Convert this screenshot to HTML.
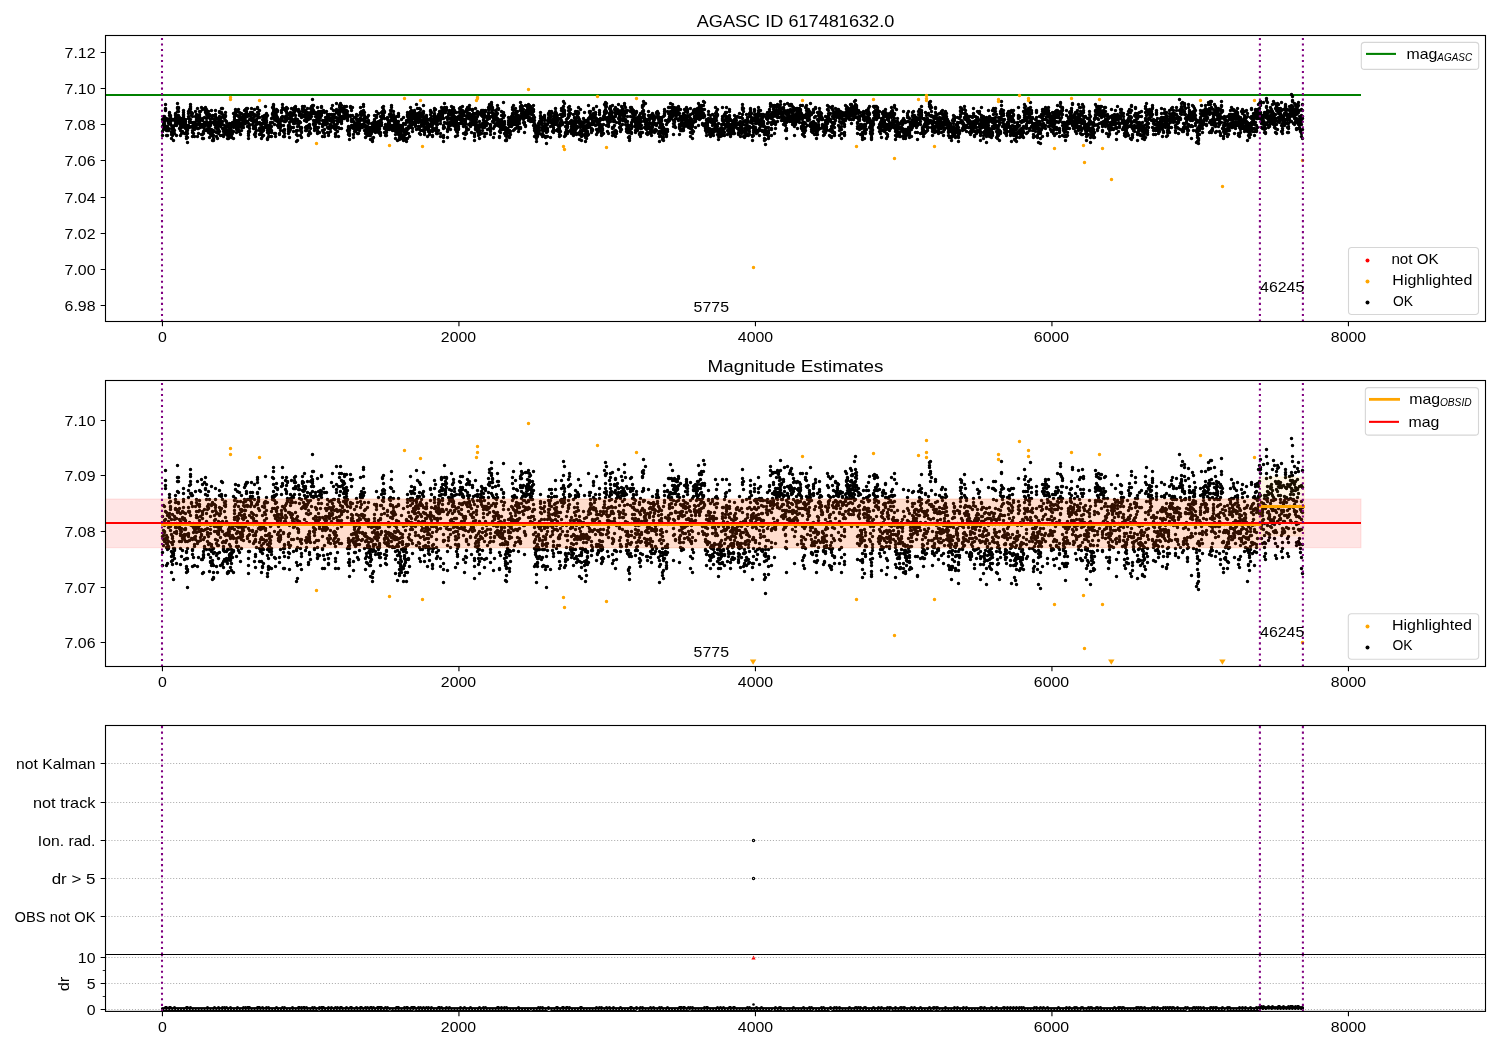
<!DOCTYPE html><html><head><meta charset="utf-8"><style>html,body{margin:0;padding:0;background:#fff;}svg{display:block;font-family:"Liberation Sans",sans-serif;will-change:transform;}</style></head><body>
<svg width="1500" height="1050" viewBox="0 0 1500 1050">
<rect width="1500" height="1050" fill="#fff"/>
<defs><clipPath id="c1"><rect x="105.5" y="35.5" width="1380.0" height="286.0"/></clipPath><clipPath id="c2"><rect x="105.5" y="380.5" width="1380.0" height="286.0"/></clipPath><clipPath id="c3"><rect x="105.5" y="725.5" width="1380.0" height="229.0"/></clipPath><clipPath id="c4"><rect x="105.5" y="954.5" width="1380.0" height="56.89999999999998"/></clipPath></defs>
<g clip-path="url(#c1)">
<path d="M105.5 95H1361" stroke="#008000" stroke-width="2" fill="none"/>
<path d="M162.5 119.5h0m0 16h0m0 -9h0m0 5h0m1 -9h0m0 7h0m0 -5h0m0 3h0m0 -11h0m0 9h0m1 -3h0m0 -6h0m0 9h0m0 -4h0m0 6h0m0 -3h0m1 3h0m0 -7h0m0 -11h0m0 -5h0m0 6h0m0 -2h0m0 10h0m1 0h0m0 9h0m0 -1h0m0 4h0m0 5h0m0 -7h0m1 -2h0m0 4h0m0 5h0m0 -6h0m0 -2h0m0 1h0m0 -9h0m1 10h0m0 -1h0m0 2h0m0 -7h0m0 -1h0m0 -1h0m1 -8h0m0 2h0m0 -3h0m0 6h0m0 2h0m0 -1h0m1 4h0m0 1h0m0 -2h0m0 -7h0m0 1h0m0 1h0m1 8h0m0 -5h0m0 12h0m0 -1h0m0 -3h0m0 10h0m0 -4h0m1 -6h0m0 7h0m0 -8h0m0 -8h0m0 15h0m0 -8h0m0 6h0m1 -1h0m0 -1h0m0 -2h0m0 12h0m0 -8h0m1 -13h0m0 6h0m0 5h0m0 3h0m0 -13h0m1 -3h0m0 -2h0m0 -2h0m0 10h0m0 -9h0m0 8h0m1 -5h0m0 3h0m0 4h0m0 -2h0m0 1h0m0 2h0m0 10h0m1 -17h0m0 -3h0m0 -4h0m0 -3h0m0 -5h0m0 4h0m1 8h0m0 3h0m0 -11h0m0 1h0m0 3h0m0 11h0m1 -5h0m0 6h0m0 -1h0m0 -2h0m0 8h0m1 -7h0m0 3h0m0 1h0m0 5h0m0 -12h0m0 17h0m0 -9h0m1 -3h0m0 4h0m0 -5h0m0 11h0m0 -9h0m0 2h0m1 -6h0m0 2h0m0 -4h0m0 13h0m0 -5h0m1 -11h0m0 -5h0m0 4h0m0 2h0m0 4h0m0 -8h0m0 6h0m1 5h0m0 -3h0m0 7h0m0 -1h0m0 7h0m0 -8h0m1 -4h0m0 3h0m0 -5h0m0 4h0m0 5h0m1 -3h0m0 6h0m0 2h0m0 3h0m0 2h0m1 -1h0m0 5h0m0 -9h0m0 -5h0m0 2h0m1 -5h0m0 1h0m0 -8h0m0 -2h0m0 -5h0m0 2h0m1 -4h0m0 9h0m0 4h0m0 5h0m0 -6h0m1 -12h0m0 -1h0m0 -4h0m0 8h0m0 -6h0m0 1h0m0 12h0m1 3h0m0 -7h0m0 -3h0m0 14h0m1 -13h0m0 3h0m0 14h0m0 -3h0m0 5h0m0 4h0m1 -12h0m0 3h0m0 6h0m0 -10h0m0 -1h0m1 2h0m0 5h0m0 -7h0m0 14h0m0 -10h0m1 -3h0m0 4h0m0 -11h0m0 -5h0m0 15h0m0 -2h0m1 1h0m0 -6h0m0 -1h0m0 -3h0m0 5h0m0 -6h0m1 6h0m0 -5h0m0 -7h0m0 20h0m0 8h0m1 -8h0m0 5h0m0 -10h0m0 -5h0m0 6h0m1 -10h0m0 2h0m0 -5h0m0 11h0m0 -7h0m0 2h0m0 4h0m1 -10h0m0 13h0m0 -5h0m0 7h0m0 1h0m1 -2h0m0 -1h0m0 2h0m0 8h0m0 -27h0m1 11h0m0 -9h0m0 10h0m0 15h0m0 4h0m0 -18h0m1 12h0m0 -8h0m0 14h0m0 -7h0m0 2h0m0 -6h0m1 2h0m0 -7h0m0 4h0m0 4h0m0 -22h0m0 9h0m1 -5h0m0 -1h0m0 -4h0m0 3h0m0 14h0m1 6h0m0 -21h0m0 9h0m0 4h0m0 -8h0m0 7h0m1 7h0m0 -5h0m0 2h0m0 -13h0m0 4h0m0 1h0m1 -2h0m0 -4h0m0 6h0m0 9h0m0 -10h0m0 16h0m0 -3h0m1 -1h0m0 -14h0m0 8h0m0 15h0m0 -7h0m1 -5h0m0 -3h0m0 -3h0m0 5h0m0 9h0m0 1h0m1 -5h0m0 2h0m0 4h0m0 -25h0m0 6h0m1 -1h0m0 3h0m0 4h0m0 8h0m0 5h0m0 5h0m0 -6h0m1 5h0m0 1h0m0 -10h0m0 8h0m0 -3h0m0 -4h0m1 0h0m0 -8h0m0 1h0m0 -5h0m0 -4h0m0 6h0m1 -11h0m0 11h0m0 -5h0m0 -2h0m0 13h0m0 -10h0m1 1h0m0 6h0m0 8h0m0 -9h0m0 5h0m0 8h0m1 2h0m0 -13h0m0 -7h0m0 13h0m0 -2h0m0 -2h0m1 -4h0m0 6h0m0 -4h0m0 8h0m0 -12h0m0 3h0m1 -5h0m0 12h0m0 -15h0m0 -4h0m0 -1h0m0 10h0m1 2h0m0 1h0m0 -2h0m0 4h0m0 9h0m0 -16h0m0 -2h0m1 0h0m0 -9h0m0 5h0m0 -1h0m0 10h0m1 2h0m0 11h0m0 -7h0m0 -14h0m0 7h0m0 -13h0m1 23h0m0 5h0m0 -6h0m0 -1h0m0 5h0m0 -6h0m1 5h0m0 -2h0m0 -6h0m0 -7h0m0 -2h0m0 -1h0m1 -3h0m0 16h0m0 -12h0m0 -1h0m0 5h0m0 6h0m1 -5h0m0 1h0m0 11h0m0 1h0m0 -9h0m0 2h0m0 4h0m1 3h0m0 4h0m0 -8h0m0 5h0m1 2h0m0 -7h0m0 -4h0m0 12h0m0 -14h0m1 8h0m0 -4h0m0 -4h0m0 1h0m0 -2h0m0 10h0m1 -6h0m0 9h0m0 -2h0m0 -2h0m0 -6h0m0 7h0m0 -4h0m1 2h0m0 1h0m0 5h0m0 -14h0m0 7h0m0 5h0m1 -12h0m0 -1h0m0 11h0m0 -2h0m0 -5h0m1 -13h0m0 13h0m0 12h0m0 -16h0m0 9h0m0 -4h0m1 -7h0m0 -3h0m0 6h0m0 -9h0m0 2h0m0 3h0m1 -8h0m0 3h0m0 1h0m0 7h0m0 -9h0m0 -4h0m0 11h0m1 9h0m0 -3h0m0 6h0m0 -5h0m0 -2h0m0 3h0m1 1h0m0 -9h0m0 -9h0m0 12h0m0 -8h0m0 9h0m0 -3h0m1 -1h0m0 -11h0m0 20h0m0 2h0m0 -5h0m0 -3h0m0 -7h0m1 -4h0m0 7h0m0 3h0m0 3h0m0 1h0m0 5h0m1 3h0m0 -9h0m0 -11h0m0 12h0m0 -9h0m1 13h0m0 -3h0m0 -9h0m0 1h0m0 4h0m0 -6h0m0 -4h0m1 9h0m0 4h0m0 -2h0m0 -4h0m0 5h0m0 -2h0m1 0h0m0 4h0m0 -7h0m0 -4h0m0 8h0m0 -9h0m1 2h0m0 2h0m0 1h0m0 -6h0m0 -4h0m0 6h0m1 6h0m0 -2h0m0 -3h0m0 6h0m0 -9h0m0 -5h0m1 2h0m0 1h0m0 4h0m0 -7h0m0 -1h0m1 8h0m0 5h0m0 -7h0m0 -6h0m0 18h0m1 0h0m0 7h0m0 -2h0m0 -8h0m0 12h0m0 3h0m1 -7h0m0 -7h0m0 1h0m0 3h0m0 -14h0m0 5h0m1 -7h0m0 1h0m0 3h0m0 -2h0m1 -1h0m0 7h0m0 -5h0m0 -7h0m0 10h0m1 2h0m0 -7h0m0 -1h0m0 6h0m0 6h0m1 2h0m0 -5h0m0 -2h0m0 1h0m0 2h0m0 6h0m1 -7h0m0 -12h0m0 5h0m0 2h0m0 18h0m0 -6h0m1 5h0m0 3h0m0 -4h0m0 -7h0m0 2h0m0 1h0m1 2h0m0 -11h0m0 2h0m0 1h0m0 2h0m0 -9h0m1 -8h0m0 8h0m0 -3h0m0 -4h0m0 8h0m1 7h0m0 -9h0m0 3h0m0 -4h0m1 -3h0m0 12h0m0 6h0m0 2h0m0 -7h0m0 -6h0m0 17h0m1 -3h0m0 -1h0m0 -6h0m0 3h0m0 -4h0m1 3h0m0 -3h0m0 15h0m0 -11h0m0 2h0m0 5h0m0 -4h0m1 6h0m0 -6h0m0 1h0m0 -8h0m0 -4h0m0 -3h0m1 14h0m0 5h0m0 -7h0m0 -5h0m0 4h0m0 -5h0m1 -6h0m0 -1h0m0 3h0m0 3h0m0 -4h0m1 6h0m0 4h0m0 -1h0m0 -7h0m0 5h0m0 -18h0m0 9h0m1 2h0m0 10h0m0 -12h0m0 5h0m0 -7h0m0 9h0m1 8h0m0 -15h0m0 17h0m0 -4h0m0 -3h0m0 13h0m0 1h0m1 -6h0m0 -8h0m0 11h0m0 -6h0m1 0h0m0 -1h0m0 -1h0m0 3h0m0 5h0m0 -11h0m0 2h0m1 0h0m0 -5h0m0 1h0m0 3h0m0 4h0m0 -2h0m1 8h0m0 -4h0m0 -6h0m0 -4h0m0 8h0m0 1h0m0 -13h0m1 4h0m0 -5h0m0 -3h0m0 -1h0m0 -6h0m1 2h0m0 -4h0m0 9h0m0 -10h0m0 3h0m0 4h0m1 2h0m0 4h0m0 2h0m0 5h0m0 -10h0m0 19h0m1 -18h0m0 21h0m0 -3h0m0 -13h0m0 -7h0m0 -3h0m1 9h0m0 -1h0m0 -1h0m0 -8h0m0 6h0m0 -3h0m1 -2h0m0 9h0m0 2h0m0 -10h0m0 14h0m0 -8h0m1 2h0m0 1h0m0 7h0m0 -4h0m0 1h0m1 9h0m0 -6h0m0 7h0m0 -8h0m1 -1h0m0 1h0m0 -6h0m0 7h0m0 -3h0m0 -3h0m0 9h0m1 -11h0m0 -7h0m0 -2h0m0 7h0m0 1h0m1 -9h0m0 7h0m0 -9h0m0 13h0m0 -16h0m1 21h0m0 5h0m0 1h0m0 5h0m1 -6h0m0 3h0m0 3h0m0 -7h0m0 -12h0m0 4h0m1 -5h0m0 3h0m0 1h0m0 -12h0m0 2h0m0 7h0m0 4h0m1 -6h0m0 5h0m0 -9h0m0 1h0m0 -3h0m0 -2h0m1 7h0m0 1h0m0 -7h0m0 5h0m1 5h0m0 11h0m0 2h0m0 2h0m0 -8h0m0 3h0m0 -2h0m1 -1h0m0 -7h0m0 12h0m0 7h0m0 -6h0m0 -9h0m1 -3h0m0 -4h0m0 -3h0m0 2h0m0 -1h0m0 16h0m0 -13h0m1 -8h0m0 19h0m0 -9h0m0 2h0m0 -6h0m1 5h0m0 -6h0m0 2h0m0 6h0m0 -1h0m1 1h0m0 -11h0m0 17h0m0 4h0m0 -18h0m0 7h0m0 3h0m1 -2h0m0 2h0m0 -15h0m0 2h0m0 2h0m0 -5h0m1 3h0m0 -2h0m0 -2h0m0 9h0m0 3h0m1 2h0m0 14h0m0 -4h0m0 1h0m0 10h0m1 -1h0m0 -5h0m0 -5h0m0 -7h0m0 3h0m0 -7h0m0 2h0m1 0h0m0 4h0m0 -1h0m0 -15h0m0 1h0m0 1h0m1 3h0m0 1h0m0 -3h0m0 -1h0m0 2h0m0 8h0m1 7h0m0 -6h0m0 5h0m0 8h0m0 -5h0m1 -2h0m0 3h0m0 6h0m0 -5h0m0 -5h0m0 -13h0m0 3h0m1 -1h0m0 -7h0m0 -3h0m0 2h0m0 3h0m1 0h0m0 -3h0m0 2h0m0 5h0m0 1h0m1 -1h0m0 -5h0m0 1h0m0 9h0m0 -14h0m0 6h0m1 2h0m0 -1h0m0 -3h0m0 20h0m0 -3h0m0 -10h0m1 9h0m0 -10h0m0 2h0m0 -3h0m0 13h0m0 -7h0m0 9h0m1 -2h0m0 -13h0m0 -2h0m0 1h0m0 -6h0m0 4h0m1 3h0m0 19h0m0 -7h0m0 8h0m0 -16h0m0 6h0m0 -8h0m1 10h0m0 -3h0m0 2h0m0 -1h0m0 7h0m0 -1h0m1 -3h0m0 5h0m0 -15h0m0 -6h0m0 -4h0m0 6h0m1 2h0m0 -10h0m0 4h0m0 -2h0m0 5h0m1 -5h0m0 -1h0m0 4h0m0 -6h0m0 4h0m0 -10h0m1 6h0m0 5h0m0 10h0m0 3h0m0 -10h0m0 11h0m1 0h0m0 -1h0m0 7h0m0 -2h0m0 -2h0m0 -1h0m1 -13h0m0 1h0m0 7h0m0 -4h0m0 8h0m0 -3h0m1 -4h0m0 4h0m0 -8h0m0 7h0m0 7h0m1 -20h0m0 14h0m0 12h0m0 -1h0m0 -2h0m1 -16h0m0 13h0m0 -9h0m0 3h0m0 1h0m0 -11h0m0 4h0m1 -2h0m0 10h0m0 -3h0m0 12h0m1 -20h0m0 -1h0m0 6h0m1 -10h0m0 -1h0m0 6h0m0 -1h0m0 2h0m0 2h0m1 9h0m0 6h0m0 6h0m0 -10h0m0 -6h0m1 12h0m0 -10h0m0 2h0m0 -1h0m0 -13h0m1 26h0m0 -3h0m0 -13h0m0 9h0m0 -6h0m0 -11h0m0 12h0m1 0h0m0 -3h0m0 -4h0m0 3h0m0 3h0m1 -4h0m0 -8h0m0 6h0m0 7h0m0 -2h0m0 -1h0m0 -1h0m1 -4h0m0 1h0m0 -3h0m0 13h0m0 -4h0m0 9h0m1 1h0m0 -5h0m0 -1h0m0 8h0m0 -18h0m1 0h0m0 -3h0m0 5h0m0 1h0m0 6h0m1 -7h0m0 12h0m0 -5h0m0 2h0m0 -4h0m1 -3h0m0 -7h0m0 3h0m0 2h0m0 -11h0m1 11h0m0 -14h0m0 13h0m0 -2h0m0 -1h0m0 2h0m1 5h0m0 -8h0m0 2h0m0 -6h0m0 15h0m0 2h0m0 -7h0m1 -3h0m0 7h0m0 3h0m0 1h0m0 -14h0m0 11h0m1 1h0m0 -1h0m0 3h0m0 8h0m0 -2h0m0 -5h0m0 4h0m1 -7h0m0 -6h0m0 -3h0m0 -14h0m0 8h0m0 1h0m0 -3h0m1 9h0m0 13h0m0 -4h0m0 -4h0m0 -2h0m1 15h0m0 -9h0m0 -13h0m0 -4h0m0 11h0m1 -8h0m0 2h0m0 5h0m0 -15h0m0 12h0m0 11h0m0 -21h0m1 10h0m0 4h0m0 -5h0m0 -6h0m0 -7h0m0 8h0m1 -6h0m0 3h0m0 10h0m0 5h0m0 -2h0m0 7h0m0 -9h0m1 -3h0m0 2h0m0 -1h0m0 -8h0m0 -1h0m1 1h0m0 -1h0m0 10h0m0 -6h0m0 -2h0m0 5h0m1 3h0m0 -7h0m0 -1h0m0 -4h0m0 7h0m0 -4h0m1 2h0m0 1h0m0 3h0m0 -1h0m1 -1h0m0 -3h0m0 2h0m0 4h0m0 -10h0m0 9h0m1 -1h0m0 6h0m0 -9h0m0 5h0m0 2h0m0 12h0m1 4h0m0 -2h0m0 -6h0m0 2h0m0 -1h0m0 2h0m1 1h0m0 9h0m0 -6h0m0 2h0m0 -1h0m0 -5h0m0 -1h0m1 -12h0m0 -1h0m0 -8h0m0 -1h0m1 2h0m0 11h0m0 6h0m0 -4h0m0 -1h0m0 7h0m0 -17h0m1 -3h0m0 12h0m0 8h0m0 -12h0m0 10h0m0 -5h0m1 5h0m0 -4h0m0 6h0m0 10h0m0 -9h0m0 6h0m1 -3h0m0 -2h0m0 -6h0m0 -6h0m0 7h0m1 4h0m0 -3h0m0 4h0m0 -2h0m0 4h0m1 -9h0m0 -3h0m0 -3h0m0 9h0m0 2h0m0 -1h0m0 -12h0m1 7h0m0 -6h0m0 9h0m0 2h0m0 7h0m0 -4h0m1 4h0m0 -9h0m0 -3h0m0 -2h0m0 4h0m0 4h0m1 -7h0m0 10h0m0 -7h0m0 2h0m0 4h0m1 -9h0m0 -3h0m0 -4h0m0 -1h0m0 2h0m0 -7h0m1 12h0m0 8h0m0 -15h0m0 3h0m0 -4h0m0 2h0m1 0h0m0 11h0m0 1h0m0 2h0m0 -8h0m1 -6h0m0 7h0m0 -8h0m0 -8h0m0 2h0m0 4h0m1 2h0m0 5h0m0 -2h0m0 7h0m0 -3h0m0 7h0m0 4h0m1 -10h0m0 6h0m0 7h0m0 -8h0m0 -8h0m0 10h0m0 10h0m1 -6h0m0 -10h0m0 6h0m0 -1h0m0 8h0m0 -2h0m1 -10h0m0 7h0m0 -12h0m0 9h0m0 9h0m1 -14h0m0 -6h0m0 5h0m0 3h0m0 8h0m0 -3h0m0 1h0m1 0h0m0 2h0m0 4h0m0 -2h0m0 -6h0m1 8h0m0 -1h0m0 5h0m0 -7h0m0 1h0m1 -3h0m0 -7h0m0 10h0m0 -6h0m1 12h0m0 -8h0m0 7h0m0 3h0m0 -14h0m0 -2h0m1 3h0m0 -5h0m0 6h0m0 8h0m0 -7h0m0 -8h0m1 4h0m0 -5h0m0 -2h0m0 1h0m0 -5h0m0 9h0m1 4h0m0 -1h0m0 -2h0m0 6h0m0 -5h0m0 6h0m1 -16h0m0 7h0m0 -6h0m0 5h0m0 -11h0m0 4h0m1 8h0m0 4h0m0 2h0m0 -3h0m0 -1h0m1 -12h0m0 8h0m0 5h0m0 6h0m0 -2h0m1 -1h0m0 -6h0m0 9h0m0 1h0m0 -5h0m1 4h0m0 1h0m0 2h0m0 -10h0m0 -5h0m0 -4h0m1 3h0m0 6h0m0 -3h0m0 2h0m0 -8h0m0 -4h0m1 0h0m0 -5h0m0 7h0m0 -3h0m1 6h0m0 -4h0m0 -4h0m0 6h0m0 -9h0m0 5h0m1 0h0m0 1h0m0 6h0m0 9h0m0 1h0m0 4h0m1 1h0m0 2h0m0 -9h0m0 2h0m0 -4h0m1 6h0m0 5h0m0 -3h0m0 -7h0m0 1h0m0 5h0m1 -3h0m0 1h0m0 -12h0m0 2h0m0 -1h0m0 9h0m0 -2h0m1 2h0m0 -5h0m0 6h0m0 -3h0m0 -4h0m0 2h0m1 3h0m0 3h0m0 -6h0m0 -9h0m1 1h0m0 1h0m0 4h0m0 5h0m0 -15h0m0 4h0m0 -1h0m1 -6h0m0 3h0m0 16h0m0 -21h0m0 13h0m0 2h0m0 8h0m1 -9h0m0 6h0m0 5h0m0 -10h0m0 9h0m0 -13h0m1 0h0m0 2h0m0 -4h0m0 -3h0m0 16h0m0 -8h0m1 0h0m0 -1h0m0 8h0m0 1h0m0 -3h0m0 6h0m0 -8h0m1 4h0m0 12h0m0 -14h0m0 7h0m0 3h0m0 -7h0m0 -8h0m1 4h0m0 3h0m0 -5h0m0 -5h0m0 13h0m1 -5h0m0 3h0m0 3h0m0 2h0m0 -4h0m0 12h0m1 -11h0m0 5h0m0 -10h0m0 -9h0m0 -2h0m0 3h0m0 5h0m1 10h0m0 7h0m0 -10h0m0 -2h0m0 13h0m0 -2h0m1 -4h0m0 -1h0m0 3h0m0 2h0m0 -1h0m0 -11h0m1 9h0m0 -4h0m0 -11h0m0 7h0m0 12h0m0 -1h0m1 -1h0m0 -7h0m0 -3h0m0 -1h0m0 3h0m0 -1h0m1 -10h0m0 6h0m0 13h0m0 4h0m0 -9h0m0 -1h0m1 5h0m0 4h0m0 -6h0m0 -1h0m0 -2h0m1 4h0m0 -4h0m0 -6h0m0 5h0m0 9h0m1 3h0m0 -8h0m0 -2h0m0 -9h0m0 6h0m0 -8h0m0 1h0m1 -7h0m0 15h0m0 -14h0m0 -3h0m0 4h0m0 22h0m1 -5h0m0 -7h0m0 -8h0m0 3h0m0 7h0m1 8h0m0 -11h0m0 -4h0m0 6h0m0 -5h0m0 -3h0m1 5h0m0 -5h0m0 -5h0m0 2h0m0 -3h0m0 -6h0m0 4h0m1 -1h0m0 10h0m0 -8h0m0 11h0m0 -9h0m0 7h0m0 6h0m1 4h0m0 -7h0m0 -6h0m0 10h0m0 -15h0m0 -2h0m0 4h0m1 -1h0m0 3h0m0 1h0m0 4h0m1 -4h0m0 -8h0m0 2h0m0 -1h0m1 9h0m0 -3h0m0 -1h0m0 7h0m0 2h0m0 1h0m0 -8h0m1 2h0m0 -5h0m0 14h0m0 -13h0m0 -12h0m0 10h0m1 -1h0m0 -5h0m0 8h0m0 3h0m0 -2h0m0 -3h0m1 -1h0m0 13h0m0 2h0m0 -6h0m0 -1h0m0 -3h0m0 -1h0m1 -5h0m0 1h0m0 -5h0m0 8h0m0 12h0m0 1h0m0 4h0m1 1h0m0 -4h0m0 -4h0m0 -10h0m0 -7h0m0 6h0m0 4h0m1 3h0m0 2h0m0 -3h0m0 -6h0m0 -1h0m0 6h0m1 -8h0m0 9h0m0 -5h0m0 7h0m0 7h0m1 -25h0m0 8h0m0 5h0m0 -2h0m0 -5h0m0 15h0m0 3h0m1 -2h0m0 5h0m0 -11h0m0 -3h0m0 16h0m0 -10h0m1 5h0m0 -9h0m0 3h0m0 -4h0m0 -2h0m1 3h0m0 -3h0m0 -2h0m0 8h0m0 -7h0m0 11h0m0 -5h0m1 1h0m0 1h0m0 -2h0m0 -3h0m0 17h0m0 -11h0m1 6h0m0 -1h0m0 -5h0m0 2h0m0 1h0m0 1h0m1 5h0m0 -2h0m0 -13h0m0 11h0m0 -5h0m0 -1h0m1 -5h0m0 -1h0m0 -8h0m0 1h0m0 9h0m0 -6h0m1 8h0m0 4h0m0 -10h0m0 3h0m0 4h0m0 -11h0m0 9h0m1 14h0m0 -4h0m0 5h0m0 -6h0m0 -5h0m0 4h0m1 -1h0m0 2h0m0 -8h0m0 1h0m0 -4h0m1 1h0m0 -12h0m0 9h0m0 -4h0m0 -3h0m0 4h0m0 1h0m1 -6h0m0 7h0m0 6h0m0 -5h0m0 3h0m1 9h0m0 4h0m0 -2h0m0 -8h0m0 4h0m0 -3h0m0 -6h0m1 15h0m0 -9h0m0 -4h0m0 -2h0m0 3h0m1 -4h0m0 1h0m0 -3h0m0 -1h0m0 2h0m0 14h0m1 -12h0m0 -4h0m0 -3h0m0 4h0m0 -2h0m1 7h0m0 -9h0m0 2h0m0 10h0m0 10h0m0 3h0m1 -18h0m0 -1h0m0 -7h0m0 -3h0m0 5h0m1 2h0m0 -5h0m0 8h0m0 -6h0m0 5h0m0 -6h0m1 8h0m0 7h0m0 2h0m0 8h0m0 6h0m0 -4h0m0 -9h0m1 -1h0m0 -5h0m0 -15h0m0 2h0m0 3h0m0 -9h0m1 7h0m0 2h0m0 -3h0m0 2h0m0 -3h0m1 2h0m0 13h0m0 -14h0m0 -2h0m0 10h0m1 2h0m0 3h0m0 15h0m0 -8h0m0 2h0m1 -4h0m0 -3h0m0 -6h0m0 -5h0m0 13h0m0 -11h0m1 -2h0m0 -2h0m0 3h0m0 -4h0m1 11h0m0 3h0m0 5h0m0 -16h0m0 5h0m0 4h0m0 3h0m1 -4h0m0 -10h0m0 4h0m0 5h0m0 -8h0m0 -6h0m0 16h0m1 -3h0m0 -10h0m0 4h0m0 3h0m0 -2h0m1 9h0m0 2h0m0 -4h0m0 -6h0m0 -1h0m0 -7h0m0 1h0m1 2h0m0 1h0m0 5h0m0 -4h0m0 5h0m0 3h0m0 -2h0m1 9h0m0 -1h0m0 10h0m0 -16h0m0 4h0m0 5h0m0 -6h0m1 -1h0m0 -5h0m0 -5h0m0 15h0m0 -7h0m0 11h0m1 4h0m0 -3h0m0 -3h0m0 -5h0m0 6h0m0 -7h0m1 6h0m0 -1h0m0 -12h0m0 10h0m0 -1h0m0 -7h0m1 1h0m0 -4h0m0 -7h0m0 15h0m0 -5h0m0 -6h0m0 -1h0m1 -4h0m0 5h0m0 -4h0m0 3h0m0 -1h0m1 2h0m0 11h0m0 -6h0m0 -2h0m0 6h0m0 -2h0m1 -3h0m0 -1h0m0 -2h0m0 -3h0m0 2h0m0 -6h0m0 5h0m1 9h0m0 13h0m0 -9h0m0 -5h0m0 -6h0m0 13h0m1 -5h0m0 -1h0m0 -5h0m0 8h0m0 15h0m1 -18h0m0 -9h0m0 8h0m0 3h0m0 2h0m0 10h0m0 -2h0m1 1h0m0 -6h0m0 3h0m0 -2h0m0 -12h0m0 -7h0m1 3h0m0 3h0m0 -2h0m0 -4h0m0 -2h0m0 9h0m1 2h0m0 6h0m0 -11h0m0 -5h0m0 21h0m1 -24h0m0 11h0m0 -3h0m0 2h0m0 -7h0m0 1h0m1 17h0m0 -7h0m0 5h0m0 -2h0m0 -6h0m1 16h0m0 -15h0m0 2h0m0 4h0m1 -13h0m0 4h0m0 10h0m0 -15h0m0 11h0m1 3h0m0 -2h0m0 -7h0m0 6h0m0 -7h0m0 5h0m1 -2h0m0 8h0m0 12h0m0 -3h0m0 7h0m0 -6h0m1 -5h0m0 -3h0m0 2h0m0 -7h0m0 -8h0m0 -5h0m0 14h0m1 0h0m0 3h0m0 3h0m0 -10h0m0 -1h0m0 2h0m1 -7h0m0 -1h0m0 3h0m0 -1h0m0 3h0m0 13h0m0 2h0m1 -3h0m0 5h0m0 -6h0m0 2h0m0 6h0m0 -5h0m0 -5h0m1 -1h0m0 8h0m0 -2h0m0 8h0m0 -4h0m0 -7h0m0 -6h0m1 5h0m0 -12h0m0 -2h0m0 1h0m1 0h0m0 -3h0m0 1h0m0 4h0m0 11h0m0 7h0m1 -10h0m0 7h0m0 -5h0m0 2h0m0 -14h0m0 3h0m0 -6h0m1 2h0m0 7h0m0 1h0m0 -4h0m0 -3h0m0 -3h0m0 7h0m1 -3h0m0 19h0m0 3h0m0 -9h0m0 -5h0m0 -6h0m1 -5h0m0 -1h0m0 14h0m0 -2h0m0 3h0m0 -4h0m0 -5h0m1 0h0m0 1h0m0 8h0m0 8h0m0 -11h0m1 -5h0m0 2h0m0 4h0m0 6h0m1 -16h0m0 4h0m0 -5h0m0 -3h0m0 6h0m0 -8h0m1 -2h0m0 3h0m0 1h0m0 -5h0m0 14h0m0 -1h0m0 11h0m1 -3h0m0 1h0m0 5h0m0 -7h0m0 6h0m0 4h0m0 -6h0m1 -12h0m0 -10h0m0 -1h0m0 -3h0m0 2h0m0 8h0m0 -4h0m1 0h0m0 -1h0m0 3h0m0 3h0m0 8h0m1 16h0m0 -9h0m0 -6h0m0 -4h0m0 -5h0m0 7h0m0 -5h0m1 11h0m0 7h0m0 -13h0m0 -2h0m0 1h0m1 -5h0m0 2h0m0 -6h0m0 14h0m1 0h0m0 -5h0m0 4h0m0 -8h0m0 -1h0m0 -2h0m1 1h0m0 -5h0m0 10h0m0 -13h0m0 17h0m0 3h0m0 -1h0m1 -4h0m0 1h0m0 -2h0m0 -11h0m0 1h0m0 15h0m1 7h0m0 -9h0m0 -1h0m0 16h0m0 -11h0m0 10h0m1 -7h0m0 -5h0m0 8h0m0 -7h0m0 -4h0m0 5h0m1 -2h0m0 -3h0m0 2h0m0 -1h0m0 -3h0m0 -4h0m0 -4h0m1 18h0m0 -1h0m0 -1h0m0 -2h0m0 1h0m0 -4h0m1 -6h0m0 -4h0m0 -10h0m0 11h0m0 4h0m1 10h0m0 -4h0m0 6h0m0 -8h0m0 3h0m0 -9h0m0 18h0m1 -1h0m0 2h0m0 1h0m0 -7h0m0 12h0m0 -13h0m1 4h0m0 9h0m0 -7h0m0 6h0m0 -3h0m1 -4h0m0 -1h0m0 -3h0m0 7h0m0 -6h0m0 1h0m1 -6h0m0 -7h0m0 5h0m0 -2h0m0 11h0m1 6h0m0 -5h0m0 -2h0m0 6h0m0 -10h0m0 5h0m1 0h0m0 3h0m0 -14h0m0 -2h0m0 7h0m0 -2h0m1 0h0m0 -1h0m0 -3h0m0 7h0m0 -10h0m0 5h0m1 -8h0m0 7h0m0 2h0m0 -15h0m0 7h0m0 2h0m0 -7h0m1 -4h0m0 8h0m0 4h0m0 13h0m0 -6h0m0 -14h0m1 3h0m0 8h0m0 8h0m0 -7h0m0 -4h0m1 6h0m0 -8h0m0 2h0m0 10h0m0 -9h0m0 -11h0m1 13h0m0 -5h0m0 2h0m0 -5h0m0 -2h0m0 4h0m1 5h0m0 1h0m0 3h0m0 2h0m0 -15h0m0 6h0m1 3h0m0 -2h0m0 13h0m0 -4h0m0 1h0m0 -13h0m0 1h0m1 1h0m0 1h0m0 2h0m0 3h0m0 4h0m0 1h0m1 0h0m0 -1h0m0 -17h0m0 -4h0m0 3h0m0 -2h0m0 -5h0m1 7h0m0 6h0m0 -10h0m0 1h0m0 5h0m0 2h0m0 -6h0m1 3h0m0 -4h0m0 7h0m0 5h0m1 -6h0m0 10h0m0 -8h0m0 2h0m0 3h0m0 -10h0m1 5h0m0 8h0m0 -10h0m0 12h0m0 8h0m0 -15h0m1 8h0m0 -8h0m0 9h0m0 -21h0m0 7h0m0 1h0m1 -1h0m0 -2h0m0 3h0m0 2h0m0 -4h0m1 6h0m0 -7h0m0 -1h0m0 -4h0m0 2h0m0 4h0m1 -7h0m0 10h0m0 6h0m0 -8h0m0 5h0m0 -8h0m1 -1h0m0 9h0m0 -11h0m0 6h0m0 -7h0m1 8h0m0 8h0m0 -1h0m0 -10h0m0 1h0m0 -5h0m1 4h0m0 3h0m0 6h0m0 -7h0m0 2h0m1 -2h0m0 -4h0m0 13h0m0 -12h0m0 9h0m0 -7h0m0 3h0m1 -9h0m0 6h0m0 -2h0m0 8h0m0 -2h0m0 5h0m0 5h0m1 5h0m0 -2h0m0 8h0m0 -9h0m0 -10h0m0 6h0m0 -3h0m1 12h0m0 -5h0m0 -2h0m0 6h0m0 4h0m0 -5h0m1 1h0m0 -2h0m0 -3h0m0 6h0m0 9h0m0 -11h0m0 8h0m1 -5h0m0 -4h0m0 7h0m0 -1h0m1 -6h0m0 4h0m0 -3h0m0 -4h0m0 -3h0m0 2h0m1 8h0m0 -6h0m0 -6h0m0 9h0m0 -7h0m1 -7h0m0 2h0m0 5h0m0 -11h0m0 3h0m1 7h0m0 2h0m0 -7h0m0 3h0m0 -2h0m0 16h0m1 -6h0m0 -1h0m0 3h0m0 -1h0m0 7h0m0 -3h0m1 2h0m0 -5h0m0 -4h0m0 -9h0m1 3h0m0 3h0m0 -7h0m0 14h0m0 -15h0m0 3h0m1 9h0m0 2h0m0 7h0m0 1h0m0 -11h0m1 -1h0m0 4h0m0 -1h0m0 15h0m0 -11h0m1 -9h0m0 5h0m0 2h0m0 1h0m0 5h0m0 -12h0m0 -4h0m1 -3h0m0 -4h0m0 7h0m0 -2h0m0 1h0m0 -5h0m1 -3h0m0 4h0m0 5h0m0 -4h0m0 1h0m0 2h0m1 -5h0m0 12h0m0 -4h0m0 15h0m0 -17h0m1 1h0m0 -10h0m0 1h0m0 1h0m0 3h0m1 3h0m0 5h0m0 -3h0m0 2h0m0 8h0m0 -6h0m1 2h0m0 2h0m0 2h0m0 1h0m1 -13h0m0 -6h0m0 9h0m0 2h0m0 -9h0m0 2h0m1 0h0m0 3h0m0 -9h0m0 -3h0m0 7h0m0 4h0m1 3h0m0 8h0m0 -6h0m0 -11h0m0 4h0m0 1h0m1 6h0m0 -9h0m0 6h0m0 8h0m0 -11h0m1 8h0m0 -8h0m0 1h0m0 12h0m1 3h0m0 -5h0m0 7h0m0 -9h0m0 -1h0m1 -8h0m0 -4h0m0 8h0m0 3h0m0 -2h0m0 8h0m0 4h0m1 -15h0m0 -12h0m0 7h0m0 -5h0m0 4h0m0 8h0m1 2h0m0 -2h0m0 -6h0m0 -1h0m1 -6h0m0 -3h0m0 4h0m0 5h0m0 -3h0m0 2h0m0 -13h0m1 2h0m0 7h0m0 4h0m0 -1h0m0 -2h0m0 4h0m0 21h0m1 -10h0m0 7h0m0 -11h0m0 13h0m0 -1h0m0 -2h0m1 0h0m0 -6h0m0 3h0m0 -7h0m0 -3h0m0 11h0m1 -8h0m0 11h0m0 -7h0m0 1h0m0 -9h0m0 6h0m1 -7h0m0 -3h0m0 -4h0m0 6h0m0 15h0m0 -24h0m1 8h0m0 -9h0m0 3h0m0 4h0m0 -1h0m1 -3h0m0 4h0m0 10h0m0 -2h0m0 9h0m1 2h0m0 -1h0m0 2h0m0 -13h0m0 8h0m0 -2h0m0 -3h0m1 0h0m0 7h0m0 2h0m1 -7h0m0 -4h0m0 -7h0m0 17h0m0 -3h0m0 7h0m0 -5h0m1 3h0m0 -6h0m0 -10h0m0 8h0m0 -4h0m0 -3h0m1 6h0m0 -11h0m0 -2h0m0 19h0m0 -4h0m0 -7h0m1 3h0m0 11h0m0 -12h0m0 6h0m0 1h0m0 6h0m0 -16h0m1 -7h0m0 4h0m0 18h0m0 -6h0m0 -1h0m0 -10h0m1 5h0m0 -4h0m0 -4h0m0 -6h0m0 5h0m1 7h0m0 7h0m0 -3h0m0 -2h0m0 13h0m0 -2h0m0 7h0m1 -9h0m0 -9h0m0 -12h0m0 18h0m0 -3h0m0 2h0m1 -1h0m0 15h0m0 -9h0m0 5h0m0 -4h0m0 2h0m1 -4h0m0 -4h0m0 -3h0m0 -1h0m1 -4h0m0 8h0m0 -5h0m0 6h0m0 -2h0m0 3h0m0 2h0m1 -4h0m0 -4h0m0 -10h0m0 8h0m0 14h0m0 1h0m1 0h0m0 6h0m0 -4h0m0 -6h0m0 -1h0m0 4h0m1 4h0m0 -13h0m0 9h0m0 -8h0m0 -6h0m0 8h0m1 -2h0m0 9h0m0 -4h0m0 2h0m0 -1h0m0 -10h0m1 0h0m0 5h0m0 7h0m0 -15h0m0 -14h0m0 13h0m1 5h0m0 -11h0m0 12h0m0 -7h0m0 -6h0m0 7h0m0 8h0m1 -9h0m0 -3h0m0 4h0m0 -7h0m0 4h0m0 1h0m1 1h0m0 12h0m0 3h0m0 -2h0m0 -2h0m0 -13h0m0 9h0m1 0h0m0 6h0m0 -10h0m0 2h0m0 -1h0m0 8h0m1 -21h0m0 5h0m0 4h0m0 -1h0m0 -7h0m1 5h0m0 3h0m0 4h0m0 -6h0m0 9h0m1 -7h0m0 -5h0m0 2h0m0 11h0m0 -5h0m1 -14h0m0 13h0m0 10h0m0 -11h0m0 16h0m1 -12h0m0 10h0m0 -3h0m0 2h0m0 -7h0m0 -4h0m0 -1h0m1 5h0m0 5h0m0 2h0m0 -1h0m1 -11h0m0 8h0m0 -6h0m0 -9h0m0 2h0m0 -4h0m0 19h0m1 -2h0m0 2h0m0 1h0m0 -12h0m0 6h0m0 1h0m1 -6h0m0 6h0m0 10h0m0 -5h0m0 3h0m0 -4h0m1 -4h0m0 9h0m0 -1h0m0 -5h0m0 2h0m0 -1h0m1 4h0m0 -15h0m0 6h0m0 -5h0m0 -3h0m1 0h0m0 -2h0m0 -2h0m0 -8h0m0 7h0m1 -1h0m0 -4h0m0 7h0m0 -11h0m0 7h0m1 -3h0m0 6h0m0 -9h0m0 15h0m0 -7h0m0 8h0m0 6h0m1 -6h0m0 2h0m0 4h0m0 6h0m0 -7h0m0 -7h0m1 9h0m0 7h0m0 -16h0m0 8h0m0 -5h0m0 3h0m0 -2h0m1 -2h0m0 -5h0m0 2h0m0 -8h0m0 5h0m0 8h0m1 0h0m0 -9h0m0 -5h0m0 2h0m0 1h0m0 -4h0m1 6h0m0 -1h0m0 7h0m0 -2h0m0 -2h0m1 4h0m0 -2h0m0 -11h0m0 22h0m0 1h0m0 4h0m0 3h0m1 -8h0m0 7h0m0 -13h0m0 -3h0m1 13h0m0 -10h0m0 -9h0m0 -3h0m0 11h0m0 5h0m1 -14h0m0 -4h0m0 7h0m0 2h0m0 14h0m0 6h0m1 -3h0m0 -2h0m0 -9h0m0 -9h0m0 -4h0m0 3h0m1 1h0m0 -1h0m0 -3h0m0 1h0m1 0h0m0 -6h0m0 8h0m0 1h0m0 5h0m1 4h0m0 -6h0m0 3h0m0 4h0m0 -3h0m0 7h0m1 1h0m0 3h0m0 -5h0m0 3h0m0 -11h0m0 -5h0m1 -1h0m0 -6h0m0 5h0m0 -1h0m0 19h0m1 -5h0m0 -10h0m0 -2h0m0 1h0m0 -5h0m0 12h0m0 -5h0m1 3h0m0 -1h0m0 -6h0m0 -1h0m0 3h0m0 -1h0m0 8h0m1 -4h0m0 -3h0m0 1h0m0 -11h0m0 2h0m0 6h0m1 1h0m0 -5h0m0 12h0m0 2h0m0 3h0m1 7h0m0 -21h0m0 2h0m0 13h0m0 3h0m0 1h0m1 -2h0m0 -3h0m0 -14h0m0 6h0m0 5h0m0 11h0m0 -7h0m1 1h0m0 11h0m0 -9h0m0 4h0m0 -1h0m1 1h0m0 8h0m0 -4h0m0 2h0m0 -13h0m1 7h0m0 -3h0m0 -13h0m0 -6h0m0 1h0m0 -4h0m1 15h0m0 11h0m0 -1h0m0 -6h0m0 2h0m0 -4h0m0 -17h0m1 4h0m0 -1h0m0 3h0m0 3h0m0 -7h0m0 10h0m0 1h0m1 -5h0m0 -3h0m0 5h0m0 -7h0m0 4h0m1 1h0m0 4h0m0 -5h0m0 3h0m0 4h0m0 5h0m1 -6h0m0 -6h0m0 11h0m0 -3h0m0 8h0m0 2h0m0 -9h0m1 2h0m0 -4h0m0 -9h0m0 -1h0m0 7h0m0 10h0m0 2h0m1 -6h0m0 -7h0m0 13h0m0 -1h0m0 -8h0m0 4h0m1 2h0m0 -3h0m0 -3h0m0 1h0m0 -2h0m1 5h0m0 8h0m0 -18h0m0 3h0m0 8h0m0 8h0m1 0h0m0 -6h0m0 8h0m0 -4h0m0 -13h0m0 -6h0m0 9h0m1 -1h0m0 -4h0m0 8h0m0 3h0m1 4h0m0 -15h0m0 -6h0m0 -6h0m0 2h0m0 -1h0m1 -2h0m0 6h0m0 4h0m0 -3h0m0 4h0m0 -10h0m0 -4h0m1 13h0m0 6h0m0 7h0m0 -8h0m0 2h0m0 -3h0m0 -1h0m1 -14h0m0 16h0m0 2h0m0 3h0m0 4h0m0 -8h0m1 7h0m0 -3h0m0 -3h0m0 7h0m0 5h0m0 -4h0m1 5h0m0 -7h0m0 -2h0m0 -6h0m0 4h0m0 9h0m1 -4h0m0 -13h0m0 8h0m0 2h0m0 -14h0m1 8h0m0 -2h0m0 3h0m0 8h0m0 -5h0m1 -7h0m0 -1h0m0 3h0m0 9h0m0 6h0m0 -2h0m1 4h0m0 -4h0m0 -2h0m0 3h0m0 -9h0m0 1h0m1 -11h0m0 4h0m0 -2h0m0 16h0m0 -4h0m0 3h0m1 -6h0m0 -3h0m0 -2h0m0 -4h0m0 1h0m1 3h0m0 5h0m0 8h0m0 -15h0m0 -1h0m0 2h0m1 5h0m0 1h0m0 -7h0m0 12h0m0 2h0m1 -7h0m0 1h0m0 -13h0m0 1h0m0 17h0m1 -18h0m0 3h0m0 -4h0m1 5h0m0 2h0m0 1h0m0 -6h0m0 20h0m0 -11h0m1 14h0m0 -19h0m0 4h0m0 6h0m0 7h0m0 7h0m0 -10h0m1 1h0m0 -1h0m0 4h0m0 -11h0m0 1h0m0 2h0m1 -3h0m0 -5h0m0 -2h0m0 4h0m0 -1h0m0 -2h0m0 10h0m1 3h0m0 -5h0m0 6h0m0 7h0m0 -15h0m0 6h0m0 7h0m1 0h0m0 -5h0m0 8h0m0 -7h0m0 1h0m0 -18h0m0 11h0m1 6h0m0 -20h0m0 -2h0m0 -2h0m0 6h0m0 -1h0m1 6h0m0 11h0m0 1h0m0 -3h0m1 0h0m0 6h0m0 -3h0m0 2h0m0 -10h0m0 12h0m1 -7h0m0 2h0m0 -20h0m0 9h0m0 2h0m1 -1h0m0 -2h0m0 -12h0m0 6h0m1 3h0m0 -9h0m0 5h0m0 8h0m0 -3h0m1 -6h0m0 1h0m0 6h0m0 -4h0m0 -11h0m1 10h0m0 2h0m0 -8h0m0 7h0m0 4h0m0 -6h0m1 -3h0m0 -5h0m0 3h0m0 1h0m0 4h0m0 4h0m1 4h0m0 14h0m0 -8h0m0 -15h0m0 12h0m0 -11h0m0 2h0m1 -7h0m0 1h0m0 1h0m0 1h0m0 15h0m0 -3h0m0 -1h0m1 -3h0m0 9h0m0 -15h0m0 3h0m0 -4h0m1 4h0m0 3h0m0 -7h0m0 -3h0m0 2h0m1 0h0m0 -3h0m0 6h0m0 -5h0m1 6h0m0 -7h0m0 2h0m0 -3h0m0 6h0m0 7h0m0 1h0m1 -7h0m0 5h0m0 8h0m0 -2h0m0 10h0m0 -7h0m0 1h0m1 -9h0m0 -10h0m0 7h0m0 14h0m0 -5h0m0 3h0m1 -5h0m0 -1h0m0 2h0m0 -8h0m0 3h0m0 -1h0m0 12h0m1 -7h0m0 7h0m0 -5h0m0 -3h0m0 -3h0m0 -1h0m1 -5h0m0 3h0m0 -2h0m0 11h0m0 3h0m0 2h0m1 -8h0m0 -13h0m0 14h0m0 3h0m0 -7h0m1 -2h0m0 8h0m0 -10h0m0 8h0m0 -12h0m0 5h0m1 -9h0m0 13h0m0 -11h0m0 9h0m0 -8h0m0 -2h0m1 1h0m0 2h0m0 1h0m0 -2h0m0 5h0m0 11h0m0 -4h0m1 -2h0m0 6h0m0 -10h0m0 5h0m0 3h0m0 3h0m1 -5h0m0 3h0m0 -9h0m0 1h0m0 10h0m1 9h0m0 -4h0m0 -4h0m0 -10h0m0 -4h0m0 -6h0m0 13h0m1 -1h0m0 -1h0m0 5h0m0 -2h0m0 6h0m1 -15h0m0 11h0m0 6h0m0 3h0m0 5h0m0 -12h0m1 5h0m0 -18h0m0 -2h0m0 -1h0m0 11h0m0 1h0m1 -4h0m0 -8h0m0 7h0m0 -8h0m0 7h0m0 -5h0m1 8h0m0 -1h0m0 -2h0m0 -7h0m0 8h0m0 10h0m0 -6h0m1 -11h0m0 4h0m0 -3h0m0 1h0m1 1h0m0 -3h0m0 8h0m0 -7h0m0 -2h0m0 -1h0m1 0h0m0 -5h0m0 14h0m0 8h0m0 -15h0m0 2h0m0 4h0m1 2h0m0 -4h0m0 -9h0m0 1h0m0 11h0m0 2h0m1 -1h0m0 -8h0m0 5h0m0 -6h0m0 3h0m0 -5h0m1 2h0m0 3h0m0 -6h0m0 11h0m0 -2h0m0 -10h0m1 9h0m0 9h0m0 -14h0m0 3h0m0 1h0m0 11h0m1 -7h0m0 8h0m0 -10h0m0 -2h0m0 -12h0m0 4h0m1 -3h0m0 7h0m0 7h0m0 9h0m0 -10h0m1 8h0m0 4h0m0 3h0m0 -2h0m1 0h0m0 -8h0m0 12h0m0 -5h0m0 8h0m0 -16h0m0 7h0m1 5h0m0 -8h0m0 6h0m0 -7h0m0 5h0m0 -2h0m1 -5h0m0 -6h0m0 -3h0m0 10h0m0 -3h0m1 1h0m0 2h0m0 -1h0m0 8h0m0 4h0m0 2h0m1 0h0m0 2h0m0 -3h0m0 -3h0m0 -12h0m0 -3h0m1 7h0m0 -2h0m0 13h0m0 -4h0m0 3h0m0 -2h0m1 2h0m0 -3h0m0 -6h0m0 -4h0m0 6h0m0 -11h0m1 15h0m0 -10h0m0 13h0m0 3h0m0 -5h0m0 -9h0m1 1h0m0 6h0m0 -8h0m0 3h0m0 -7h0m0 2h0m0 13h0m1 -24h0m0 6h0m0 12h0m0 1h0m0 2h0m0 -4h0m1 -11h0m0 4h0m0 8h0m0 -10h0m0 1h0m0 -5h0m0 9h0m1 -11h0m0 21h0m0 -4h0m0 5h0m0 -16h0m0 -1h0m0 20h0m1 2h0m0 -4h0m0 7h0m0 -10h0m0 -6h0m0 10h0m0 -3h0m1 0h0m0 2h0m0 -3h0m0 5h0m0 1h0m1 -4h0m0 -2h0m0 6h0m0 1h0m0 -8h0m0 5h0m1 -1h0m0 -3h0m0 -5h0m0 3h0m0 4h0m1 3h0m0 1h0m0 -17h0m0 1h0m0 -3h0m0 -9h0m0 13h0m1 1h0m0 2h0m0 -7h0m0 14h0m0 -6h0m0 7h0m1 -17h0m0 10h0m0 11h0m0 -3h0m0 -4h0m1 -9h0m0 -7h0m0 1h0m0 7h0m0 4h0m0 3h0m0 -2h0m1 -7h0m0 -1h0m0 -10h0m0 5h0m0 4h0m0 8h0m1 -1h0m0 -2h0m0 1h0m0 8h0m0 -4h0m0 8h0m1 -3h0m0 -5h0m0 -3h0m0 -4h0m0 14h0m0 -4h0m1 -12h0m0 -1h0m0 -7h0m0 2h0m0 4h0m0 5h0m1 11h0m0 -7h0m0 12h0m0 -2h0m0 -6h0m0 -1h0m0 -8h0m1 9h0m0 1h0m0 -9h0m0 4h0m0 2h0m0 7h0m1 -8h0m0 -2h0m0 3h0m0 -2h0m0 5h0m0 4h0m1 -2h0m0 -10h0m0 7h0m0 1h0m0 4h0m1 -6h0m0 -1h0m0 -6h0m0 -1h0m0 4h0m0 -8h0m0 18h0m1 -9h0m0 -3h0m0 -3h0m0 7h0m0 -5h0m0 6h0m1 -2h0m0 1h0m0 -8h0m0 3h0m0 3h0m1 0h0m0 5h0m0 -12h0m0 8h0m1 9h0m0 -1h0m0 2h0m0 -6h0m0 1h0m1 1h0m0 -13h0m0 5h0m0 -9h0m0 11h0m0 8h0m1 -3h0m0 -8h0m0 4h0m0 3h0m0 8h0m0 -10h0m1 -3h0m0 2h0m0 3h0m0 5h0m0 -7h0m0 4h0m0 -13h0m1 -9h0m0 1h0m0 -5h0m0 10h0m0 -7h0m0 11h0m1 6h0m0 -13h0m0 -3h0m0 13h0m0 15h0m0 -5h0m1 4h0m0 -4h0m0 -1h0m0 7h0m0 -5h0m0 -4h0m1 0h0m0 6h0m0 -3h0m0 -11h0m0 4h0m0 3h0m0 -6h0m1 13h0m0 1h0m0 -10h0m0 -11h0m0 19h0m0 -5h0m0 -4h0m1 -4h0m0 5h0m0 -8h0m0 2h0m0 3h0m0 5h0m1 0h0m0 2h0m0 4h0m0 -7h0m0 2h0m0 7h0m0 -5h0m1 -2h0m0 6h0m0 -3h0m0 -5h0m0 -10h0m0 -2h0m0 -1h0m1 -4h0m0 3h0m0 -4h0m0 7h0m0 -4h0m0 10h0m0 1h0m1 -3h0m0 2h0m0 -1h0m0 -7h0m0 4h0m1 3h0m0 7h0m0 -8h0m0 4h0m0 13h0m0 -1h0m0 5h0m1 -10h0m0 2h0m0 -6h0m0 9h0m0 -8h0m0 -9h0m0 1h0m1 -5h0m0 -5h0m0 2h0m0 6h0m0 3h0m0 -10h0m1 4h0m0 14h0m0 3h0m0 -10h0m0 6h0m0 -4h0m1 10h0m0 -10h0m0 -9h0m0 6h0m0 -1h0m0 -2h0m0 -2h0m1 -1h0m0 6h0m0 -5h0m0 7h0m0 10h0m0 -2h0m1 -14h0m0 -2h0m0 -7h0m0 3h0m0 2h0m0 7h0m1 5h0m0 4h0m0 -14h0m0 6h0m0 10h0m0 5h0m1 -10h0m0 -5h0m0 -10h0m0 4h0m0 8h0m0 4h0m1 -10h0m0 5h0m0 -3h0m0 4h0m0 -8h0m0 16h0m1 -7h0m0 -2h0m0 -3h0m0 -4h0m0 17h0m0 -1h0m1 -9h0m0 -7h0m0 12h0m0 -4h0m0 -6h0m0 8h0m1 8h0m0 8h0m0 -2h0m0 -12h0m0 8h0m1 -5h0m0 15h0m0 -12h0m0 7h0m0 -8h0m0 -1h0m1 4h0m0 -7h0m0 -10h0m0 1h0m0 -2h0m0 -2h0m1 3h0m0 -2h0m0 -1h0m0 9h0m0 -4h0m0 -7h0m1 20h0m0 -5h0m0 9h0m0 -6h0m0 8h0m0 -5h0m0 -11h0m1 -7h0m0 2h0m0 -8h0m0 2h0m1 4h0m0 1h0m0 -10h0m0 -2h0m0 -1h0m0 11h0m1 21h0m0 -11h0m0 4h0m0 -6h0m0 -4h0m0 11h0m1 -6h0m0 -11h0m0 1h0m0 -8h0m0 12h0m0 -2h0m1 1h0m0 -8h0m0 1h0m0 6h0m0 -1h0m0 6h0m1 -9h0m0 1h0m0 -7h0m0 18h0m0 10h0m0 -12h0m1 3h0m0 -1h0m0 5h0m0 -18h0m0 1h0m1 -6h0m0 2h0m0 9h0m0 -2h0m0 -2h0m0 -1h0m0 2h0m1 4h0m0 -13h0m0 6h0m0 11h0m0 -6h0m0 1h0m0 -2h0m1 -2h0m0 -1h0m0 -6h0m0 1h0m0 4h0m1 3h0m0 -4h0m0 -2h0m0 1h0m0 3h0m0 6h0m1 -6h0m0 -4h0m0 5h0m0 -11h0m0 3h0m0 6h0m1 -1h0m0 11h0m0 -6h0m0 2h0m0 -4h0m1 2h0m0 5h0m0 -4h0m0 -3h0m0 6h0m0 -2h0m1 8h0m0 -4h0m0 -1h0m0 -6h0m0 3h0m0 -8h0m0 -1h0m1 -3h0m0 7h0m0 -1h0m0 2h0m0 7h0m0 -2h0m0 6h0m1 2h0m0 -3h0m0 -3h0m0 11h0m0 -7h0m1 7h0m0 8h0m0 -10h0m0 -6h0m0 -5h0m0 -3h0m1 -1h0m0 -10h0m0 12h0m0 -5h0m0 2h0m0 4h0m0 4h0m1 -6h0m0 -4h0m0 8h0m0 2h0m0 -5h0m0 -2h0m1 3h0m0 -6h0m0 8h0m0 -13h0m0 15h0m0 1h0m1 -12h0m0 1h0m0 -5h0m0 -1h0m0 7h0m1 1h0m0 3h0m0 6h0m0 -3h0m0 -14h0m0 6h0m1 -4h0m0 10h0m0 1h0m0 -6h0m0 1h0m0 6h0m0 6h0m1 -3h0m0 -4h0m0 -3h0m0 -7h0m0 1h0m0 3h0m1 -1h0m0 10h0m0 15h0m0 -9h0m0 -18h0m1 10h0m0 -3h0m0 8h0m0 -3h0m0 4h0m0 -2h0m1 -4h0m0 -10h0m0 13h0m0 -1h0m0 -4h0m0 -3h0m0 2h0m1 -1h0m0 -3h0m0 10h0m0 7h0m0 -9h0m0 -11h0m1 7h0m0 -3h0m0 5h0m0 -7h0m0 1h0m1 1h0m0 3h0m0 2h0m0 5h0m0 -3h0m0 -11h0m1 7h0m0 -6h0m0 -4h0m0 7h0m0 -1h0m0 -1h0m1 16h0m0 1h0m0 1h0m0 -11h0m0 -4h0m0 1h0m1 -9h0m0 17h0m0 -3h0m0 4h0m0 11h0m0 -4h0m1 3h0m0 2h0m0 -6h0m0 -12h0m0 -2h0m0 11h0m1 6h0m0 -9h0m0 13h0m0 -7h0m0 -14h0m0 7h0m1 8h0m0 -14h0m0 -9h0m0 10h0m0 10h0m0 -4h0m1 -10h0m0 -3h0m0 -2h0m0 9h0m0 -12h0m0 10h0m1 -1h0m0 3h0m0 3h0m0 -10h0m0 9h0m0 -1h0m0 7h0m1 -7h0m0 -3h0m0 5h0m0 -11h0m0 4h0m0 4h0m1 -3h0m0 1h0m0 4h0m0 -8h0m0 5h0m0 -4h0m1 -9h0m0 9h0m0 14h0m0 -3h0m0 1h0m0 -11h0m1 18h0m0 -4h0m0 -5h0m0 -8h0m0 15h0m1 -6h0m0 9h0m0 -4h0m0 3h0m0 -2h0m1 -8h0m0 4h0m0 -13h0m0 -3h0m0 1h0m1 7h0m0 11h0m0 -3h0m0 4h0m0 5h0m1 -18h0m0 -9h0m0 1h0m0 18h0m0 -2h0m0 -1h0m0 8h0m1 -3h0m0 6h0m0 -2h0m0 6h0m0 -14h0m1 10h0m0 -3h0m0 -6h0m0 -6h0m0 -7h0m1 17h0m0 -2h0m0 -12h0m0 6h0m0 4h0m0 -1h0m0 -4h0m1 -9h0m0 2h0m0 2h0m0 -7h0m0 9h0m0 -3h0m1 1h0m0 2h0m0 -5h0m0 4h0m0 12h0m1 -12h0m0 -3h0m0 4h0m0 2h0m0 -1h0m1 7h0m0 -7h0m0 6h0m0 -5h0m0 8h0m0 -1h0m1 5h0m0 -6h0m0 10h0m0 -7h0m1 6h0m0 -5h0m0 -2h0m0 4h0m0 -5h0m1 -6h0m0 2h0m0 -6h0m0 8h0m0 7h0m0 1h0m1 -5h0m0 -1h0m0 3h0m0 -7h0m0 8h0m0 -7h0m1 -6h0m0 1h0m0 5h0m0 -2h0m0 -12h0m0 -4h0m1 11h0m0 -10h0m0 7h0m0 4h0m0 -2h0m0 -5h0m1 3h0m0 7h0m0 -6h0m0 5h0m0 11h0m0 5h0m1 -14h0m0 -8h0m0 -6h0m0 12h0m0 10h0m0 7h0m1 -10h0m0 5h0m0 5h0m0 1h0m0 -9h0m0 2h0m1 -8h0m0 1h0m0 9h0m0 -2h0m0 -14h0m0 -10h0m0 3h0m1 7h0m0 -3h0m0 -2h0m0 4h0m0 3h0m0 8h0m1 9h0m0 -13h0m0 11h0m0 -6h0m0 -11h0m0 16h0m0 -9h0m1 -9h0m0 -6h0m0 3h0m0 9h0m1 -9h0m0 3h0m0 -1h0m0 -1h0m0 5h0m0 -1h0m1 -1h0m0 -4h0m0 -1h0m0 -1h0m0 3h0m1 1h0m0 2h0m0 -6h0m0 3h0m0 4h0m0 9h0m1 2h0m0 3h0m0 5h0m0 -17h0m0 3h0m1 -4h0m0 -5h0m0 2h0m0 -3h0m0 11h0m0 5h0m1 -5h0m0 11h0m0 5h0m0 -9h0m0 -3h0m0 -3h0m1 -8h0m0 1h0m0 -4h0m0 1h0m0 6h0m1 3h0m0 -3h0m0 1h0m0 -5h0m1 9h0m0 11h0m0 -3h0m0 -12h0m0 14h0m0 -8h0m1 -8h0m0 -3h0m0 -1h0m0 -2h0m0 8h0m0 -15h0m1 7h0m0 4h0m0 -7h0m0 -3h0m0 2h0m0 5h0m1 -6h0m0 4h0m0 -2h0m0 1h0m0 4h0m0 -6h0m1 2h0m0 1h0m0 7h0m0 -3h0m1 2h0m0 2h0m0 -9h0m0 4h0m0 -2h0m0 1h0m1 -9h0m0 5h0m0 3h0m0 3h0m0 -5h0m0 -2h0m0 3h0m1 12h0m0 -4h0m0 -6h0m0 -7h0m0 2h0m0 -4h0m0 10h0m1 4h0m0 -10h0m0 -2h0m0 5h0m0 -1h0m0 5h0m1 -2h0m0 -3h0m0 8h0m0 -6h0m0 7h0m0 -10h0m1 2h0m0 -2h0m0 5h0m0 -2h0m0 5h0m0 -16h0m1 9h0m0 -5h0m0 -1h0m0 3h0m0 1h0m0 6h0m0 -14h0m1 7h0m0 3h0m0 -1h0m0 8h0m0 -6h0m0 -6h0m0 1h0m1 16h0m0 11h0m0 -5h0m0 -5h0m0 3h0m1 -10h0m0 -6h0m0 16h0m0 -13h0m0 6h0m0 -8h0m1 5h0m0 -4h0m0 5h0m0 12h0m0 -9h0m0 -1h0m0 -1h0m1 8h0m0 -14h0m0 12h0m0 3h0m0 7h0m0 -6h0m1 -3h0m0 -10h0m0 13h0m0 -4h0m1 2h0m0 8h0m0 5h0m0 -7h0m0 5h0m0 -2h0m1 -8h0m0 -8h0m0 -4h0m0 -4h0m0 6h0m0 -4h0m1 6h0m0 5h0m0 -8h0m0 14h0m0 8h0m0 -11h0m0 -7h0m1 12h0m0 -8h0m0 5h0m0 -3h0m0 7h0m1 -4h0m0 -18h0m0 2h0m0 4h0m0 2h0m0 -9h0m1 8h0m0 -4h0m0 6h0m0 -3h0m0 4h0m0 1h0m1 -11h0m0 8h0m0 1h0m0 -7h0m0 2h0m0 2h0m0 -9h0m1 -2h0m0 8h0m0 -1h0m0 5h0m0 3h0m0 6h0m1 6h0m0 -13h0m0 3h0m0 2h0m0 6h0m0 -3h0m1 10h0m0 1h0m0 -5h0m0 1h0m0 -4h0m0 6h0m1 -7h0m0 3h0m0 -7h0m0 3h0m0 -8h0m1 2h0m0 -11h0m0 6h0m0 2h0m0 4h0m0 -18h0m1 5h0m0 -5h0m0 1h0m0 8h0m0 -2h0m0 1h0m1 -3h0m0 5h0m0 -3h0m0 -7h0m0 4h0m1 0h0m0 6h0m0 -10h0m0 13h0m0 -5h0m1 -3h0m0 -2h0m0 7h0m0 -3h0m0 -6h0m1 10h0m0 10h0m0 -12h0m0 -1h0m0 2h0m1 10h0m0 2h0m0 3h0m0 -4h0m0 -16h0m0 13h0m1 6h0m0 3h0m0 -6h0m0 -5h0m0 2h0m0 2h0m1 -6h0m0 2h0m0 -4h0m0 5h0m0 14h0m0 -8h0m0 -3h0m1 -6h0m0 -7h0m0 -1h0m0 6h0m0 12h0m0 -5h0m1 -8h0m0 9h0m0 3h0m0 -17h0m0 -1h0m0 4h0m0 6h0m1 -1h0m0 2h0m0 9h0m0 -7h0m0 3h0m0 -12h0m1 1h0m0 -3h0m0 -4h0m0 6h0m0 -3h0m1 1h0m0 13h0m0 12h0m0 -10h0m0 5h0m0 -9h0m0 5h0m1 -2h0m0 9h0m0 -2h0m0 -16h0m0 7h0m0 -6h0m1 5h0m0 -5h0m0 -4h0m0 -1h0m0 6h0m0 -3h0m1 -4h0m0 9h0m0 7h0m0 -2h0m0 -3h0m0 2h0m0 4h0m1 -14h0m0 -2h0m0 14h0m0 -2h0m0 1h0m0 -3h0m1 1h0m0 -8h0m0 -4h0m0 2h0m0 -4h0m0 -4h0m0 16h0m1 -10h0m0 -3h0m0 10h0m0 -5h0m0 -3h0m0 10h0m1 -2h0m0 7h0m0 -6h0m0 3h0m0 1h0m0 -9h0m1 5h0m0 -14h0m0 -2h0m0 13h0m0 -5h0m0 1h0m0 8h0m1 7h0m0 -1h0m0 11h0m0 -14h0m0 10h0m0 -4h0m1 5h0m0 -6h0m0 2h0m0 -7h0m0 -4h0m0 -12h0m1 9h0m0 5h0m0 -2h0m0 12h0m0 -7h0m0 5h0m1 2h0m0 -5h0m0 -1h0m0 -2h0m0 -1h0m1 -1h0m0 4h0m0 9h0m0 -3h0m0 2h0m0 -3h0m1 4h0m0 -8h0m0 3h0m1 -1h0m0 -3h0m0 -4h0m0 3h0m0 -5h0m1 7h0m0 -8h0m0 3h0m0 1h0m0 -2h0m1 -11h0m0 7h0m0 14h0m0 -3h0m0 7h0m0 2h0m0 -3h0m1 -5h0m0 -10h0m0 2h0m0 9h0m0 -2h0m1 4h0m0 -4h0m0 3h0m0 -10h0m0 16h0m0 -8h0m0 7h0m1 -4h0m0 -1h0m0 3h0m0 -1h0m0 -3h0m1 3h0m0 -3h0m0 -2h0m0 -14h0m0 6h0m0 -4h0m0 -4h0m1 8h0m0 -10h0m0 6h0m0 14h0m0 -4h0m0 3h0m1 2h0m0 -14h0m0 15h0m0 2h0m0 2h0m0 -3h0m0 -3h0m1 -2h0m0 -5h0m0 1h0m0 3h0m0 -1h0m0 -4h0m0 13h0m1 0h0m0 -7h0m0 -5h0m0 2h0m0 -5h0m1 6h0m0 -8h0m0 -7h0m0 4h0m0 9h0m0 -10h0m1 -4h0m0 8h0m0 2h0m0 2h0m0 2h0m0 -5h0m1 -2h0m0 -3h0m0 9h0m0 -7h0m0 5h0m0 1h0m0 -3h0m1 1h0m0 11h0m0 -8h0m0 1h0m0 -8h0m1 3h0m0 7h0m0 -6h0m0 2h0m0 -4h0m0 -2h0m1 7h0m0 -1h0m0 2h0m0 14h0m0 -7h0m1 -21h0m0 7h0m0 -4h0m0 5h0m1 4h0m0 -6h0m0 -3h0m0 5h0m0 -10h0m0 4h0m1 -2h0m0 5h0m0 8h0m0 9h0m0 -12h0m1 -11h0m0 4h0m0 -8h0m0 9h0m0 -3h0m0 5h0m1 1h0m0 15h0m0 -2h0m0 -3h0m0 -1h0m0 2h0m1 4h0m0 -7h0m0 4h0m0 -1h0m0 2h0m0 5h0m1 -18h0m0 1h0m0 6h0m0 8h0m0 -2h0m0 -7h0m1 -2h0m0 -1h0m0 -2h0m0 -7h0m0 14h0m0 6h0m1 -7h0m0 6h0m0 -7h0m0 -6h0m0 4h0m0 -7h0m1 15h0m0 -6h0m0 4h0m0 -9h0m0 -5h0m0 4h0m1 2h0m0 -6h0m0 9h0m0 4h0m0 -14h0m1 9h0m0 -7h0m0 -11h0m0 -1h0m0 3h0m0 -4h0m1 3h0m0 15h0m0 2h0m0 -14h0m0 -7h0m1 6h0m0 4h0m0 4h0m0 1h0m0 11h0m0 -5h0m1 5h0m0 2h0m0 2h0m0 4h0m0 -11h0m1 -4h0m0 -4h0m0 6h0m0 7h0m0 -12h0m0 14h0m0 -1h0m1 -2h0m0 4h0m0 -2h0m0 -4h0m0 3h0m0 -7h0m0 -4h0m1 -3h0m0 7h0m0 -14h0m0 -1h0m0 5h0m0 5h0m1 1h0m0 -1h0m0 9h0m0 -4h0m0 9h0m0 -6h0m1 -3h0m0 -1h0m0 -3h0m0 9h0m0 -8h0m0 -5h0m0 16h0m1 0h0m0 1h0m0 -3h0m0 -6h0m0 3h0m0 -2h0m0 10h0m1 -5h0m0 -15h0m0 4h0m0 1h0m0 5h0m0 -4h0m1 1h0m0 5h0m0 3h0m0 -10h0m0 8h0m0 -2h0m1 8h0m0 -10h0m0 3h0m0 3h0m0 -17h0m0 2h0m1 5h0m0 -8h0m0 14h0m0 -11h0m0 1h0m0 3h0m0 5h0m1 2h0m0 11h0m0 -4h0m0 -9h0m0 5h0m0 -2h0m1 -5h0m0 1h0m0 8h0m0 -13h0m0 1h0m0 1h0m0 6h0m1 -2h0m0 -10h0m0 4h0m0 -1h0m0 -2h0m0 6h0m0 -8h0m1 13h0m0 -2h0m0 -4h0m0 9h0m0 -14h0m0 3h0m1 7h0m0 -4h0m0 7h0m0 -1h0m0 2h0m1 -6h0m0 8h0m0 3h0m0 -1h0m0 -7h0m0 3h0m0 8h0m1 -7h0m0 -2h0m0 5h0m0 5h0m0 -11h0m0 12h0m1 -9h0m0 -3h0m0 4h0m0 -2h0m0 -4h0m0 3h0m1 2h0m0 8h0m0 1h0m0 -6h0m0 -5h0m0 14h0m1 -7h0m0 -3h0m0 6h0m0 -4h0m0 -5h0m0 -7h0m1 -2h0m0 5h0m0 -3h0m0 -5h0m0 11h0m1 -6h0m0 -2h0m0 -2h0m0 13h0m0 5h0m1 2h0m0 -8h0m0 9h0m0 -7h0m0 2h0m0 -1h0m1 -7h0m0 5h0m0 -4h0m0 7h0m0 -4h0m1 -3h0m0 -3h0m0 -5h0m0 6h0m0 3h0m0 6h0m1 -5h0m0 7h0m0 1h0m0 2h0m0 -6h0m0 10h0m1 -9h0m0 1h0m0 -3h0m0 -8h0m0 -4h0m1 4h0m0 -15h0m0 3h0m0 6h0m0 -2h0m0 -3h0m1 -3h0m0 4h0m0 1h0m0 9h0m0 -2h0m0 -10h0m1 13h0m0 -2h0m0 9h0m0 -2h0m1 1h0m0 -2h0m0 -4h0m0 3h0m0 -1h0m1 4h0m0 -4h0m0 -12h0m0 4h0m0 1h0m0 -9h0m0 -3h0m1 13h0m0 -3h0m0 11h0m0 -14h0m0 -3h0m0 15h0m1 6h0m0 -12h0m0 -5h0m0 4h0m0 7h0m0 2h0m1 -11h0m0 2h0m0 3h0m0 -1h0m1 7h0m0 -7h0m0 -1h0m0 4h0m0 -7h0m0 5h0m1 -5h0m0 4h0m0 12h0m0 -5h0m1 4h0m0 -6h0m0 -4h0m0 -5h0m0 18h0m0 -10h0m1 8h0m0 -5h0m0 4h0m0 -2h0m1 -1h0m0 -1h0m0 -2h0m0 -8h0m0 6h0m0 6h0m1 -8h0m0 -6h0m0 -7h0m0 8h0m0 -3h0m0 9h0m0 8h0m1 5h0m0 -4h0m0 -8h0m0 -2h0m0 4h0m0 11h0m0 -9h0m1 -5h0m0 4h0m0 -6h0m0 4h0m0 -8h0m0 5h0m1 0h0m0 -2h0m0 11h0m0 3h0m0 -6h0m0 -7h0m0 3h0m1 -5h0m0 3h0m0 -10h0m0 9h0m0 2h0m0 -5h0m1 3h0m0 10h0m0 -18h0m0 7h0m0 12h0m1 -20h0m0 2h0m0 14h0m0 -3h0m0 2h0m1 5h0m0 1h0m0 8h0m0 -5h0m0 -7h0m0 5h0m0 -10h0m1 3h0m0 -7h0m0 -4h0m0 -8h0m0 10h0m0 4h0m1 -2h0m0 -2h0m0 4h0m0 5h0m0 1h0m0 -2h0m1 7h0m0 3h0m0 3h0m0 -14h0m0 -3h0m0 -5h0m0 10h0m1 -8h0m0 16h0m0 -2h0m0 1h0m0 -2h0m0 -8h0m0 -1h0m1 5h0m0 1h0m0 -8h0m0 10h0m0 4h0m0 -16h0m1 24h0m0 -6h0m0 -9h0m0 -2h0m0 -1h0m0 -7h0m1 3h0m0 9h0m0 1h0m0 4h0m0 -2h0m0 -5h0m0 -5h0m1 -2h0m0 -10h0m0 8h0m0 13h0m0 -6h0m0 -3h0m1 -3h0m0 -3h0m0 17h0m0 3h0m0 -6h0m0 -2h0m0 4h0m1 3h0m0 -2h0m0 -2h0m0 -11h0m0 16h0m0 -6h0m1 -10h0m0 11h0m0 1h0m0 5h0m0 -19h0m0 12h0m0 -9h0m1 14h0m0 -2h0m0 -7h0m0 6h0m0 -4h0m0 -6h0m0 -12h0m1 8h0m0 9h0m0 -13h0m0 -6h0m0 2h0m0 9h0m1 -1h0m0 2h0m0 5h0m0 -14h0m0 17h0m0 -4h0m1 2h0m0 -1h0m0 -8h0m0 5h0m0 -2h0m0 -9h0m0 -3h0m1 6h0m0 7h0m0 4h0m0 1h0m0 5h0m0 6h0m1 -9h0m0 5h0m0 2h0m0 3h0m0 -8h0m1 -4h0m0 -9h0m0 3h0m0 9h0m0 6h0m1 -5h0m0 10h0m0 -9h0m0 -9h0m0 2h0m0 -3h0m0 -2h0m1 -2h0m0 -4h0m0 -2h0m0 20h0m0 2h0m0 -14h0m1 -6h0m0 -3h0m0 -5h0m0 4h0m0 -8h0m0 15h0m1 -2h0m0 1h0m0 4h0m0 -9h0m0 16h0m0 -4h0m1 4h0m0 -11h0m0 10h0m0 -4h0m0 3h0m0 -14h0m0 3h0m1 12h0m0 1h0m0 -2h0m0 8h0m0 -13h0m0 10h0m1 -1h0m0 1h0m0 1h0m0 1h0m0 2h0m1 -1h0m0 1h0m0 2h0m0 -5h0m0 -4h0m1 1h0m0 -2h0m0 -3h0m0 1h0m0 -8h0m0 -2h0m1 4h0m0 8h0m0 -2h0m0 -4h0m0 -4h0m0 -4h0m0 2h0m1 2h0m0 -4h0m0 6h0m0 -4h0m0 7h0m0 -8h0m0 19h0m1 1h0m0 -2h0m0 5h0m0 -1h0m0 -6h0m0 -2h0m1 -5h0m0 8h0m0 12h0m0 -23h0m0 -2h0m0 -6h0m1 2h0m0 6h0m0 11h0m0 3h0m0 -11h0m0 -4h0m0 8h0m1 -15h0m0 5h0m0 -1h0m0 6h0m0 15h0m0 -4h0m0 -3h0m1 0h0m0 -2h0m0 -4h0m0 12h0m0 5h0m0 -7h0m1 1h0m0 -4h0m0 5h0m0 6h0m0 -5h0m1 0h0m0 -6h0m0 -2h0m0 6h0m0 8h0m0 -4h0m0 -11h0m1 -1h0m0 -3h0m0 5h0m0 6h0m0 -1h0m0 -8h0m1 2h0m0 -10h0m0 2h0m0 -11h0m0 8h0m0 2h0m1 0h0m0 20h0m0 -12h0m0 -9h0m0 17h0m0 -3h0m1 4h0m0 -1h0m0 -4h0m0 7h0m0 -15h0m1 7h0m0 7h0m0 1h0m0 -5h0m0 -9h0m1 -2h0m0 10h0m0 5h0m0 -2h0m1 4h0m0 -5h0m0 -1h0m0 -3h0m0 -2h0m0 -5h0m0 -10h0m1 4h0m0 -11h0m0 3h0m0 10h0m0 -4h0m0 6h0m1 -2h0m0 3h0m0 -14h0m0 8h0m0 -5h0m0 4h0m0 -2h0m1 9h0m0 5h0m0 2h0m0 6h0m0 -5h0m0 -4h0m1 8h0m0 -14h0m0 -1h0m0 -6h0m0 10h0m0 1h0m1 -8h0m0 -1h0m0 -5h0m0 1h0m0 3h0m0 -2h0m1 5h0m0 1h0m0 -2h0m0 8h0m0 6h0m0 2h0m1 -9h0m0 -14h0m0 13h0m0 -2h0m0 -16h0m1 10h0m0 1h0m0 -3h0m0 16h0m0 -5h0m0 -4h0m1 10h0m0 3h0m0 -7h0m0 -6h0m0 8h0m0 -7h0m1 6h0m0 10h0m0 2h0m0 1h0m0 -12h0m1 -2h0m0 3h0m0 4h0m0 6h0m0 -7h0m1 2h0m0 -5h0m0 1h0m0 1h0m0 -5h0m0 -4h0m1 1h0m0 -9h0m0 6h0m0 -7h0m0 2h0m0 11h0m1 3h0m0 2h0m0 -4h0m0 11h0m0 2h0m1 -7h0m0 12h0m0 -9h0m0 -8h0m0 4h0m0 2h0m0 -10h0m1 7h0m0 -4h0m0 -2h0m0 10h0m0 -11h0m0 -5h0m1 7h0m0 10h0m0 -4h0m0 2h0m0 12h0m0 -5h0m1 -22h0m0 1h0m0 11h0m0 -14h0m0 15h0m0 -4h0m1 2h0m0 -10h0m0 3h0m0 -11h0m0 2h0m0 25h0m1 -25h0m0 -1h0m0 5h0m0 -3h0m0 11h0m0 4h0m0 -8h0m1 -8h0m0 -2h0m0 3h0m0 1h0m0 -3h0m0 15h0m1 0h0m0 3h0m0 -9h0m0 -11h0m0 1h0m0 -2h0m1 3h0m0 -1h0m0 7h0m0 1h0m0 -4h0m1 2h0m0 18h0m0 2h0m0 -15h0m0 2h0m0 -10h0m0 2h0m1 -2h0m0 -2h0m0 -3h0m0 8h0m0 11h0m1 -4h0m0 -2h0m0 -3h0m0 -4h0m0 13h0m0 -1h0m1 -9h0m0 13h0m0 -5h0m0 -2h0m0 -7h0m1 15h0m0 -6h0m0 -7h0m0 1h0m0 1h0m0 6h0m0 6h0m1 -5h0m0 4h0m0 -12h0m0 3h0m0 -5h0m0 -4h0m0 13h0m1 -9h0m0 -2h0m0 13h0m0 6h0m0 -9h0m0 6h0m1 5h0m0 -8h0m0 -7h0m0 4h0m0 -7h0m0 5h0m0 -10h0m1 5h0m0 -5h0m0 -1h0m0 4h0m0 7h0m1 11h0m0 -6h0m0 2h0m0 -8h0m0 -11h0m1 1h0m0 6h0m0 -7h0m0 4h0m0 -9h0m0 11h0m1 -2h0m0 -3h0m0 6h0m0 -2h0m0 7h0m0 7h0m1 -1h0m0 4h0m0 -1h0m0 -1h0m0 6h0m0 -15h0m1 -3h0m0 -5h0m0 -10h0m0 -1h0m0 4h0m0 13h0m1 -2h0m0 -3h0m0 -4h0m0 2h0m0 -5h0m1 7h0m0 -7h0m0 3h0m0 -2h0m0 17h0m0 -3h0m0 13h0m1 -6h0m0 -1h0m0 -6h0m0 8h0m0 -3h0m0 -4h0m1 13h0m0 -14h0m0 4h0m0 4h0m0 -3h0m0 5h0m1 3h0m0 5h0m0 -9h0m0 -8h0m1 13h0m0 -8h0m0 -3h0m0 -10h0m0 -5h0m0 16h0m0 9h0m1 -3h0m0 -5h0m0 -6h0m0 14h0m0 -11h0m0 4h0m0 -6h0m1 1h0m0 -5h0m0 4h0m0 -5h0m1 1h0m0 1h0m0 4h0m0 5h0m0 -16h0m1 4h0m0 -1h0m0 -2h0m0 1h0m0 -3h0m0 6h0m1 4h0m0 -9h0m0 -2h0m0 -2h0m0 11h0m0 -4h0m1 9h0m0 -7h0m0 1h0m0 7h0m0 -21h0m0 -1h0m1 18h0m0 7h0m0 -4h0m0 -7h0m0 10h0m1 1h0m0 -7h0m0 -5h0m0 7h0m0 -9h0m1 -2h0m0 10h0m0 -3h0m0 12h0m0 -8h0m0 -5h0m0 8h0m1 0h0m0 1h0m0 -7h0m0 13h0m0 -9h0m0 -2h0m0 -3h0m1 3h0m0 -6h0m0 -3h0m0 4h0m0 -7h0m1 -6h0m0 13h0m0 5h0m0 8h0m0 -1h0m0 -3h0m1 -9h0m0 -3h0m0 4h0m0 -11h0m0 15h0m0 -2h0m0 9h0m1 0h0m0 4h0m0 -12h0m0 5h0m0 -11h0m0 -8h0m0 4h0m1 1h0m0 10h0m0 1h0m0 7h0m0 -11h0m0 15h0m1 0h0m0 -6h0m0 -7h0m0 -1h0m0 -16h0m0 9h0m0 -1h0m1 0h0m0 4h0m0 -6h0m0 13h0m0 -16h0m0 -1h0m0 13h0m1 3h0m0 5h0m0 -10h0m0 4h0m0 5h0m0 -1h0m1 8h0m0 -3h0m0 -1h0m0 -13h0m0 9h0m1 1h0m0 -2h0m0 6h0m0 2h0m0 4h0m0 -9h0m0 13h0m1 -10h0m0 4h0m0 -9h0m0 10h0m0 -17h0m1 10h0m0 6h0m0 -8h0m0 -3h0m0 2h0m1 -4h0m0 -3h0m0 -4h0m0 -3h0m0 6h0m0 2h0m0 5h0m1 -8h0m0 5h0m0 7h0m0 1h0m0 13h0m0 -11h0m0 6h0m1 -3h0m0 1h0m0 -2h0m0 -2h0m0 -8h0m0 9h0m1 -8h0m0 9h0m0 -10h0m0 4h0m0 4h0m1 0h0m0 5h0m0 1h0m0 -8h0m0 5h0m0 -12h0m0 1h0m1 1h0m0 1h0m0 12h0m0 -18h0m0 13h0m0 -14h0m1 -14h0m0 6h0m0 4h0m0 2h0m0 -1h0m0 -4h0m1 -5h0m0 5h0m0 -2h0m0 5h0m1 4h0m0 12h0m0 -5h0m0 4h0m0 -16h0m0 11h0m0 -15h0m1 -3h0m0 1h0m0 12h0m0 -5h0m0 -1h0m0 14h0m0 -17h0m1 13h0m0 -8h0m0 -1h0m0 -4h0m0 -3h0m0 4h0m1 -4h0m0 4h0m0 -1h0m0 2h0m0 -6h0m1 0h0m0 5h0m0 4h0m0 7h0m0 -5h0m0 -5h0m1 18h0m0 -6h0m0 2h0m0 -1h0m0 6h0m1 -10h0m0 -9h0m0 -2h0m0 3h0m0 1h0m0 -3h0m1 0h0m0 -4h0m0 6h0m0 3h0m0 8h0m0 -2h0m1 -15h0m0 8h0m0 -4h0m0 8h0m0 1h0m0 6h0m1 -3h0m0 -1h0m0 11h0m0 -13h0m0 5h0m1 -9h0m0 6h0m0 -4h0m0 -4h0m0 7h0m0 -2h0m1 -1h0m0 7h0m0 1h0m0 2h0m0 8h0m0 -2h0m1 -1h0m0 1h0m0 -5h0m0 1h0m0 -4h0m1 0h0m0 -4h0m0 2h0m0 -1h0m0 -7h0m0 11h0m1 -18h0m0 7h0m0 1h0m0 8h0m0 4h0m0 -7h0m1 -7h0m0 13h0m0 -10h0m0 1h0m0 2h0m0 -4h0m1 -1h0m0 5h0m0 3h0m0 5h0m0 -7h0m1 -6h0m0 2h0m0 4h0m0 -2h0m0 -6h0m1 -4h0m0 17h0m0 -5h0m0 2h0m0 -9h0m1 13h0m0 11h0m0 -12h0m0 6h0m0 -14h0m1 -2h0m0 -11h0m0 8h0m0 4h0m0 -2h0m0 -1h0m1 8h0m0 -8h0m0 3h0m0 1h0m0 12h0m0 -9h0m1 5h0m0 -3h0m0 2h0m0 -8h0m1 0h0m0 -6h0m0 11h0m0 -7h0m0 -7h0m0 6h0m1 -6h0m0 6h0m0 -3h0m0 2h0m0 -1h0m1 1h0m0 1h0m0 6h0m0 -1h0m0 9h0m1 -6h0m0 -3h0m0 -4h0m0 -3h0m0 6h0m0 8h0m0 -5h0m1 4h0m0 -5h0m0 12h0m0 -4h0m0 -4h0m0 10h0m1 1h0m0 -7h0m0 2h0m0 -9h0m0 6h0m0 -7h0m1 7h0m0 -3h0m0 6h0m0 -2h0m0 5h0m0 -2h0m1 -5h0m0 6h0m0 -11h0m0 13h0m0 -15h0m0 -6h0m0 9h0m1 -5h0m0 2h0m0 6h0m0 9h0m0 -24h0m1 -2h0m0 1h0m0 2h0m0 4h0m0 4h0m1 -8h0m0 7h0m0 -3h0m0 22h0m0 -12h0m0 -1h0m0 -4h0m1 -4h0m0 -7h0m0 -5h0m0 1h0m0 17h0m0 3h0m0 13h0m1 -4h0m0 -9h0m0 11h0m0 -3h0m0 -6h0m1 -2h0m0 4h0m0 -2h0m0 1h0m0 -8h0m1 10h0m0 -11h0m0 1h0m0 -6h0m0 10h0m0 3h0m1 -8h0m0 -12h0m0 5h0m0 3h0m0 -9h0m0 14h0m1 -2h0m0 -4h0m0 12h0m0 -5h0m0 -6h0m1 2h0m0 -4h0m0 -1h0m0 12h0m0 7h0m0 2h0m0 6h0m1 -7h0m0 -5h0m0 -1h0m0 -5h0m0 8h0m0 4h0m1 -11h0m0 7h0m0 -2h0m0 -6h0m0 -10h0m0 4h0m1 9h0m0 9h0m0 -6h0m0 7h0m0 -6h0m0 -3h0m1 3h0m0 -5h0m0 1h0m0 3h0m0 -2h0m0 -10h0m0 -5h0m1 11h0m0 8h0m0 1h0m0 -2h0m0 6h0m0 3h0m1 -4h0m0 -2h0m0 -6h0m0 3h0m0 2h0m1 5h0m0 3h0m0 -6h0m0 -8h0m0 4h0m1 8h0m0 -9h0m0 -10h0m0 -12h0m0 6h0m0 -4h0m0 12h0m1 -9h0m0 -2h0m0 -6h0m0 12h0m0 9h0m0 7h0m1 1h0m0 -2h0m0 -8h0m0 12h0m0 -8h0m1 -3h0m0 4h0m0 -14h0m0 6h0m0 -1h0m0 -6h0m0 -2h0m1 0h0m0 1h0m0 2h0m0 1h0m0 3h0m0 -8h0m1 8h0m0 -6h0m0 3h0m0 2h0m0 -1h0m1 5h0m0 -10h0m0 6h0m0 -5h0m0 2h0m1 -5h0m0 -3h0m0 9h0m0 -7h0m0 20h0m1 7h0m0 -13h0m0 9h0m0 -2h0m0 -5h0m0 -4h0m1 4h0m0 -3h0m0 4h0m0 4h0m1 6h0m0 -6h0m0 1h0m0 1h0m1 -3h0m0 -3h0m0 -4h0m0 -8h0m0 -2h0m0 4h0m0 -1h0m1 11h0m0 -2h0m0 8h0m0 -4h0m0 -8h0m0 11h0m1 4h0m0 -2h0m0 -2h0m0 -4h0m1 1h0m0 1h0m0 -5h0m0 3h0m0 -2h0m0 8h0m1 -6h0m0 3h0m0 -4h0m0 -6h0m0 2h0m0 2h0m1 -14h0m0 5h0m0 11h0m0 -6h0m0 -1h0m0 8h0m0 -3h0m1 4h0m0 3h0m0 7h0m0 -18h0m0 -1h0m0 4h0m1 5h0m0 -6h0m0 5h0m0 -1h0m0 8h0m0 -1h0m1 -5h0m0 -1h0m0 -8h0m0 -4h0m0 -4h0m0 3h0m1 6h0m0 4h0m0 -5h0m0 10h0m0 -7h0m0 4h0m1 -2h0m0 -10h0m0 3h0m0 2h0m0 2h0m0 17h0m1 -1h0m0 -3h0m0 -7h0m0 -6h0m0 11h0m1 -5h0m0 5h0m0 -2h0m0 -9h0m0 5h0m0 2h0m1 6h0m0 -5h0m0 -11h0m0 -3h0m0 8h0m0 -11h0m1 7h0m0 -1h0m0 -1h0m0 4h0m0 1h0m0 2h0m1 5h0m0 -11h0m0 -8h0m0 1h0m0 5h0m1 3h0m0 -4h0m0 2h0m0 1h0m0 4h0m0 -6h0m0 -7h0m1 3h0m0 12h0m0 -9h0m0 6h0m0 1h0m0 -3h0m1 0h0m0 -3h0m0 7h0m0 -3h0m0 -5h0m1 19h0m0 -5h0m0 3h0m0 -5h0m0 -7h0m1 0h0m0 -1h0m0 -7h0m0 -3h0m0 15h0m0 -8h0m1 2h0m0 7h0m0 4h0m0 -5h0m1 11h0m0 -5h0m0 -8h0m0 2h0m0 -4h0m1 1h0m0 -9h0m0 7h0m0 -18h0m1 10h0m0 9h0m0 11h0m0 -10h0m0 -6h0m1 -3h0m0 -3h0m0 1h0m0 6h0m0 -5h0m0 -6h0m0 3h0m1 3h0m0 -7h0m0 9h0m0 -1h0m0 21h0m1 -8h0m0 8h0m0 -3h0m0 1h0m0 -2h0m1 -1h0m0 -12h0m0 -8h0m0 -2h0m0 7h0m0 -8h0m0 9h0m1 2h0m0 -6h0m0 10h0m0 5h0m1 -1h0m0 -5h0m0 2h0m0 8h0m0 -6h0m0 7h0m1 0h0m0 5h0m0 -7h0m0 4h0m0 4h0m1 -4h0m0 -12h0m0 -1h0m0 -2h0m0 -8h0m0 17h0m0 -20h0m1 10h0m0 1h0m0 -2h0m0 -1h0m0 -2h0m0 1h0m0 8h0m1 7h0m0 -9h0m0 -1h0m0 2h0m0 -3h0m0 5h0m1 18h0m0 -13h0m0 -7h0m0 -1h0m0 2h0m0 -7h0m1 8h0m0 -1h0m0 -14h0m0 10h0m0 2h0m0 9h0m1 4h0m0 -13h0m0 -3h0m0 -1h0m0 -2h0m0 4h0m0 -9h0m1 7h0m0 -5h0m0 4h0m0 -1h0m1 -1h0m0 5h0m0 4h0m0 4h0m0 2h0m0 -7h0m1 3h0m0 -1h0m0 10h0m0 -8h0m0 9h0m0 11h0m1 -1h0m0 -6h0m0 2h0m0 -4h0m0 -5h0m0 -8h0m0 12h0m1 8h0m0 3h0m0 -5h0m0 1h0m0 -12h0m1 3h0m0 -5h0m0 3h0m0 -6h0m0 12h0m0 -5h0m0 -8h0m1 0h0m0 -11h0m0 9h0m0 -1h0m0 -1h0m0 -4h0m1 12h0m0 -2h0m0 -8h0m0 12h0m0 -5h0m0 -17h0m1 27h0m0 -4h0m0 -3h0m0 -1h0m0 -9h0m0 -3h0m1 1h0m0 9h0m0 -8h0m0 6h0m0 -9h0m0 -1h0m1 1h0m0 1h0m0 6h0m0 -8h0m0 5h0m1 0h0m0 -10h0m0 3h0m0 1h0m0 8h0m0 -1h0m0 8h0m1 1h0m0 -5h0m0 4h0m0 -6h0m0 -6h0m0 4h0m1 1h0m0 -4h0m0 -2h0m0 -1h0m0 8h0m1 -8h0m0 1h0m0 -9h0m0 2h0m0 5h0m1 -1h0m0 1h0m0 3h0m0 2h0m0 8h0m0 10h0m1 -12h0m0 11h0m0 -19h0m0 -3h0m0 -8h0m0 3h0m1 -3h0m0 6h0m0 16h0m0 1h0m0 6h0m0 2h0m1 -2h0m0 -2h0m0 -5h0m0 -3h0m0 4h0m0 -5h0m0 -6h0m1 2h0m0 3h0m0 -2h0m0 1h0m0 -5h0m0 -3h0m1 16h0m0 -4h0m0 -1h0m0 -16h0m0 6h0m0 4h0m1 -4h0m0 13h0m0 3h0m0 -14h0m0 -6h0m0 26h0m0 -7h0m1 6h0m0 -12h0m0 -5h0m0 -6h0m0 4h0m0 -1h0m0 -2h0m1 3h0m0 -2h0m0 1h0m0 3h0m0 2h0m0 -3h0m1 6h0m0 -11h0m0 8h0m0 7h0m0 3h0m1 5h0m0 -11h0m0 2h0m0 2h0m0 -3h0m0 2h0m0 -9h0m1 -5h0m0 7h0m0 -3h0m0 -3h0m0 8h0m0 15h0m0 2h0m1 -13h0m0 -12h0m0 -9h0m0 4h0m0 7h0m0 -6h0m0 5h0m1 6h0m0 -6h0m0 -1h0m0 18h0m1 3h0m0 7h0m0 -10h0m0 8h0m0 -9h0m0 -9h0m0 7h0m1 8h0m0 -9h0m0 -8h0m0 3h0m0 3h0m1 3h0m0 8h0m0 -16h0m0 12h0m1 2h0m0 -2h0m0 -9h0m0 4h0m1 -8h0m0 5h0m0 7h0m0 8h0m0 -2h0m1 -4h0m0 -2h0m0 -4h0m0 2h0m0 8h0m0 -9h0m1 -7h0m0 12h0m0 -4h0m0 -12h0m0 5h0m0 -2h0m1 -7h0m0 13h0m0 -9h0m0 1h0m1 -1h0m0 -7h0m0 20h0m0 -8h0m0 3h0m0 -4h0m0 8h0m1 1h0m0 -9h0m0 5h0m0 -7h0m0 3h0m1 -2h0m0 -3h0m0 7h0m0 4h0m0 -7h0m0 -8h0m0 -1h0m1 1h0m0 5h0m0 11h0m0 7h0m0 -9h0m1 4h0m0 -7h0m0 -3h0m0 -3h0m0 -2h0m0 10h0m1 -5h0m0 -7h0m0 2h0m0 10h0m0 -1h0m0 3h0m1 -10h0m0 -7h0m0 4h0m0 2h0m0 -1h0m0 3h0m0 2h0m1 6h0m0 -8h0m0 5h0m0 14h0m0 -10h0m0 8h0m1 3h0m0 -2h0m0 -7h0m0 -8h0m0 -2h0m0 4h0m0 -1h0m1 2h0m0 7h0m0 -4h0m0 7h0m0 -8h0m0 -4h0m0 -3h0m1 -6h0m0 13h0m0 -5h0m0 8h0m0 -1h0m0 2h0m1 -19h0m0 12h0m0 1h0m0 -10h0m0 1h0m0 10h0m1 -2h0m0 5h0m0 -3h0m0 -1h0m0 6h0m1 3h0m0 -16h0m0 6h0m0 -10h0m0 6h0m0 3h0m0 -2h0m1 10h0m0 -9h0m0 7h0m0 -6h0m0 10h0m0 -9h0m1 3h0m0 3h0m0 -2h0m0 -15h0m0 7h0m0 4h0m1 -8h0m0 3h0m0 6h0m0 8h0m0 -6h0m0 16h0m0 -9h0m1 0h0m0 -4h0m0 -1h0m0 -3h0m0 12h0m1 -4h0m0 2h0m0 -1h0m0 5h0m1 -8h0m0 -5h0m0 6h0m0 4h0m0 -8h0m0 -3h0m0 -6h0m1 5h0m0 -13h0m0 9h0m0 -10h0m0 8h0m0 9h0m0 3h0m1 0h0m0 3h0m0 -9h0m0 -1h0m0 -5h0m1 -1h0m0 5h0m0 -1h0m0 -2h0m0 -4h0m1 0h0m0 11h0m0 4h0m0 7h0m0 -4h0m0 -9h0m1 0h0m0 -10h0m0 -2h0m0 7h0m0 -3h0m0 -5h0m1 2h0m0 6h0m0 1h0m0 7h0m0 3h0m0 3h0m0 -1h0m1 -3h0m0 -9h0m0 -4h0m0 3h0m0 -8h0m1 -5h0m0 6h0m0 3h0m0 3h0m0 -1h0m0 -6h0m1 9h0m0 -10h0m0 4h0m0 1h0m0 -10h0m0 1h0m1 1h0m0 -1h0m0 9h0m0 -10h0m0 -2h0m0 11h0m0 6h0m1 -3h0m0 8h0m0 4h0m0 -11h0m0 3h0m0 3h0m1 -3h0m0 2h0m0 -4h0m0 11h0m0 -10h0m1 -2h0m0 -1h0m0 -13h0m0 18h0m0 4h0m1 -2h0m0 10h0m0 -4h0m0 -2h0m0 -14h0m0 1h0m0 16h0m1 4h0m0 -16h0m0 -1h0m0 16h0m0 -4h0m1 -16h0m0 -12h0m0 -2h0m0 9h0m0 -1h0m0 18h0m0 -10h0m1 -3h0m0 4h0m0 -5h0m0 -8h0m0 12h0m0 4h0m0 4h0m1 -4h0m0 -6h0m0 13h0m0 -5h0m0 7h0m1 -8h0m0 6h0m0 -9h0m0 4h0m0 6h0m1 -3h0m0 -2h0m0 -1h0m0 -10h0m0 5h0m0 -8h0m1 2h0m0 3h0m0 11h0m0 -2h0m0 -7h0m0 -4h0m0 7h0m1 0h0m0 -4h0m0 -9h0m0 7h0m0 7h0m0 4h0m1 2h0m0 -23h0m0 19h0m0 -7h0m0 8h0m0 -7h0m1 -11h0m0 24h0m0 -7h0m0 2h0m0 3h0m0 -8h0m1 7h0m0 -10h0m0 -6h0m0 10h0m0 14h0m0 -4h0m1 5h0m0 -23h0m0 14h0m0 -19h0m0 4h0m0 -3h0m0 12h0m1 11h0m0 -8h0m0 -18h0m0 8h0m0 -7h0m1 13h0m0 -8h0m0 1h0m0 3h0m0 -5h0m0 -4h0m1 5h0m0 10h0m0 -9h0m0 12h0m0 -2h0m1 -5h0m0 -7h0m0 6h0m0 -5h0m0 11h0m0 -7h0m1 4h0m0 -15h0m0 8h0m0 9h0m0 12h0m0 -6h0m1 0h0m0 3h0m0 2h0m0 3h0m0 -10h0m0 1h0m1 -15h0m0 6h0m0 3h0m0 -1h0m0 4h0m0 3h0m1 1h0m0 -1h0m0 -10h0m0 7h0m0 -2h0m0 -6h0m1 -7h0m0 1h0m0 6h0m0 -9h0m0 1h0m0 5h0m1 9h0m0 -6h0m0 10h0m0 -13h0m0 5h0m1 2h0m0 2h0m0 -10h0m0 18h0m0 5h0m0 -12h0m1 -6h0m0 9h0m0 9h0m0 -4h0m0 -2h0m0 -7h0m1 -3h0m0 1h0m0 -11h0m0 4h0m0 9h0m1 -11h0m0 13h0m0 -9h0m0 1h0m0 3h0m0 -7h0m1 2h0m0 -6h0m0 5h0m0 -16h0m0 12h0m0 15h0m1 -7h0m0 -6h0m0 -7h0m0 -5h0m0 4h0m0 6h0m1 8h0m0 9h0m0 -7h0m0 -4h0m0 -1h0m1 4h0m0 2h0m0 -8h0m0 -6h0m0 21h0m0 -6h0m1 -10h0m0 3h0m0 8h0m0 -9h0m0 -5h0m0 9h0m0 7h0m1 1h0m0 7h0m0 -11h0m0 10h0m0 -14h0m0 5h0m0 2h0m1 -11h0m0 -3h0m0 4h0m0 2h0m0 -9h0m1 15h0m0 3h0m0 2h0m0 4h0m0 -16h0m0 -7h0m0 -3h0m1 8h0m0 14h0m0 3h0m0 1h0m0 -8h0m0 -4h0m1 1h0m0 13h0m0 1h0m0 -8h0m1 1h0m0 -15h0m0 9h0m0 -3h0m0 6h0m0 12h0m0 3h0m1 2h0m0 -9h0m0 -11h0m0 -2h0m0 -6h0m0 -6h0" stroke="#000" stroke-width="3.5" stroke-linecap="round" fill="none"/>
<path d="M230.5 97.5h0m0 2h0m29 1h0m145 -2h0m16 2h0m-104 43h0m73 2h0m33 1h0m55 -49h0m0 1h0m-1 2h0m52 -11h0m69 7h0m39 2h0m-73 48h0m1 3h0m42 -2h0m196 -47h0m71 -1h0m53 -4h0m0 3h0m0 2h0m-8 -1h0m80 0h0m0 2h0m21 -6h0m9 3h0m0 2h0m-172 46h0m78 0h0m-40 12h0m177 -60h0m28 1h0m101 1h0m54 0h0m-200 48h0m29 -3h0m19 3h0m-18 14h0m218 -2h0m-549 107h0m358 -88h0m111 7h0" stroke="#ffa500" stroke-width="3.5" stroke-linecap="round" fill="none"/>
<path d="M162.0 321.5V35.5" stroke="#800080" stroke-width="2.08" stroke-dasharray="2.08 3.44" fill="none"/>
<path d="M1259.9 321.5V35.5" stroke="#800080" stroke-width="2.08" stroke-dasharray="2.08 3.44" fill="none"/>
<path d="M1302.9 321.5V35.5" stroke="#800080" stroke-width="2.08" stroke-dasharray="2.08 3.44" fill="none"/>
</g>
<rect x="105.5" y="35.5" width="1380.0" height="286.0" fill="none" stroke="#000" stroke-width="1.11"/>
<path d="M105.5 52.5h-4.86M105.5 88.5h-4.86M105.5 124.5h-4.86M105.5 160.5h-4.86M105.5 197.5h-4.86M105.5 233.5h-4.86M105.5 269.5h-4.86M105.5 305.5h-4.86" stroke="#000" stroke-width="1.11" fill="none"/>
<path d="M162.44 321.5v4.86M458.94 321.5v4.86M755.44 321.5v4.86M1051.94 321.5v4.86M1348.44 321.5v4.86" stroke="#000" stroke-width="1.11" fill="none"/>
<g><text x="95.50" y="58.00" text-anchor="end" font-size="14.17" textLength="30.92" lengthAdjust="spacingAndGlyphs">7.12</text><text x="95.50" y="94.00" text-anchor="end" font-size="14.17" textLength="30.92" lengthAdjust="spacingAndGlyphs">7.10</text><text x="95.50" y="130.00" text-anchor="end" font-size="14.17" textLength="30.92" lengthAdjust="spacingAndGlyphs">7.08</text><text x="95.50" y="166.00" text-anchor="end" font-size="14.17" textLength="30.92" lengthAdjust="spacingAndGlyphs">7.06</text><text x="95.50" y="203.00" text-anchor="end" font-size="14.17" textLength="30.92" lengthAdjust="spacingAndGlyphs">7.04</text><text x="95.50" y="239.00" text-anchor="end" font-size="14.17" textLength="30.92" lengthAdjust="spacingAndGlyphs">7.02</text><text x="95.50" y="275.00" text-anchor="end" font-size="14.17" textLength="30.92" lengthAdjust="spacingAndGlyphs">7.00</text><text x="95.50" y="311.00" text-anchor="end" font-size="14.17" textLength="30.92" lengthAdjust="spacingAndGlyphs">6.98</text><text x="158.08" y="341.80" text-anchor="start" font-size="14.17" textLength="8.84" lengthAdjust="spacingAndGlyphs">0</text><text x="440.83" y="341.80" text-anchor="start" font-size="14.17" textLength="35.35" lengthAdjust="spacingAndGlyphs">2000</text><text x="737.83" y="341.80" text-anchor="start" font-size="14.17" textLength="35.35" lengthAdjust="spacingAndGlyphs">4000</text><text x="1033.83" y="341.80" text-anchor="start" font-size="14.17" textLength="35.35" lengthAdjust="spacingAndGlyphs">6000</text><text x="1330.83" y="341.80" text-anchor="start" font-size="14.17" textLength="35.35" lengthAdjust="spacingAndGlyphs">8000</text><text x="696.69" y="27.00" text-anchor="start" font-size="17.00" textLength="197.62" lengthAdjust="spacingAndGlyphs">AGASC ID 617481632.0</text><text x="693.63" y="311.90" text-anchor="start" font-size="14.17" textLength="35.35" lengthAdjust="spacingAndGlyphs">5775</text><text x="1260.12" y="291.50" text-anchor="start" font-size="14.17" textLength="44.18" lengthAdjust="spacingAndGlyphs">46245</text></g>
<rect x="1361.3" y="42.4" width="117.4" height="27" rx="3.2" fill="#fff" fill-opacity="0.8" stroke="#d6d6d6" stroke-width="1.11"/>
<path d="M1366 53.9h30" stroke="#008000" stroke-width="2.08"/>
<text x="1406.44" y="58.90" text-anchor="start" font-size="14.17" textLength="30.86" lengthAdjust="spacingAndGlyphs">mag</text>
<text x="1437.33" y="60.90" text-anchor="start" font-size="10.20" textLength="34.76" lengthAdjust="spacingAndGlyphs" font-style="italic">AGASC</text>
<rect x="1348.5" y="247.5" width="130" height="67" rx="3.2" fill="#fff" fill-opacity="0.8" stroke="#d6d6d6" stroke-width="1.11"/>
<circle cx="1367.5" cy="260.5" r="2" fill="#ff0000"/><circle cx="1367.5" cy="281.5" r="2" fill="#ffa500"/><circle cx="1367.5" cy="302.5" r="2" fill="#000"/>
<text x="1391.44" y="264.00" text-anchor="start" font-size="14.17" textLength="47.20" lengthAdjust="spacingAndGlyphs">not OK</text>
<text x="1392.34" y="285.00" text-anchor="start" font-size="14.17" textLength="80.07" lengthAdjust="spacingAndGlyphs">Highlighted</text>
<text x="1392.92" y="306.00" text-anchor="start" font-size="14.17" textLength="20.04" lengthAdjust="spacingAndGlyphs">OK</text>
<g clip-path="url(#c2)">
<path d="M162.5 516.5h0m0 49h0m0 -29h0m0 16h0m1 -28h0m0 21h0m0 -15h0m0 9h0m0 -34h0m0 30h0m1 -10h0m0 -19h0m0 26h0m0 -12h0m0 21h0m0 -10h0m0 8h0m1 -1h0m0 -19h0m0 -34h0m0 -15h0m0 18h0m0 -8h0m0 31h0m1 1h0m0 27h0m0 -4h0m0 12h0m0 18h0m0 -22h0m1 -6h0m0 12h0m0 14h0m0 -19h0m0 -4h0m0 3h0m0 -28h0m1 31h0m0 1h0m0 -6h0m0 7h0m0 -21h0m0 -3h0m0 -3h0m1 -24h0m0 5h0m0 -8h0m0 19h0m0 4h0m0 -1h0m1 10h0m0 4h0m0 -6h0m0 -23h0m0 5h0m0 3h0m0 -2h0m1 27h0m0 -15h0m0 37h0m0 -5h0m0 -9h0m0 30h0m0 -11h0m1 -17h0m0 20h0m0 -26h0m0 -24h0m0 46h0m0 -24h0m0 17h0m1 0h0m0 -5h0m0 -7h0m0 38h0m0 -28h0m0 4h0m1 -39h0m0 16h0m0 17h0m0 9h0m0 -8h0m0 -2h0m0 -29h0m1 -11h0m0 -6h0m0 7h0m0 -14h0m0 32h0m0 -28h0m0 26h0m1 -16h0m0 9h0m0 13h0m0 -8h0m0 4h0m0 6h0m0 30h0m1 -51h0m0 -10h0m0 -11h0m0 -10h0m0 -16h0m0 12h0m1 26h0m0 -1h0m0 9h0m0 -34h0m0 4h0m0 11h0m0 32h0m1 -16h0m0 19h0m0 1h0m0 -3h0m0 -6h0m0 22h0m1 -20h0m0 9h0m0 3h0m0 15h0m0 -35h0m0 51h0m0 -29h0m1 -7h0m0 13h0m0 -18h0m0 33h0m0 -25h0m0 4h0m1 -18h0m0 1h0m0 5h0m0 -12h0m0 39h0m0 -12h0m0 -3h0m1 -34h0m0 -13h0m0 11h0m0 8h0m0 12h0m0 -26h0m0 19h0m1 17h0m0 -11h0m0 21h0m0 -3h0m0 23h0m0 -25h0m1 -14h0m0 2h0m0 7h0m0 -16h0m0 15h0m0 13h0m1 -7h0m0 17h0m0 7h0m0 10h0m0 -16h0m0 14h0m0 6h0m1 -3h0m0 18h0m0 -29h0m0 13h0m0 -30h0m0 7h0m1 -15h0m0 1h0m0 2h0m0 -25h0m0 -4h0m0 -17h0m0 7h0m1 -12h0m0 27h0m0 12h0m0 16h0m0 -29h0m0 11h0m1 -38h0m0 -3h0m0 -12h0m0 24h0m0 -19h0m0 2h0m0 39h0m1 10h0m0 -22h0m0 -8h0m0 7h0m0 36h0m0 -45h0m1 2h0m0 11h0m0 44h0m0 -11h0m0 10h0m0 5h0m0 12h0m1 -34h0m0 6h0m0 19h0m0 -30h0m0 -4h0m1 6h0m0 17h0m0 -22h0m0 20h0m0 21h0m0 -28h0m0 -6h0m1 -4h0m0 12h0m0 -13h0m0 -20h0m0 -15h0m0 45h0m0 -7h0m1 3h0m0 -17h0m0 -4h0m0 -9h0m0 15h0m0 -18h0m1 18h0m0 -13h0m0 -23h0m0 62h0m0 -2h0m0 25h0m1 -25h0m0 16h0m0 -29h0m0 -1h0m0 -16h0m0 20h0m0 -5h0m1 -26h0m0 6h0m0 -16h0m0 35h0m0 -21h0m0 6h0m0 10h0m1 -29h0m0 40h0m0 -15h0m0 21h0m0 3h0m1 -6h0m0 -5h0m0 6h0m0 24h0m0 -29h0m0 -51h0m1 32h0m0 -27h0m0 30h0m0 45h0m0 14h0m0 -55h0m0 -6h0m1 42h0m0 -24h0m0 42h0m0 -21h0m0 4h0m0 2h0m0 -18h0m1 7h0m0 -22h0m0 13h0m0 11h0m0 -66h0m0 27h0m1 -15h0m0 -5h0m0 -12h0m0 11h0m0 41h0m1 20h0m0 -65h0m0 29h0m0 11h0m0 -25h0m0 22h0m1 20h0m0 -13h0m0 4h0m0 2h0m0 -39h0m0 11h0m0 3h0m1 -5h0m0 -13h0m0 17h0m0 28h0m0 -29h0m0 47h0m0 -10h0m1 -1h0m0 -44h0m0 25h0m0 47h0m0 -22h0m1 -16h0m0 -8h0m0 -9h0m0 13h0m0 28h0m0 4h0m0 1h0m1 -16h0m0 5h0m0 14h0m0 -21h0m0 -58h0m0 19h0m0 -1h0m1 -2h0m0 9h0m0 13h0m0 25h0m0 14h0m0 16h0m0 -19h0m1 17h0m0 1h0m0 -30h0m0 24h0m0 -7h0m0 -12h0m1 -1h0m0 -26h0m0 5h0m0 -16h0m0 -11h0m0 16h0m1 -32h0m0 31h0m0 -14h0m0 -6h0m0 40h0m0 -32h0m0 3h0m1 3h0m0 18h0m0 -19h0m0 43h0m0 -29h0m0 17h0m0 23h0m1 6h0m0 -39h0m0 -20h0m0 40h0m0 -8h0m0 -5h0m1 -13h0m0 18h0m0 -11h0m0 24h0m0 -26h0m0 -11h0m0 9h0m1 -15h0m0 -1h0m0 38h0m0 -45h0m0 -12h0m0 -5h0m0 32h0m1 5h0m0 2h0m0 -4h0m0 12h0m0 28h0m0 -52h0m0 -3h0m1 -2h0m0 -27h0m0 15h0m0 -2h0m0 31h0m0 -2h0m1 8h0m0 32h0m0 1h0m0 -22h0m0 -43h0m0 22h0m0 -39h0m1 68h0m0 17h0m0 -18h0m0 -3h0m0 2h0m0 13h0m0 -20h0m1 18h0m0 -8h0m0 -17h0m0 -23h0m0 -6h0m0 -3h0m1 -7h0m0 47h0m0 -36h0m0 -5h0m0 16h0m0 -13h0m0 31h0m1 -14h0m0 3h0m0 34h0m0 3h0m0 -28h0m0 7h0m0 11h0m1 8h0m0 1h0m0 13h0m0 -24h0m0 14h0m0 9h0m1 -1h0m0 -22h0m0 -14h0m0 37h0m0 -43h0m0 2h0m1 24h0m0 -1h0m0 -10h0m0 -13h0m0 3h0m0 -7h0m0 30h0m1 -19h0m0 29h0m0 -7h0m0 -7h0m0 -16h0m0 21h0m0 -12h0m1 6h0m0 2h0m0 16h0m0 -42h0m0 21h0m0 14h0m1 -36h0m0 -3h0m0 1h0m0 32h0m0 -5h0m0 -17h0m1 -39h0m0 41h0m0 35h0m0 -48h0m0 27h0m0 -1h0m0 -12h0m1 -19h0m0 -9h0m0 7h0m0 12h0m0 -29h0m0 6h0m0 7h0m1 -24h0m0 9h0m0 6h0m0 21h0m0 -41h0m0 33h0m1 29h0m0 -8h0m0 18h0m0 -15h0m0 -8h0m0 9h0m1 5h0m0 -31h0m0 -25h0m0 35h0m0 -25h0m0 30h0m0 -11h0m1 -2h0m0 -33h0m0 61h0m0 4h0m0 -13h0m0 -10h0m0 -21h0m1 -14h0m0 21h0m0 1h0m0 11h0m0 7h0m0 5h0m0 15h0m1 9h0m0 -29h0m0 2h0m0 -33h0m0 36h0m0 -28h0m1 39h0m0 -9h0m0 -28h0m0 4h0m0 12h0m0 -18h0m0 -14h0m1 28h0m0 13h0m0 -7h0m0 -11h0m0 16h0m0 -3h0m0 -3h0m1 -1h0m0 13h0m0 -22h0m0 -13h0m0 25h0m0 -28h0m0 17h0m1 -9h0m0 4h0m0 2h0m0 -17h0m0 -12h0m0 19h0m1 18h0m0 -7h0m0 -7h0m0 16h0m0 -25h0m0 -17h0m0 1h0m1 6h0m0 2h0m0 12h0m0 -22h0m0 -1h0m1 23h0m0 16h0m0 -22h0m0 -17h0m0 24h0m0 30h0m0 2h0m1 -3h0m0 23h0m0 -7h0m0 -23h0m0 37h0m0 8h0m1 -22h0m0 -21h0m0 4h0m0 7h0m0 -42h0m0 16h0m1 -23h0m0 5h0m0 9h0m0 -6h0m0 -4h0m1 2h0m0 19h0m0 -13h0m0 -22h0m0 30h0m0 -10h0m0 -5h0m1 20h0m0 -21h0m0 -4h0m0 21h0m0 18h0m0 -1h0m1 5h0m0 -13h0m0 -8h0m0 4h0m0 1h0m0 5h0m0 19h0m1 -22h0m0 -37h0m0 15h0m0 7h0m0 55h0m0 -20h0m1 15h0m0 11h0m0 -13h0m0 -21h0m0 6h0m0 2h0m0 -6h0m1 12h0m0 -32h0m0 6h0m0 3h0m0 7h0m0 -27h0m1 -27h0m0 25h0m0 -23h0m0 14h0m0 -1h0m0 -10h0m0 22h0m1 24h0m0 -28h0m0 1h0m0 7h0m0 -9h0m0 -2h0m1 -9h0m0 36h0m0 18h0m0 6h0m0 -21h0m0 -17h0m0 51h0m1 -10h0m0 -1h0m0 -1h0m0 -20h0m0 10h0m0 -11h0m1 9h0m0 -10h0m0 45h0m0 -33h0m0 6h0m0 16h0m0 -11h0m1 16h0m0 -18h0m0 5h0m0 14h0m0 -39h0m0 -13h0m0 -9h0m1 43h0m0 14h0m0 -20h0m0 -16h0m0 12h0m0 -14h0m1 -19h0m0 -4h0m0 10h0m0 8h0m0 -17h0m0 4h0m1 21h0m0 13h0m0 -6h0m0 -21h0m0 16h0m0 -54h0m0 25h0m1 9h0m0 30h0m0 -38h0m0 16h0m0 -21h0m0 26h0m1 26h0m0 -47h0m0 53h0m0 -11h0m0 -9h0m0 38h0m0 3h0m1 -18h0m0 -24h0m0 33h0m0 -1h0m0 -18h0m0 21h0m1 -20h0m0 -3h0m0 -4h0m0 9h0m0 16h0m0 -34h0m0 5h0m1 2h0m0 -15h0m0 1h0m0 10h0m0 12h0m0 -5h0m1 25h0m0 -14h0m0 -18h0m0 -12h0m0 24h0m0 3h0m0 -40h0m1 13h0m0 -16h0m0 -9h0m0 -3h0m0 -19h0m0 20h0m1 -13h0m0 -13h0m0 28h0m0 -32h0m0 11h0m0 13h0m1 5h0m0 12h0m0 -13h0m0 20h0m0 16h0m0 -31h0m0 57h0m1 -54h0m0 63h0m0 -8h0m0 -40h0m0 -1h0m0 -22h0m0 -8h0m1 28h0m0 -4h0m0 -1h0m0 -27h0m0 19h0m0 -8h0m1 -6h0m0 26h0m0 6h0m0 -31h0m0 33h0m0 12h0m0 -27h0m1 7h0m0 3h0m0 21h0m0 -12h0m0 6h0m0 8h0m1 17h0m0 -18h0m0 23h0m0 -25h0m0 4h0m0 -5h0m1 -1h0m0 2h0m0 -19h0m0 21h0m0 -9h0m0 -10h0m0 29h0m1 -34h0m0 -21h0m0 -8h0m0 28h0m0 -4h0m0 3h0m1 -28h0m0 21h0m0 -29h0m0 40h0m0 -50h0m0 16h0m1 50h0m0 -1h0m0 16h0m0 4h0m0 16h0m1 -20h0m0 8h0m0 12h0m0 -23h0m0 -1h0m0 -36h0m0 13h0m1 -16h0m0 10h0m0 3h0m0 -38h0m0 9h0m0 21h0m0 11h0m1 -18h0m0 14h0m0 -26h0m0 2h0m0 -8h0m0 -8h0m1 23h0m0 1h0m0 -19h0m0 16h0m0 -17h0m1 31h0m0 32h0m0 8h0m0 5h0m0 -23h0m0 8h0m0 -6h0m1 -3h0m0 -21h0m0 35h0m0 22h0m0 -16h0m0 -30h0m0 2h0m1 -11h0m0 -12h0m0 -8h0m0 5h0m0 -1h0m0 47h0m0 -40h0m1 -25h0m0 59h0m0 -26h0m0 3h0m0 -16h0m0 17h0m1 -3h0m0 -18h0m0 1h0m0 5h0m0 18h0m0 -2h0m1 4h0m0 -34h0m0 51h0m0 12h0m0 -54h0m0 22h0m0 8h0m1 -5h0m0 4h0m0 -44h0m0 6h0m0 -8h0m0 14h0m0 -17h0m1 9h0m0 -4h0m0 -6h0m0 12h0m0 14h0m0 10h0m1 6h0m0 1h0m0 43h0m0 -12h0m0 -1h0m0 32h0m1 -3h0m0 -13h0m0 -18h0m0 -19h0m0 10h0m0 -22h0m0 4h0m1 2h0m0 10h0m0 -1h0m0 -2h0m0 -44h0m0 1h0m0 3h0m1 9h0m0 5h0m0 -9h0m0 -5h0m0 32h0m1 20h0m0 -18h0m0 17h0m0 -1h0m0 25h0m0 -16h0m1 -5h0m0 10h0m0 16h0m0 -13h0m0 -17h0m0 -40h0m0 9h0m1 -1h0m0 -24h0m0 -7h0m0 6h0m0 -1h0m0 9h0m1 1h0m0 -9h0m0 4h0m0 16h0m0 4h0m0 1h0m1 -3h0m0 -16h0m0 2h0m0 29h0m0 -46h0m0 22h0m1 3h0m0 -10h0m0 -2h0m0 64h0m0 -10h0m0 -32h0m1 29h0m0 -31h0m0 7h0m0 -9h0m0 38h0m0 -20h0m0 25h0m1 -6h0m0 -37h0m0 -8h0m0 4h0m0 -19h0m0 11h0m1 10h0m0 60h0m0 -23h0m0 25h0m0 -50h0m0 20h0m0 -24h0m1 28h0m0 -7h0m0 5h0m0 -3h0m0 21h0m0 -2h0m0 -12h0m1 2h0m0 17h0m0 -46h0m0 -19h0m0 -1h0m0 -12h0m0 19h0m1 6h0m0 -30h0m0 10h0m0 -6h0m0 16h0m1 -15h0m0 -2h0m0 12h0m0 -20h0m0 12h0m0 -29h0m1 17h0m0 15h0m0 32h0m0 9h0m0 -31h0m0 1h0m0 34h0m1 -2h0m0 -1h0m0 20h0m0 -6h0m0 -7h0m0 -3h0m0 17h0m1 -57h0m0 3h0m0 21h0m0 -9h0m0 22h0m0 -9h0m1 -12h0m0 14h0m0 -26h0m0 21h0m0 23h0m0 -31h0m1 -31h0m0 42h0m0 38h0m0 -4h0m0 3h0m0 -10h0m0 -26h0m1 -22h0m0 41h0m0 -27h0m0 9h0m0 2h0m0 -33h0m0 12h0m1 -8h0m0 31h0m0 -7h0m0 36h0m0 -27h0m0 -11h0m1 -24h0m0 -1h0m0 -1h0m0 17h0m0 -18h0m1 -14h0m0 -1h0m0 19h0m0 -3h0m0 6h0m0 6h0m1 26h0m0 20h0m0 -1h0m0 20h0m0 -32h0m0 -6h0m0 -13h0m1 38h0m0 -31h0m0 5h0m0 -3h0m0 -38h0m0 39h0m1 41h0m0 -9h0m0 -40h0m0 26h0m0 -19h0m0 -34h0m0 37h0m1 1h0m0 -9h0m0 -1h0m0 -12h0m0 8h0m0 12h0m1 -12h0m0 -24h0m0 18h0m0 19h0m0 -4h0m0 -5h0m0 -3h0m1 -13h0m0 4h0m0 -9h0m0 39h0m0 -10h0m0 26h0m1 4h0m0 -16h0m0 -3h0m0 24h0m0 1h0m0 -24h0m0 -32h0m1 -1h0m0 -6h0m0 14h0m0 3h0m0 17h0m0 -19h0m0 -3h0m1 2h0m0 38h0m0 -15h0m0 5h0m0 -13h0m1 -9h0m0 -21h0m0 9h0m0 6h0m0 -5h0m0 -28h0m1 32h0m0 -41h0m0 40h0m0 -6h0m0 -4h0m0 5h0m1 16h0m0 -25h0m0 7h0m0 -20h0m0 46h0m0 8h0m0 -22h0m1 -8h0m0 21h0m0 7h0m0 5h0m0 -44h0m0 35h0m1 3h0m0 -5h0m0 10h0m0 26h0m0 -7h0m0 -15h0m0 12h0m1 -23h0m0 -18h0m0 -8h0m0 -43h0m0 23h0m0 3h0m0 -8h0m1 27h0m0 41h0m0 -11h0m0 -13h0m0 -8h0m1 48h0m0 -29h0m0 -38h0m0 -15h0m0 34h0m0 -21h0m1 -4h0m0 7h0m0 14h0m0 -43h0m0 37h0m0 33h0m0 -66h0m1 33h0m0 12h0m0 -17h0m0 -19h0m0 -20h0m0 25h0m1 -18h0m0 7h0m0 32h0m0 14h0m0 -6h0m0 23h0m0 -29h0m1 -8h0m0 5h0m0 -4h0m0 -22h0m0 -4h0m1 3h0m0 -1h0m0 -2h0m0 30h0m0 -18h0m0 -5h0m0 13h0m1 9h0m0 -19h0m0 -3h0m0 -12h0m0 21h0m0 -23h0m0 9h0m1 7h0m0 3h0m0 9h0m0 -3h0m0 -7h0m0 -3h0m0 14h0m1 -7h0m0 -9h0m0 6h0m0 11h0m0 -30h0m0 27h0m1 -2h0m0 18h0m0 -27h0m0 16h0m0 5h0m0 37h0m1 14h0m0 -9h0m0 -15h0m0 4h0m0 -2h0m0 6h0m1 2h0m0 28h0m0 -17h0m0 6h0m0 -3h0m0 -17h0m0 -3h0m1 -35h0m0 -1h0m0 -3h0m0 -24h0m0 23h0m0 -28h0m1 6h0m0 34h0m0 20h0m0 -14h0m0 -2h0m0 22h0m0 -54h0m1 -7h0m0 36h0m0 25h0m0 -37h0m0 31h0m0 -16h0m1 15h0m0 -11h0m0 -1h0m0 17h0m0 32h0m0 -28h0m0 19h0m1 -9h0m0 -8h0m0 -17h0m0 -1h0m0 -17h0m0 20h0m1 14h0m0 -9h0m0 12h0m0 -5h0m0 11h0m0 -20h0m1 -7h0m0 -11h0m0 -8h0m0 28h0m0 6h0m0 -3h0m0 -39h0m1 22h0m0 -18h0m0 29h0m0 5h0m0 2h0m0 19h0m0 -13h0m1 15h0m0 -30h0m0 -9h0m0 -5h0m0 24h0m1 -20h0m0 31h0m0 -23h0m0 5h0m0 12h0m0 -26h0m1 1h0m0 -12h0m0 -11h0m0 -2h0m0 7h0m0 -4h0m0 -20h0m1 38h0m0 25h0m0 -46h0m0 10h0m0 -13h0m0 6h0m0 17h0m1 -18h0m0 36h0m0 1h0m0 6h0m0 -25h0m0 -17h0m1 -2h0m0 22h0m0 -24h0m0 -26h0m0 9h0m0 12h0m0 -19h0m1 23h0m0 18h0m0 -8h0m0 21h0m0 -8h0m0 20h0m0 13h0m1 -29h0m0 17h0m0 22h0m0 -25h0m0 -24h0m0 32h0m0 28h0m1 -16h0m0 -31h0m0 18h0m0 -4h0m0 26h0m0 -6h0m1 -33h0m0 24h0m0 -40h0m0 38h0m0 -8h0m0 26h0m1 -43h0m0 -18h0m0 17h0m0 7h0m0 26h0m0 -10h0m0 3h0m1 2h0m0 -1h0m0 6h0m0 13h0m0 -8h0m0 -19h0m0 12h0m1 15h0m0 -4h0m0 15h0m0 -22h0m0 2h0m0 1h0m1 -7h0m0 -23h0m0 22h0m0 10h0m0 -20h0m0 2h0m1 36h0m0 -26h0m0 22h0m0 8h0m0 -41h0m0 -8h0m1 12h0m0 -18h0m0 19h0m0 26h0m0 -22h0m0 -3h0m0 -21h0m1 12h0m0 -16h0m0 -7h0m0 4h0m0 -14h0m0 26h0m1 14h0m0 -6h0m0 -5h0m0 18h0m0 -15h0m0 18h0m1 -48h0m0 20h0m0 -17h0m0 15h0m0 -33h0m0 13h0m0 23h0m1 1h0m0 12h0m0 7h0m0 -10h0m0 -4h0m0 2h0m0 -3h0m1 -35h0m0 23h0m0 17h0m0 16h0m0 1h0m0 -5h0m1 -2h0m0 -20h0m0 27h0m0 3h0m0 -12h0m0 -2h0m0 1h0m1 9h0m0 4h0m0 8h0m0 -31h0m0 -16h0m0 1h0m0 -14h0m1 9h0m0 18h0m0 -9h0m0 8h0m0 -26h0m0 -11h0m1 -1h0m0 -15h0m0 -1h0m0 23h0m0 -10h0m1 18h0m0 -10h0m0 -15h0m0 18h0m0 -26h0m0 14h0m0 8h0m1 -7h0m0 3h0m0 20h0m0 25h0m0 4h0m0 -3h0m0 15h0m1 4h0m0 5h0m0 -28h0m0 8h0m0 -12h0m1 19h0m0 14h0m0 -9h0m0 -22h0m0 4h0m0 14h0m0 -19h0m1 10h0m0 3h0m0 -35h0m0 5h0m0 -4h0m0 27h0m0 -5h0m1 7h0m0 -16h0m0 -1h0m0 20h0m0 -11h0m0 -10h0m0 4h0m1 9h0m0 11h0m0 -20h0m0 -28h0m0 1h0m1 5h0m0 1h0m0 12h0m0 16h0m0 -46h0m0 13h0m0 -3h0m1 -18h0m0 9h0m0 49h0m0 -66h0m0 41h0m0 5h0m0 24h0m1 -28h0m0 21h0m0 13h0m0 -30h0m0 1h0m0 28h0m0 -41h0m1 2h0m0 3h0m0 -12h0m0 -7h0m0 47h0m0 -23h0m1 -1h0m0 -2h0m0 24h0m0 3h0m0 -8h0m0 16h0m0 -22h0m1 12h0m0 36h0m0 -41h0m0 19h0m0 8h0m0 -20h0m0 -25h0m1 13h0m0 10h0m0 -15h0m0 -16h0m0 14h0m0 26h0m1 -16h0m0 9h0m0 11h0m0 5h0m0 -11h0m0 36h0m1 -34h0m0 16h0m0 -31h0m0 -27h0m0 -6h0m0 7h0m0 16h0m1 32h0m0 20h0m0 -31h0m0 -4h0m0 37h0m0 -23h0m0 17h0m1 -10h0m0 -3h0m0 8h0m0 6h0m0 -4h0m0 -33h0m1 28h0m0 -12h0m0 -34h0m0 22h0m0 35h0m0 -3h0m1 -2h0m0 -23h0m0 -7h0m0 -3h0m0 8h0m0 -1h0m1 -33h0m0 18h0m0 40h0m0 15h0m0 -30h0m0 -3h0m0 20h0m1 -4h0m0 1h0m0 10h0m0 -19h0m0 2h0m0 -3h0m0 -7h0m1 14h0m0 -13h0m0 -19h0m0 17h0m0 25h0m0 -12h0m1 21h0m0 -22h0m0 -7h0m0 -27h0m0 19h0m0 -25h0m0 1h0m1 -21h0m0 46h0m0 -43h0m0 -8h0m0 12h0m0 66h0m1 -13h0m0 -22h0m0 -25h0m0 9h0m0 23h0m0 14h0m1 8h0m0 -32h0m0 -12h0m0 17h0m0 -15h0m0 -8h0m1 13h0m0 -13h0m0 -16h0m0 5h0m0 -7h0m0 -22h0m0 15h0m1 -5h0m0 32h0m0 -25h0m0 33h0m0 -28h0m0 24h0m0 18h0m1 13h0m0 -24h0m0 -18h0m0 32h0m0 -45h0m0 -7h0m0 12h0m1 -3h0m0 10h0m0 1h0m0 14h0m0 -17h0m0 15h0m1 -10h0m0 -26h0m0 6h0m0 18h0m0 -22h0m1 30h0m0 -10h0m0 -3h0m0 20h0m0 6h0m0 3h0m0 -22h0m1 4h0m0 -16h0m0 44h0m0 -40h0m0 -35h0m0 29h0m0 3h0m1 -6h0m0 -16h0m0 26h0m0 10h0m0 -9h0m0 -9h0m1 -1h0m0 38h0m0 7h0m0 -18h0m0 -3h0m0 -9h0m0 -4h0m1 -16h0m0 4h0m0 -14h0m0 22h0m0 39h0m0 4h0m0 11h0m1 3h0m0 -12h0m0 -12h0m0 -32h0m0 -21h0m0 18h0m0 12h0m1 11h0m0 5h0m0 -8h0m0 -18h0m0 -5h0m0 17h0m1 -22h0m0 27h0m0 -16h0m0 23h0m0 21h0m0 -27h0m0 -29h0m1 -21h0m0 24h0m0 16h0m0 -5h0m0 -16h0m0 45h0m0 10h0m1 -7h0m0 16h0m0 -33h0m0 -1h0m0 -8h0m0 48h0m0 -30h0m1 16h0m0 -2h0m0 -27h0m0 10h0m0 -15h0m0 -5h0m1 10h0m0 -10h0m0 -5h0m0 23h0m0 -20h0m0 32h0m0 -13h0m1 2h0m0 4h0m0 -8h0m0 -8h0m0 14h0m0 37h0m0 -32h0m1 16h0m0 -2h0m0 -15h0m0 5h0m0 15h0m0 -11h0m0 4h0m1 14h0m0 -6h0m0 -38h0m0 32h0m0 -14h0m0 -5h0m1 -15h0m0 -1h0m0 -25h0m0 24h0m0 -23h0m0 29h0m0 -18h0m1 23h0m0 13h0m0 -29h0m0 8h0m0 11h0m0 -32h0m0 26h0m1 45h0m0 -14h0m0 13h0m0 4h0m0 -20h0m0 -16h0m0 13h0m1 -1h0m0 4h0m0 -24h0m0 2h0m0 -10h0m1 2h0m0 -38h0m0 28h0m0 -11h0m0 -9h0m0 11h0m0 3h0m1 -18h0m0 23h0m0 17h0m0 -18h0m0 2h0m0 10h0m1 29h0m0 11h0m0 -6h0m0 -25h0m0 12h0m0 -8h0m0 -20h0m1 45h0m0 -27h0m0 -11h0m0 -6h0m0 8h0m1 -11h0m0 4h0m0 -11h0m0 5h0m0 -8h0m0 5h0m0 46h0m1 -37h0m0 -1h0m0 -12h0m0 11h0m0 -20h0m0 11h0m0 -7h0m1 23h0m0 -28h0m0 5h0m0 33h0m0 30h0m0 8h0m1 -55h0m0 -2h0m0 -22h0m0 -10h0m0 17h0m0 -16h0m0 1h0m1 21h0m0 -2h0m0 -14h0m0 25h0m0 -19h0m0 14h0m0 -16h0m1 23h0m0 23h0m0 6h0m0 23h0m0 19h0m0 -13h0m0 -28h0m1 -1h0m0 -15h0m0 -48h0m0 7h0m0 10h0m0 -29h0m1 24h0m0 5h0m0 -2h0m0 -7h0m0 5h0m0 -9h0m1 6h0m0 41h0m0 -45h0m0 -6h0m0 32h0m0 -31h0m1 36h0m0 10h0m0 46h0m0 -25h0m0 -20h0m0 26h0m1 -11h0m0 -11h0m0 -17h0m0 -15h0m0 40h0m0 -34h0m1 -6h0m0 -8h0m0 10h0m0 -1h0m0 2h0m1 20h0m0 9h0m0 18h0m0 -49h0m0 12h0m0 14h0m0 10h0m1 -14h0m0 -30h0m0 11h0m0 18h0m0 -25h0m0 -21h0m0 51h0m1 -11h0m0 -29h0m0 12h0m0 10h0m0 -1h0m0 -6h0m1 28h0m0 5h0m0 -10h0m0 -19h0m0 -2h0m0 -22h0m0 3h0m1 6h0m0 3h0m0 15h0m0 -11h0m0 15h0m0 8h0m0 -7h0m1 28h0m0 -3h0m0 31h0m0 -49h0m0 13h0m0 13h0m0 -18h0m1 -2h0m0 -16h0m0 -14h0m0 45h0m0 -21h0m0 33h0m1 12h0m0 -9h0m0 -9h0m0 -14h0m0 25h0m0 -8h0m0 -21h0m1 18h0m0 1h0m0 -2h0m0 -37h0m0 30h0m0 -3h0m0 -23h0m1 2h0m0 -10h0m0 -22h0m0 47h0m0 -34h0m0 -4h0m1 -14h0m0 17h0m0 -11h0m0 10h0m0 -5h0m0 4h0m1 2h0m0 35h0m0 -19h0m0 18h0m0 -23h0m0 17h0m0 -7h0m1 -10h0m0 -1h0m0 -7h0m0 -9h0m0 7h0m0 -18h0m0 13h0m1 28h0m0 42h0m0 -30h0m0 -13h0m0 -20h0m0 39h0m0 -38h0m1 23h0m0 -1h0m0 -17h0m0 25h0m0 45h0m1 -54h0m0 -28h0m0 26h0m0 7h0m0 7h0m0 32h0m0 -6h0m1 1h0m0 -18h0m0 11h0m0 -10h0m0 1h0m0 -37h0m0 -20h0m1 11h0m0 7h0m0 -10h0m0 -9h0m0 -4h0m0 27h0m1 5h0m0 20h0m0 -33h0m0 -16h0m0 62h0m1 -72h0m0 34h0m0 -11h0m0 6h0m0 2h0m0 -22h0m0 3h0m1 53h0m0 -23h0m0 15h0m0 -6h0m0 -18h0m0 31h0m1 18h0m0 -46h0m0 6h0m0 13h0m0 -1h0m0 -11h0m1 -28h0m0 12h0m0 32h0m0 -46h0m0 32h0m1 11h0m0 -7h0m0 -20h0m0 26h0m0 -10h0m0 -21h0m0 16h0m1 -8h0m0 26h0m0 36h0m0 -8h0m0 20h0m0 -18h0m1 -14h0m0 -9h0m0 6h0m0 -23h0m0 -25h0m0 -15h0m0 43h0m1 1h0m0 11h0m0 6h0m0 -30h0m0 -1h0m0 4h0m1 -20h0m0 -4h0m0 10h0m0 -4h0m0 10h0m0 41h0m0 4h0m1 -9h0m0 16h0m0 -19h0m0 6h0m0 19h0m0 -15h0m0 -16h0m1 -2h0m0 23h0m0 -5h0m0 24h0m0 -12h0m0 -22h0m0 -18h0m1 15h0m0 -37h0m0 -5h0m0 3h0m0 4h0m1 -5h0m0 -10h0m0 5h0m0 10h0m0 3h0m0 33h0m0 21h0m1 -30h0m0 22h0m0 -18h0m0 6h0m0 -41h0m0 9h0m0 -18h0m1 5h0m0 20h0m0 4h0m0 -11h0m0 -9h0m0 -9h0m0 21h0m1 -9h0m0 59h0m0 8h0m0 -26h0m0 -18h0m0 -17h0m1 -16h0m0 -2h0m0 43h0m0 -8h0m0 12h0m0 -14h0m0 -15h0m1 0h0m0 3h0m0 25h0m0 24h0m0 -33h0m0 -17h0m1 1h0m0 -2h0m0 7h0m0 15h0m0 -21h0m0 37h0m1 -48h0m0 11h0m0 -16h0m0 -8h0m0 19h0m0 -25h0m1 -6h0m0 10h0m0 3h0m0 -16h0m0 43h0m0 -5h0m0 35h0m1 -9h0m0 4h0m0 15h0m0 -23h0m0 20h0m0 13h0m0 -21h0m1 -36h0m0 -30h0m0 -2h0m0 -11h0m0 6h0m0 25h0m0 -11h0m1 0h0m0 -4h0m0 1h0m0 8h0m0 8h0m0 26h0m1 49h0m0 -29h0m0 -16h0m0 -14h0m0 -14h0m0 19h0m0 -13h0m1 33h0m0 22h0m0 -39h0m0 -7h0m0 25h0m0 -19h0m0 -2h0m1 -18h0m0 6h0m0 2h0m0 -20h0m0 46h0m1 -1h0m0 -17h0m0 1h0m0 11h0m0 -23h0m0 -4h0m0 -5h0m1 3h0m0 -16h0m0 31h0m0 -39h0m0 53h0m0 8h0m0 -4h0m1 -13h0m0 5h0m0 -7h0m0 -34h0m0 4h0m0 46h0m0 -13h0m1 34h0m0 -28h0m0 -2h0m0 47h0m0 -33h0m0 32h0m1 -24h0m0 -13h0m0 24h0m0 -22h0m0 -11h0m0 15h0m0 -16h0m1 8h0m0 -7h0m0 5h0m0 -2h0m0 -9h0m0 -15h0m0 -12h0m1 55h0m0 -1h0m0 -5h0m0 -5h0m0 3h0m0 -12h0m0 10h0m1 -29h0m0 -12h0m0 -30h0m0 29h0m0 5h0m0 12h0m1 29h0m0 -11h0m0 17h0m0 -24h0m0 11h0m0 -29h0m0 56h0m1 -4h0m0 7h0m0 2h0m0 -22h0m0 24h0m0 15h0m1 -29h0m0 30h0m0 -24h0m0 18h0m0 -8h0m0 -15h0m0 16h0m1 -15h0m0 -3h0m0 -8h0m0 21h0m0 -19h0m0 4h0m1 -16h0m0 -23h0m0 21h0m0 -5h0m0 -6h0m0 32h0m1 20h0m0 -16h0m0 -5h0m0 18h0m0 -30h0m0 -2h0m0 15h0m1 0h0m0 10h0m0 -43h0m0 -5h0m0 19h0m0 -5h0m0 -8h0m1 9h0m0 -3h0m0 -9h0m0 21h0m0 -31h0m0 15h0m1 -25h0m0 23h0m0 4h0m0 -46h0m0 23h0m0 7h0m0 -24h0m1 -12h0m0 25h0m0 13h0m0 -11h0m0 52h0m0 -20h0m0 -42h0m1 7h0m0 26h0m0 24h0m0 -22h0m0 -13h0m0 10h0m1 9h0m0 -24h0m0 7h0m0 30h0m0 -27h0m0 -35h0m1 40h0m0 1h0m0 -17h0m0 6h0m0 -13h0m0 -8h0m0 13h0m1 17h0m0 2h0m0 9h0m0 7h0m0 -8h0m0 -39h0m0 17h0m1 12h0m0 -7h0m0 39h0m0 -10h0m0 -38h0m0 2h0m1 2h0m0 5h0m0 6h0m0 10h0m0 10h0m0 3h0m1 2h0m0 -2h0m0 -54h0m0 -11h0m0 9h0m0 -7h0m0 -15h0m1 23h0m0 17h0m0 -32h0m0 3h0m0 17h0m0 7h0m0 -20h0m1 8h0m0 -13h0m0 23h0m0 15h0m0 -24h0m1 6h0m0 32h0m0 -25h0m0 6h0m0 8h0m0 -29h0m1 15h0m0 25h0m0 -31h0m0 37h0m0 1h0m0 22h0m0 -44h0m1 24h0m0 -25h0m0 26h0m0 -28h0m0 -35h0m0 22h0m0 2h0m1 -2h0m0 -8h0m0 1h0m0 8h0m0 7h0m0 -11h0m0 -3h0m1 21h0m0 -21h0m0 -4h0m0 -12h0m0 7h0m0 11h0m1 -20h0m0 30h0m0 17h0m0 -23h0m0 13h0m0 -22h0m0 16h0m1 -21h0m0 2h0m0 26h0m0 -32h0m0 18h0m0 -13h0m0 -8h0m1 24h0m0 24h0m0 -4h0m0 -30h0m0 2h0m0 -14h0m1 12h0m0 9h0m0 20h0m0 -24h0m0 7h0m1 -6h0m0 -12h0m0 41h0m0 -37h0m0 26h0m0 -21h0m0 9h0m1 -28h0m0 19h0m0 -6h0m0 25h0m0 -5h0m0 12h0m0 18h0m1 14h0m0 -6h0m0 24h0m0 -25h0m0 -32h0m0 18h0m0 -8h0m1 35h0m0 -15h0m0 -7h0m0 20h0m0 12h0m0 -15h0m1 1h0m0 -4h0m0 -10h0m0 20h0m0 26h0m0 -33h0m0 25h0m1 -16h0m0 -11h0m0 -3h0m0 22h0m0 -3h0m0 -1h0m1 -15h0m0 11h0m0 -10h0m0 -13h0m0 14h0m0 -23h0m0 8h0m1 22h0m0 -16h0m0 -19h0m0 28h0m0 -11h0m0 -10h0m1 -21h0m0 5h0m0 15h0m0 -33h0m0 9h0m0 -2h0m1 24h0m0 5h0m0 -22h0m0 11h0m0 -6h0m0 46h0m1 -16h0m0 -3h0m0 9h0m0 -5h0m0 1h0m0 21h0m0 -9h0m1 8h0m0 -16h0m0 -13h0m0 -28h0m1 11h0m0 9h0m0 -22h0m0 43h0m0 -47h0m0 9h0m0 15h0m1 12h0m0 6h0m0 22h0m0 3h0m0 -32h0m0 2h0m1 -5h0m0 12h0m0 -2h0m0 43h0m0 -31h0m0 -13h0m1 -16h0m0 16h0m0 7h0m0 16h0m0 -35h0m0 -12h0m1 -10h0m0 -13h0m0 22h0m0 -6h0m0 3h0m0 -15h0m1 -11h0m0 14h0m0 14h0m0 -15h0m0 3h0m0 4h0m0 5h0m1 -14h0m0 36h0m0 -12h0m0 1h0m0 44h0m0 -50h0m1 3h0m0 -2h0m0 -31h0m0 4h0m0 4h0m0 9h0m1 8h0m0 17h0m0 -11h0m0 7h0m0 23h0m0 -24h0m0 8h0m1 7h0m0 5h0m0 -1h0m0 8h0m0 3h0m1 -43h0m0 -17h0m0 28h0m0 5h0m0 -25h0m0 4h0m1 2h0m0 9h0m0 -30h0m0 -9h0m0 23h0m0 12h0m0 -1h0m1 11h0m0 23h0m0 -19h0m0 -33h0m0 14h0m0 -3h0m0 6h0m1 17h0m0 -28h0m0 19h0m0 24h0m0 -33h0m0 10h0m1 16h0m0 -26h0m0 25h0m0 -21h0m0 36h0m1 9h0m0 -16h0m0 23h0m0 -30h0m0 -2h0m0 -1h0m1 -23h0m0 -12h0m0 23h0m0 11h0m0 -6h0m0 24h0m0 13h0m1 -46h0m0 -39h0m0 22h0m0 -14h0m0 11h0m0 25h0m1 7h0m0 -6h0m0 -19h0m0 -5h0m0 1h0m0 22h0m1 -39h0m0 -10h0m0 11h0m0 17h0m0 -9h0m0 5h0m0 -38h0m1 5h0m0 22h0m0 11h0m0 -2h0m0 -6h0m0 11h0m0 65h0m1 -32h0m0 24h0m0 -36h0m0 42h0m0 -4h0m0 -7h0m0 -1h0m1 3h0m0 -21h0m0 12h0m0 -22h0m0 -9h0m1 8h0m0 35h0m0 -24h0m0 -12h0m0 17h0m0 -29h0m0 20h0m1 -23h0m0 -8h0m0 -14h0m0 21h0m0 -2h0m0 48h0m0 -74h0m1 25h0m0 -31h0m0 12h0m0 11h0m0 -20h0m0 18h0m1 -10h0m0 11h0m0 33h0m0 -8h0m0 29h0m0 -2h0m1 7h0m0 -3h0m0 6h0m0 -40h0m0 26h0m0 -7h0m0 -10h0m1 0h0m0 22h0m0 6h0m0 1h0m0 -28h0m1 7h0m0 -14h0m0 -21h0m0 54h0m0 -9h0m0 21h0m0 -16h0m1 9h0m0 -19h0m0 -32h0m0 28h0m0 -15h0m0 -8h0m1 17h0m0 -34h0m0 -5h0m0 59h0m0 -13h0m0 -21h0m0 -18h0m1 28h0m0 31h0m0 -37h0m0 19h0m0 5h0m0 19h0m0 -51h0m1 -19h0m0 11h0m0 56h0m0 -20h0m0 -1h0m0 -2h0m0 -29h0m1 15h0m0 -1h0m0 -11h0m0 -14h0m0 -17h0m0 15h0m1 22h0m0 21h0m0 -9h0m0 -8h0m0 41h0m0 -6h0m0 21h0m1 -28h0m0 -27h0m0 -36h0m0 54h0m0 -8h0m0 5h0m1 -2h0m0 44h0m0 -26h0m0 15h0m0 -12h0m0 -2h0m0 9h0m1 -13h0m0 -1h0m0 -11h0m0 -11h0m0 -1h0m1 -14h0m0 25h0m0 -14h0m0 16h0m0 -4h0m0 8h0m0 7h0m1 -14h0m0 1h0m0 -13h0m0 -28h0m0 23h0m0 43h0m0 4h0m1 -1h0m0 17h0m0 -11h0m0 -19h0m0 -1h0m0 -1h0m0 13h0m1 13h0m0 -41h0m0 26h0m0 -22h0m0 -21h0m0 25h0m1 -6h0m0 28h0m0 -13h0m0 1h0m0 5h0m0 -1h0m0 -31h0m1 -1h0m0 15h0m0 -14h0m0 37h0m0 -48h0m0 -41h0m0 38h0m1 17h0m0 -33h0m0 36h0m0 -22h0m0 -17h0m0 18h0m0 27h0m1 -30h0m0 -8h0m0 14h0m0 -21h0m0 11h0m0 1h0m1 4h0m0 37h0m0 10h0m0 -5h0m0 -9h0m0 -37h0m0 26h0m1 1h0m0 19h0m0 -31h0m0 4h0m0 -3h0m0 27h0m1 -65h0m0 15h0m0 12h0m0 -2h0m0 -26h0m0 4h0m1 14h0m0 9h0m0 14h0m0 -20h0m0 7h0m0 20h0m1 -20h0m0 -15h0m0 5h0m0 35h0m0 -15h0m0 -11h0m1 -32h0m0 38h0m0 32h0m0 -35h0m0 33h0m0 16h0m1 -37h0m0 31h0m0 -8h0m0 7h0m0 -23h0m0 -12h0m0 -4h0m1 16h0m0 1h0m0 13h0m0 7h0m0 1h0m0 -2h0m1 -36h0m0 26h0m0 -19h0m0 -27h0m0 4h0m0 -10h0m0 57h0m1 -4h0m0 4h0m0 2h0m0 -36h0m0 18h0m0 4h0m0 1h0m1 -19h0m0 19h0m0 29h0m0 -13h0m0 8h0m0 -13h0m1 -11h0m0 27h0m0 -4h0m0 -16h0m0 6h0m0 2h0m1 9h0m0 -47h0m0 18h0m0 -16h0m0 -1h0m0 -5h0m1 0h0m0 -3h0m0 -3h0m0 -9h0m0 -22h0m1 18h0m0 -14h0m0 23h0m0 -35h0m0 13h0m0 8h0m1 -10h0m0 21h0m0 -28h0m0 45h0m0 -20h0m0 23h0m0 20h0m1 -18h0m0 4h0m0 13h0m0 18h0m0 -21h0m0 -22h0m1 29h0m0 19h0m0 -49h0m0 25h0m0 -16h0m0 11h0m0 -7h0m1 -5h0m0 -15h0m0 7h0m0 -27h0m0 16h0m0 26h0m1 -1h0m0 -27h0m0 -17h0m0 7h0m0 4h0m0 -15h0m0 19h0m1 2h0m0 -3h0m0 21h0m0 -6h0m0 5h0m0 -12h0m0 14h0m1 -2h0m0 -4h0m0 -35h0m0 66h0m0 5h0m0 11h0m0 9h0m1 -23h0m0 20h0m0 -21h0m0 -18h0m0 20h0m0 -28h0m1 37h0m0 -29h0m0 -29h0m0 -8h0m0 1h0m0 33h0m0 15h0m1 -43h0m0 -11h0m0 22h0m0 -23h0m0 29h0m0 43h0m0 18h0m1 -9h0m0 -8h0m0 -26h0m0 -27h0m0 -13h0m0 8h0m1 4h0m0 -3h0m0 -11h0m0 4h0m0 8h0m1 -7h0m0 -19h0m0 24h0m0 3h0m0 -4h0m0 19h0m1 12h0m0 -18h0m0 9h0m0 14h0m0 -11h0m0 23h0m0 -13h0m1 17h0m0 7h0m0 -14h0m0 9h0m0 -34h0m0 -14h0m1 -3h0m0 -19h0m0 16h0m0 -5h0m0 4h0m0 55h0m1 -17h0m0 -28h0m0 -7h0m0 1h0m0 -15h0m0 37h0m1 -4h0m0 -3h0m0 -21h0m0 -1h0m0 7h0m0 -3h0m0 25h0m1 -12h0m0 -10h0m0 4h0m0 -35h0m0 8h0m0 19h0m1 3h0m0 -17h0m0 16h0m0 21h0m0 7h0m0 10h0m1 19h0m0 -64h0m0 8h0m0 41h0m0 9h0m0 2h0m1 -6h0m0 -9h0m0 -43h0m0 16h0m0 18h0m0 31h0m0 -20h0m1 2h0m0 34h0m0 -26h0m0 11h0m0 -4h0m0 -14h0m0 34h0m1 -14h0m0 23h0m0 -12h0m0 6h0m0 -38h0m1 18h0m0 -9h0m0 -39h0m0 -17h0m0 3h0m0 -13h0m0 11h0m1 34h0m0 33h0m0 -21h0m0 7h0m0 -11h0m0 -54h0m1 13h0m0 -2h0m0 10h0m0 9h0m0 -23h0m0 30h0m0 4h0m1 -15h0m0 -9h0m0 13h0m0 -19h0m0 10h0m0 -3h0m1 8h0m0 11h0m0 -15h0m0 10h0m0 11h0m0 17h0m1 -19h0m0 -18h0m0 33h0m0 -8h0m0 25h0m0 5h0m0 -26h0m1 5h0m0 -13h0m0 -27h0m0 -3h0m0 19h0m0 32h0m0 5h0m1 -17h0m0 -20h0m0 40h0m0 -4h0m0 -25h0m0 12h0m1 7h0m0 -10h0m0 -10h0m0 5h0m0 -6h0m0 22h0m1 -7h0m0 24h0m0 -56h0m0 2h0m0 8h0m0 25h0m0 25h0m1 -2h0m0 -18h0m0 24h0m0 -13h0m0 -39h0m0 -16h0m0 26h0m1 -2h0m0 -12h0m0 22h0m0 9h0m0 -7h0m0 -13h0m1 33h0m0 -46h0m0 -17h0m0 -19h0m0 5h0m0 -1h0m0 -5h0m1 -1h0m0 18h0m0 12h0m0 -10h0m0 11h0m0 -28h0m0 -14h0m1 41h0m0 17h0m0 21h0m0 -22h0m0 4h0m0 -8h0m0 -2h0m1 -44h0m0 49h0m0 6h0m0 10h0m0 11h0m0 -24h0m1 23h0m0 -11h0m0 -10h0m0 19h0m0 3h0m0 14h0m0 -11h0m1 15h0m0 -21h0m0 -7h0m0 -19h0m0 14h0m0 29h0m1 -13h0m0 -41h0m0 26h0m0 4h0m0 -43h0m1 25h0m0 2h0m0 -8h0m0 9h0m0 26h0m0 -16h0m1 -20h0m0 -4h0m0 9h0m0 26h0m0 19h0m0 -17h0m0 11h0m1 11h0m0 -9h0m0 -7h0m0 -1h0m0 -17h0m0 2h0m1 -34h0m0 13h0m0 -6h0m0 50h0m0 -12h0m0 8h0m0 -1h0m1 -18h0m0 -10h0m0 -4h0m0 -14h0m0 4h0m1 7h0m0 16h0m0 1h0m0 23h0m0 -44h0m0 -5h0m0 8h0m1 14h0m0 5h0m0 -21h0m0 36h0m0 5h0m1 -22h0m0 1h0m0 4h0m0 -40h0m0 3h0m0 51h0m1 -54h0m0 9h0m0 -12h0m0 4h0m0 6h0m0 -11h0m1 16h0m0 5h0m0 4h0m0 -18h0m0 60h0m0 -33h0m1 42h0m0 -58h0m0 12h0m0 20h0m0 20h0m0 22h0m0 -31h0m1 4h0m0 -3h0m0 12h0m0 -34h0m0 4h0m0 5h0m1 -10h0m0 -15h0m0 -4h0m0 11h0m0 -3h0m0 25h0m1 9h0m0 -16h0m0 19h0m0 20h0m0 -43h0m0 16h0m0 24h0m1 -2h0m0 -17h0m0 25h0m0 -20h0m0 2h0m0 -54h0m0 34h0m1 18h0m0 -63h0m0 -4h0m0 -6h0m0 17h0m0 -2h0m1 17h0m0 36h0m0 1h0m0 -7h0m0 -1h0m0 5h0m1 -5h0m0 19h0m0 -11h0m0 8h0m0 -31h0m0 36h0m0 1h0m1 -21h0m0 -3h0m0 8h0m0 -61h0m0 -1h0m0 28h0m0 6h0m1 -4h0m0 -5h0m0 -37h0m0 19h0m0 -1h0m1 11h0m0 -3h0m0 1h0m0 -27h0m0 16h0m0 24h0m0 -10h0m1 -16h0m0 1h0m0 20h0m0 -14h0m0 -35h0m1 33h0m0 6h0m0 -25h0m0 20h0m0 1h0m0 14h0m0 -20h0m1 -8h0m0 -15h0m0 9h0m0 1h0m0 13h0m0 14h0m1 12h0m0 41h0m0 -25h0m0 -46h0m0 39h0m0 -35h0m0 7h0m1 -22h0m0 2h0m0 5h0m0 2h0m0 47h0m0 -10h0m0 -4h0m1 -9h0m0 29h0m0 -1h0m0 -46h0m0 19h0m0 -8h0m0 -13h0m1 10h0m0 11h0m0 -22h0m0 -1h0m0 -8h0m0 7h0m1 -1h0m0 -8h0m0 9h0m0 -2h0m0 10h0m0 -15h0m0 8h0m1 11h0m0 -22h0m0 7h0m0 -9h0m0 18h0m0 22h0m0 2h0m1 -21h0m0 15h0m0 25h0m0 -7h0m0 32h0m0 -23h0m0 3h0m1 -27h0m0 -32h0m0 21h0m0 43h0m0 -12h0m0 7h0m1 -16h0m0 -2h0m0 5h0m0 -24h0m0 9h0m0 -3h0m0 39h0m1 -22h0m0 20h0m0 -16h0m0 -8h0m0 1h0m0 -9h0m0 -5h0m1 -15h0m0 8h0m0 -4h0m0 33h0m0 -26h0m0 35h0m0 7h0m1 -24h0m0 -40h0m0 41h0m0 1h0m0 11h0m0 -23h0m1 -7h0m0 25h0m0 -31h0m0 24h0m0 -35h0m0 15h0m1 -27h0m0 40h0m0 -36h0m0 29h0m0 -25h0m0 -6h0m1 4h0m0 6h0m0 3h0m0 -6h0m0 15h0m0 34h0m0 -12h0m1 -7h0m0 20h0m0 -31h0m0 12h0m0 12h0m0 8h0m1 -16h0m0 11h0m0 -28h0m0 4h0m0 29h0m1 29h0m0 -12h0m0 -15h0m0 -30h0m0 -11h0m0 -18h0m0 39h0m1 -2h0m0 -4h0m0 15h0m0 -5h0m0 18h0m0 -2h0m0 -18h0m1 -25h0m0 33h0m0 18h0m0 9h0m0 14h0m0 -35h0m1 15h0m0 -56h0m0 -7h0m0 -3h0m0 4h0m0 31h0m0 2h0m1 -12h0m0 -23h0m0 21h0m0 -24h0m0 20h0m0 -15h0m1 25h0m0 -2h0m0 -7h0m0 -22h0m0 26h0m0 30h0m0 -20h0m1 -34h0m0 14h0m0 -9h0m0 2h0m0 -4h0m0 6h0m1 3h0m0 -10h0m0 23h0m0 -21h0m0 -6h0m0 -3h0m1 0h0m0 -16h0m0 45h0m0 23h0m0 -45h0m0 7h0m0 10h0m1 8h0m0 -14h0m0 -26h0m0 1h0m0 35h0m0 3h0m0 3h0m1 -4h0m0 -23h0m0 15h0m0 -19h0m0 9h0m0 -14h0m1 5h0m0 8h0m0 -7h0m0 -11h0m0 34h0m0 -7h0m0 -30h0m1 27h0m0 28h0m0 -43h0m0 12h0m0 36h0m1 -24h0m0 27h0m0 -32h0m0 -7h0m0 1h0m0 -36h0m0 11h0m1 -7h0m0 19h0m0 2h0m0 20h0m0 28h0m0 -29h0m1 22h0m0 13h0m0 2h0m0 9h0m0 -23h0m0 22h0m1 -7h0m0 -23h0m0 35h0m0 -13h0m0 24h0m0 -50h0m0 20h0m1 16h0m0 -23h0m0 16h0m0 -20h0m0 17h0m0 -7h0m1 -15h0m0 -20h0m0 -9h0m0 10h0m0 20h0m0 -9h0m0 1h0m1 3h0m0 6h0m0 -3h0m0 24h0m0 13h0m0 5h0m1 0h0m0 8h0m0 -11h0m0 -10h0m0 -35h0m0 -9h0m1 20h0m0 -5h0m0 39h0m0 -12h0m0 10h0m0 -7h0m1 6h0m0 -9h0m0 -18h0m0 -11h0m0 17h0m0 -32h0m0 -2h0m1 47h0m0 -30h0m0 40h0m0 8h0m0 -17h0m0 -27h0m0 29h0m1 -24h0m0 18h0m0 -25h0m0 9h0m0 -23h0m0 8h0m0 40h0m1 -73h0m0 18h0m0 35h0m0 3h0m0 9h0m0 -15h0m1 -33h0m0 11h0m0 26h0m0 -30h0m0 -14h0m0 29h0m1 -34h0m0 65h0m0 -14h0m0 18h0m0 -50h0m0 -5h0m0 63h0m1 7h0m0 -14h0m0 22h0m0 -32h0m0 -18h0m0 32h0m0 -9h0m1 -1h0m0 6h0m0 -7h0m0 2h0m0 10h0m0 4h0m1 -12h0m0 -6h0m0 18h0m0 5h0m0 -22h0m0 -4h0m0 16h0m1 -3h0m0 -10h0m0 8h0m0 -22h0m0 9h0m0 10h0m0 6h0m1 6h0m0 1h0m0 -50h0m0 3h0m0 -9h0m0 -28h0m0 39h0m1 3h0m0 5h0m0 -19h0m0 42h0m0 -19h0m0 20h0m1 -51h0m0 30h0m0 36h0m0 -11h0m0 1h0m0 -12h0m0 -13h0m1 -16h0m0 -21h0m0 3h0m0 21h0m0 13h0m0 9h0m0 -5h0m1 -23h0m0 -2h0m0 -30h0m0 13h0m0 13h0m0 24h0m0 -22h0m1 20h0m0 -5h0m0 3h0m0 23h0m0 -11h0m0 24h0m1 -10h0m0 -14h0m0 -10h0m0 -13h0m0 42h0m0 -3h0m0 -7h0m1 -38h0m0 -2h0m0 -22h0m0 6h0m0 11h0m0 16h0m1 36h0m0 -22h0m0 37h0m0 -6h0m0 -18h0m0 -5h0m0 -26h0m1 30h0m0 2h0m0 -26h0m0 11h0m0 6h0m0 23h0m1 -27h0m0 -4h0m0 7h0m0 -5h0m0 17h0m0 10h0m0 -30h0m1 26h0m0 -33h0m0 23h0m0 1h0m0 15h0m0 -13h0m0 6h0m1 -12h0m0 -4h0m0 -19h0m0 -2h0m0 13h0m0 -26h0m0 56h0m1 -28h0m0 -11h0m0 -6h0m0 20h0m0 4h0m1 -6h0m0 2h0m0 -25h0m0 10h0m0 10h0m0 -19h0m1 17h0m0 16h0m0 1h0m0 -36h0m0 37h0m0 -14h0m1 29h0m0 -6h0m0 8h0m0 1h0m0 -6h0m0 -13h0m0 4h0m1 1h0m0 -38h0m0 15h0m0 -29h0m0 34h0m0 24h0m1 -9h0m0 -23h0m0 25h0m0 -13h0m0 9h0m0 24h0m0 -32h0m1 -9h0m0 6h0m0 11h0m0 14h0m0 -20h0m0 10h0m0 -39h0m1 -26h0m0 2h0m0 -15h0m0 32h0m0 -23h0m0 22h0m0 12h0m1 20h0m0 -43h0m0 -8h0m0 40h0m0 45h0m0 -13h0m1 11h0m0 -1h0m0 -11h0m0 -3h0m0 22h0m0 -18h0m0 -10h0m1 1h0m0 16h0m0 -8h0m0 -33h0m0 10h0m0 12h0m0 -20h0m1 39h0m0 5h0m0 -31h0m0 -35h0m0 58h0m0 -16h0m0 -10h0m1 -14h0m0 16h0m0 -25h0m0 6h0m0 11h0m0 15h0m1 0h0m0 7h0m0 12h0m0 -24h0m0 9h0m0 19h0m1 -22h0m0 21h0m0 -11h0m0 -15h0m0 -29h0m0 -9h0m0 -1h0m1 -12h0m0 7h0m0 -12h0m0 22h0m0 -11h0m0 29h0m0 3h0m1 -8h0m0 6h0m0 -2h0m0 -2h0m0 -22h0m0 14h0m1 9h0m0 21h0m0 -25h0m0 13h0m0 40h0m0 -4h0m0 16h0m1 -31h0m0 8h0m0 -19h0m0 26h0m0 -24h0m0 -26h0m0 3h0m1 -16h0m0 -16h0m0 7h0m0 17h0m0 -1h0m0 10h0m0 -29h0m1 11h0m0 43h0m0 9h0m0 -29h0m0 18h0m0 -14h0m1 33h0m0 -31h0m0 -29h0m0 20h0m0 -4h0m0 -6h0m0 -7h0m1 -3h0m0 19h0m0 -15h0m0 21h0m0 30h0m0 -5h0m0 -30h0m1 -12h0m0 -8h0m0 -22h0m0 11h0m0 4h0m0 22h0m1 16h0m0 13h0m0 -45h0m0 20h0m0 30h0m0 16h0m1 -30h0m0 -15h0m0 -33h0m0 14h0m0 25h0m0 -2h0m0 14h0m1 -32h0m0 16h0m0 -8h0m0 11h0m0 -25h0m0 -1h0m0 52h0m1 -24h0m0 -6h0m0 -7h0m0 -13h0m0 51h0m0 -2h0m1 -29h0m0 -20h0m0 36h0m0 -11h0m0 -19h0m0 24h0m0 1h0m1 23h0m0 25h0m0 -5h0m0 -38h0m0 25h0m0 -6h0m1 -9h0m0 47h0m0 -37h0m0 -1h0m0 22h0m0 -24h0m0 -4h0m1 11h0m0 -20h0m0 -31h0m0 3h0m0 -6h0m0 -6h0m1 10h0m0 -8h0m0 -3h0m0 29h0m0 -14h0m0 -22h0m0 21h0m1 43h0m0 -16h0m0 26h0m0 -17h0m0 25h0m0 -16h0m0 -33h0m1 -23h0m0 8h0m0 -25h0m0 5h0m0 -4h0m1 16h0m0 3h0m0 -30h0m0 -5h0m0 -4h0m0 35h0m1 64h0m0 -35h0m0 12h0m0 -13h0m0 -5h0m0 -12h0m0 35h0m1 -19h0m0 -35h0m0 5h0m0 -25h0m0 -1h0m0 36h0m0 -4h0m1 1h0m0 -23h0m0 2h0m0 19h0m0 -3h0m0 1h0m0 17h0m1 -27h0m0 3h0m0 -22h0m0 55h0m0 30h0m0 -35h0m1 7h0m0 -1h0m0 15h0m0 -17h0m0 -38h0m0 3h0m1 -19h0m0 5h0m0 27h0m0 -6h0m0 -3h0m0 -3h0m0 5h0m1 10h0m0 -37h0m0 18h0m0 32h0m0 -17h0m0 3h0m0 -7h0m1 -5h0m0 -1h0m0 -1h0m0 -20h0m0 2h0m0 14h0m1 8h0m0 -12h0m0 -7h0m0 3h0m0 12h0m0 16h0m1 -19h0m0 -10h0m0 11h0m0 3h0m0 -33h0m0 10h0m0 16h0m1 -2h0m0 32h0m0 -17h0m0 7h0m0 -12h0m0 -11h0m0 10h0m1 6h0m0 16h0m0 -11h0m0 -10h0m0 16h0m1 19h0m0 -11h0m0 -3h0m0 -19h0m0 8h0m0 -23h0m0 -2h0m1 -12h0m0 24h0m0 -4h0m0 8h0m0 19h0m0 -4h0m0 17h0m1 8h0m0 -10h0m0 -9h0m0 -3h0m0 34h0m0 -20h0m0 7h0m1 14h0m0 24h0m0 -31h0m0 -16h0m0 -15h0m0 -10h0m1 -5h0m0 -29h0m0 36h0m0 -16h0m0 7h0m0 12h0m0 14h0m1 -21h0m0 -12h0m0 25h0m0 8h0m0 -17h0m0 -6h0m1 11h0m0 -19h0m0 23h0m0 -38h0m0 45h0m0 2h0m1 -35h0m0 2h0m0 -16h0m0 -1h0m0 20h0m1 3h0m0 10h0m0 17h0m0 -9h0m0 -17h0m0 -26h0m0 19h0m1 -13h0m0 30h0m0 6h0m0 -21h0m0 4h0m0 20h0m0 16h0m1 -10h0m0 -9h0m0 -11h0m0 -21h0m0 4h0m0 39h0m0 -30h0m1 -3h0m0 30h0m0 45h0m0 -27h0m0 -55h0m1 31h0m0 -11h0m0 25h0m0 -9h0m0 14h0m0 -8h0m1 -12h0m0 -29h0m0 37h0m0 -1h0m0 -12h0m0 -10h0m0 7h0m1 -3h0m0 -11h0m0 31h0m0 24h0m0 -30h0m0 -33h0m1 21h0m0 -8h0m0 14h0m0 -20h0m0 2h0m1 2h0m0 9h0m0 7h0m0 -15h0m0 31h0m0 -11h0m0 -31h0m1 19h0m0 -17h0m0 -11h0m0 22h0m0 -5h0m0 -3h0m0 2h0m1 47h0m0 4h0m0 3h0m0 -35h0m0 -12h0m0 2h0m1 -25h0m0 52h0m0 -10h0m0 11h0m0 34h0m0 -13h0m1 10h0m0 8h0m0 -21h0m0 -36h0m0 -5h0m0 34h0m1 18h0m0 -27h0m0 40h0m0 -21h0m0 -45h0m0 21h0m0 -19h0m1 44h0m0 -42h0m0 -27h0m0 30h0m0 30h0m0 -13h0m0 -49h0m1 19h0m0 -10h0m0 -6h0m0 29h0m0 -36h0m0 31h0m1 -5h0m0 10h0m0 10h0m0 -32h0m0 26h0m0 -3h0m0 24h0m1 -23h0m0 -8h0m0 13h0m0 -4h0m0 -27h0m0 12h0m0 13h0m1 -12h0m0 3h0m0 14h0m0 -23h0m0 -2h0m0 17h0m0 -13h0m1 -27h0m0 27h0m0 41h0m0 -8h0m0 3h0m0 -33h0m1 56h0m0 -14h0m0 -16h0m0 -23h0m0 45h0m0 7h0m1 -25h0m0 27h0m0 -12h0m0 11h0m0 -9h0m0 1h0m0 -2h0m1 -21h0m0 10h0m0 -37h0m0 -11h0m0 4h0m0 -2h0m0 7h0m1 16h0m0 32h0m0 -9h0m0 10h0m0 3h0m0 16h0m1 -55h0m0 -27h0m0 3h0m0 55h0m0 -6h0m0 -2h0m0 22h0m1 -9h0m0 20h0m0 -7h0m0 17h0m0 -41h0m1 29h0m0 -9h0m0 -17h0m0 -18h0m0 -23h0m1 54h0m0 -7h0m0 -38h0m0 18h0m0 13h0m0 -1h0m0 -15h0m1 -26h0m0 6h0m0 6h0m0 -14h0m0 -8h0m0 26h0m0 -6h0m1 1h0m0 5h0m0 -12h0m0 11h0m0 36h0m1 -37h0m0 -9h0m0 14h0m0 4h0m0 -3h0m0 -5h0m1 26h0m0 -20h0m0 19h0m0 -17h0m0 24h0m0 -1h0m0 3h0m1 10h0m0 -17h0m0 31h0m0 -13h0m0 -9h0m0 -1h0m1 21h0m0 -1h0m0 -15h0m0 -7h0m0 12h0m0 -15h0m0 11h0m1 -28h0m0 5h0m0 -18h0m0 23h0m0 22h0m0 2h0m1 -12h0m0 -6h0m0 10h0m0 -21h0m0 23h0m0 -20h0m0 -4h0m1 -13h0m0 1h0m0 -3h0m0 20h0m0 -6h0m0 -37h0m0 -12h0m1 31h0m0 -28h0m0 19h0m0 12h0m0 -5h0m0 -15h0m0 14h0m1 -5h0m0 21h0m0 -17h0m0 15h0m0 33h0m0 17h0m1 -44h0m0 -24h0m0 -19h0m0 36h0m0 31h0m0 22h0m1 -32h0m0 17h0m0 14h0m0 3h0m0 -27h0m0 8h0m1 -26h0m0 3h0m0 28h0m0 -7h0m0 -43h0m0 -29h0m0 9h0m1 22h0m0 -11h0m0 -6h0m0 12h0m0 10h0m0 26h0m1 25h0m0 -39h0m0 33h0m0 -17h0m0 -33h0m0 49h0m0 -28h0m1 -28h0m0 -19h0m0 10h0m0 -9h0m0 19h0m0 17h0m1 -27h0m0 10h0m0 -6h0m0 -2h0m0 15h0m0 -3h0m1 -2h0m0 -13h0m0 -4h0m0 2h0m0 -5h0m0 10h0m1 3h0m0 6h0m0 -18h0m0 11h0m0 -2h0m0 12h0m0 27h0m1 7h0m0 10h0m0 14h0m0 -51h0m0 1h0m0 8h0m1 -13h0m0 -15h0m0 8h0m0 -10h0m0 33h0m0 16h0m1 -14h0m0 31h0m0 15h0m0 -25h0m0 -12h0m1 -32h0m0 2h0m0 -13h0m0 4h0m0 1h0m0 17h0m1 10h0m0 -10h0m0 4h0m0 -16h0m0 2h0m1 25h0m0 35h0m0 -10h0m0 -23h0m0 -14h0m0 44h0m0 -25h0m1 -25h0m0 -10h0m0 -2h0m0 -5h0m0 24h0m0 -47h0m1 22h0m0 12h0m0 -20h0m0 -12h0m0 8h0m0 -1h0m0 17h0m1 -19h0m0 12h0m0 -6h0m0 3h0m0 -10h0m0 21h0m0 -18h0m1 6h0m0 5h0m0 22h0m0 -10h0m0 7h0m0 -23h0m0 2h0m1 20h0m0 5h0m0 -28h0m0 12h0m0 -4h0m0 1h0m1 -27h0m0 17h0m0 9h0m0 8h0m0 -13h0m0 -8h0m0 11h0m1 34h0m0 -12h0m0 -19h0m0 -20h0m0 5h0m0 -10h0m0 28h0m1 12h0m0 -28h0m0 -7h0m0 14h0m0 -1h0m0 -14h0m0 29h0m1 -6h0m0 -11h0m0 25h0m0 -18h0m0 21h0m0 -30h0m1 6h0m0 -6h0m0 16h0m0 -6h0m0 14h0m0 -47h0m0 22h0m1 4h0m0 -14h0m0 -4h0m0 8h0m0 4h0m0 18h0m0 -43h0m1 22h0m0 8h0m0 -1h0m0 25h0m0 -20h0m0 -18h0m0 3h0m1 50h0m0 34h0m0 -16h0m0 -17h0m0 10h0m1 -30h0m0 -18h0m0 47h0m0 -40h0m0 21h0m0 -1h0m0 -23h0m1 13h0m0 -12h0m0 17h0m0 35h0m0 -27h0m0 -5h0m1 22h0m0 -41h0m0 36h0m0 8h0m0 22h0m0 -17h0m0 -3h0m1 -8h0m0 -31h0m0 33h0m0 7h0m0 -11h0m0 12h0m1 -5h0m0 22h0m0 2h0m0 16h0m0 -24h0m0 16h0m0 -7h0m1 -22h0m0 -26h0m0 -12h0m0 -12h0m0 19h0m0 -11h0m1 15h0m0 16h0m0 -22h0m0 43h0m0 23h0m0 -33h0m0 -23h0m1 37h0m0 -22h0m0 14h0m0 -11h0m0 10h0m0 11h0m1 -10h0m0 -56h0m0 7h0m0 12h0m0 5h0m0 -28h0m1 25h0m0 -12h0m0 18h0m0 -9h0m0 12h0m0 3h0m1 -33h0m0 25h0m0 4h0m0 -23h0m0 5h0m0 7h0m0 -26h0m1 -6h0m0 24h0m0 -5h0m0 16h0m0 11h0m0 17h0m1 20h0m0 -42h0m0 9h0m0 7h0m0 20h0m0 -12h0m1 33h0m0 2h0m0 -14h0m0 3h0m0 -12h0m0 18h0m1 -21h0m0 8h0m0 -22h0m0 11h0m0 -3h0m0 -24h0m1 6h0m0 -32h0m0 16h0m0 9h0m0 11h0m0 -37h0m0 -18h0m1 15h0m0 -16h0m0 4h0m0 24h0m0 -7h0m0 4h0m1 -10h0m0 17h0m0 -9h0m0 -7h0m0 -14h0m0 11h0m0 9h0m1 -9h0m0 18h0m0 -30h0m0 41h0m0 -16h0m1 -10h0m0 -6h0m0 23h0m0 -22h0m0 11h0m0 -19h0m1 32h0m0 29h0m0 3h0m0 -39h0m0 -1h0m0 6h0m1 29h0m0 7h0m0 10h0m0 -14h0m0 -50h0m0 48h0m0 -8h0m1 20h0m0 7h0m0 -16h0m0 -17h0m0 8h0m0 5h0m1 -20h0m0 7h0m0 -11h0m0 14h0m0 44h0m0 -24h0m0 -9h0m1 -20h0m0 -22h0m0 -3h0m0 21h0m0 36h0m0 -16h0m1 -23h0m0 28h0m0 9h0m0 -55h0m0 -2h0m0 14h0m0 18h0m1 -3h0m0 5h0m0 28h0m0 -21h0m0 9h0m0 -37h0m1 4h0m0 -1h0m0 -9h0m0 -14h0m0 20h0m0 -10h0m0 -9h0m1 13h0m0 40h0m0 37h0m0 -32h0m0 16h0m0 -28h0m0 16h0m1 -8h0m0 29h0m0 -7h0m0 -47h0m0 -1h0m0 21h0m0 -17h0m1 15h0m0 -16h0m0 -13h0m0 -4h0m0 20h0m0 -9h0m1 -13h0m0 29h0m0 21h0m0 -5h0m0 -11h0m0 6h0m0 12h0m1 -42h0m0 -6h0m0 42h0m0 -5h0m0 2h0m0 -8h0m1 3h0m0 -24h0m0 -15h0m0 7h0m0 -11h0m0 -14h0m0 49h0m1 -30h0m0 -7h0m0 30h0m0 -17h0m0 -7h0m0 28h0m1 -6h0m0 22h0m0 -18h0m0 9h0m0 4h0m0 -28h0m1 14h0m0 -41h0m0 -6h0m0 39h0m0 -17h0m0 6h0m0 24h0m1 22h0m0 -3h0m0 -3h0m0 36h0m0 -43h0m0 30h0m0 -13h0m1 16h0m0 -17h0m0 4h0m0 -19h0m0 -15h0m0 -37h0m1 27h0m0 17h0m0 -7h0m0 38h0m0 -23h0m0 18h0m1 4h0m0 -14h0m0 -5h0m0 -6h0m0 -1h0m0 2h0m1 -7h0m0 14h0m0 28h0m0 -11h0m0 6h0m0 -5h0m0 -4h0m1 13h0m0 1h0m0 -25h0m0 10h0m0 -11h0m0 -1h0m1 8h0m0 -11h0m0 -11h0m0 9h0m0 -14h0m0 4h0m1 16h0m0 -23h0m0 9h0m0 3h0m0 -5h0m0 -3h0m0 2h0m1 -36h0m0 22h0m0 42h0m0 -8h0m0 23h0m0 4h0m0 -9h0m1 -13h0m0 -34h0m0 8h0m0 29h0m0 -9h0m1 13h0m0 -11h0m0 9h0m0 -32h0m0 50h0m0 -23h0m0 21h0m1 -13h0m0 -2h0m0 1h0m0 8h0m0 -5h0m0 -9h0m1 10h0m0 -9h0m0 -7h0m0 -44h0m0 19h0m0 -12h0m0 -11h0m1 24h0m0 -31h0m0 20h0m0 41h0m0 -13h0m0 10h0m1 7h0m0 -42h0m0 44h0m0 5h0m0 7h0m0 -8h0m0 -10h0m1 -5h0m0 -16h0m0 4h0m0 7h0m0 -14h0m0 40h0m1 1h0m0 -22h0m0 -16h0m0 6h0m0 1h0m0 -15h0m1 19h0m0 -26h0m0 -23h0m0 14h0m0 28h0m0 -31h0m1 -12h0m0 25h0m0 4h0m0 7h0m0 -1h0m0 7h0m0 -15h0m1 -6h0m0 -9h0m0 26h0m0 -19h0m0 15h0m0 2h0m0 -9h0m1 2h0m0 1h0m0 35h0m0 -26h0m0 -8h0m0 10h0m0 -23h0m1 9h0m0 21h0m0 -18h0m0 6h0m0 -13h0m0 -5h0m1 22h0m0 -4h0m0 7h0m0 42h0m0 -20h0m0 19h0m1 -84h0m0 20h0m0 -10h0m0 14h0m1 12h0m0 -17h0m0 -10h0m0 15h0m0 -14h0m0 -16h0m0 12h0m1 -8h0m0 16h0m0 25h0m0 28h0m0 -36h0m1 -34h0m0 11h0m0 -25h0m0 29h0m0 -11h0m0 16h0m1 3h0m0 46h0m0 -6h0m0 -7h0m0 -5h0m0 13h0m0 -5h0m1 11h0m0 -23h0m0 14h0m0 -4h0m0 7h0m0 14h0m1 -53h0m0 3h0m0 17h0m0 25h0m0 -8h0m0 -39h0m0 18h0m1 -5h0m0 -2h0m0 -7h0m0 -21h0m0 -1h0m0 44h0m0 17h0m1 -21h0m0 20h0m0 -22h0m0 -20h0m0 1h0m0 12h0m0 -22h0m1 46h0m0 -17h0m0 12h0m0 -28h0m0 -14h0m0 9h0m1 8h0m0 -18h0m0 28h0m0 12h0m0 -44h0m1 28h0m0 -20h0m0 -37h0m0 -2h0m0 9h0m0 -12h0m1 11h0m0 -2h0m0 48h0m0 4h0m0 -42h0m0 -20h0m1 16h0m0 13h0m0 14h0m0 2h0m0 34h0m0 -17h0m1 17h0m0 6h0m0 5h0m0 14h0m0 -12h0m0 -22h0m1 -13h0m0 -12h0m0 17h0m0 23h0m0 -37h0m0 44h0m0 -6h0m1 -4h0m0 12h0m0 -8h0m0 -9h0m0 6h0m0 -21h0m0 -11h0m1 -10h0m0 21h0m0 -42h0m0 -2h0m0 15h0m0 15h0m1 3h0m0 -3h0m0 26h0m0 -10h0m0 12h0m0 15h0m0 -20h0m1 -8h0m0 -4h0m0 -7h0m0 25h0m0 -37h0m0 48h0m1 -1h0m0 2h0m0 -9h0m0 -17h0m0 8h0m0 -4h0m0 31h0m1 -17h0m0 -47h0m0 12h0m0 4h0m0 17h0m0 -15h0m1 6h0m0 14h0m0 9h0m0 -29h0m0 25h0m0 -8h0m1 25h0m0 -32h0m0 10h0m0 9h0m0 -53h0m0 43h0m0 -35h0m1 15h0m0 -25h0m0 42h0m0 -32h0m0 3h0m0 8h0m0 16h0m1 6h0m0 33h0m0 -10h0m0 -28h0m0 15h0m0 -8h0m1 -14h0m0 3h0m0 24h0m0 -40h0m0 3h0m0 4h0m0 19h0m1 -6h0m0 -31h0m0 11h0m0 -2h0m0 -6h0m0 18h0m0 -26h0m1 40h0m0 -6h0m0 -12h0m0 28h0m0 -43h0m0 11h0m0 23h0m1 -3h0m0 -12h0m0 20h0m0 -3h0m0 6h0m1 -17h0m0 24h0m0 11h0m0 -4h0m0 -22h0m0 10h0m0 25h0m1 -21h0m0 -8h0m0 15h0m0 16h0m0 -32h0m0 34h0m0 -28h0m1 0h0m0 -6h0m0 12h0m0 -7h0m0 -14h0m0 13h0m0 -3h0m1 8h0m0 22h0m0 3h0m0 -17h0m0 -15h0m0 42h0m1 -20h0m0 -9h0m0 17h0m0 -13h0m0 -14h0m0 26h0m0 -48h0m1 -7h0m0 16h0m0 -10h0m0 -14h0m0 33h0m1 -19h0m0 -6h0m0 2h0m0 -7h0m0 1h0m0 39h0m0 15h0m1 7h0m0 -25h0m0 27h0m0 -23h0m0 9h0m0 -5h0m1 -22h0m0 16h0m0 -12h0m0 1h0m0 21h0m0 -12h0m0 -12h0m1 2h0m0 -10h0m0 -13h0m0 18h0m0 10h0m0 -3h0m0 20h0m1 -15h0m0 22h0m0 2h0m0 -25h0m0 31h0m0 -19h0m0 32h0m1 -28h0m0 2h0m0 -8h0m0 -24h0m0 -14h0m0 2h0m1 11h0m0 -45h0m0 8h0m0 19h0m0 -8h0m0 3h0m0 -11h0m1 -8h0m0 -2h0m0 13h0m0 4h0m0 28h0m0 -7h0m0 -31h0m1 39h0m0 -6h0m0 29h0m0 -1h0m0 -5h0m0 -21h0m0 20h0m1 4h0m0 -8h0m0 3h0m0 -14h0m0 10h0m0 -4h0m1 12h0m0 -13h0m0 -37h0m0 12h0m0 6h0m0 -29h0m0 -10h0m1 41h0m0 -10h0m0 34h0m0 -42h0m0 -9h0m0 46h0m1 18h0m0 -39h0m0 -15h0m0 13h0m0 24h0m0 5h0m0 -40h0m1 6h0m0 5h0m0 9h0m0 -1h0m0 3h0m1 19h0m0 -25h0m0 -2h0m0 1h0m0 12h0m0 -21h0m0 15h0m1 -15h0m0 12h0m0 36h0m0 -16h0m0 18h0m1 -4h0m0 -20h0m0 -11h0m0 -14h0m0 27h0m0 25h0m0 -28h0m1 22h0m0 -15h0m0 17h0m0 1h0m0 -12h0m1 -2h0m0 -4h0m0 -6h0m0 -23h0m0 19h0m0 -1h0m0 19h0m1 -24h0m0 -20h0m0 -20h0m0 23h0m0 -7h0m0 26h0m0 25h0m1 15h0m0 -14h0m0 -24h0m0 -6h0m0 13h0m0 35h0m0 -27h0m1 -17h0m0 13h0m0 -19h0m0 11h0m0 -23h0m0 16h0m1 0h0m0 -7h0m0 34h0m0 9h0m0 -20h0m0 -20h0m0 8h0m1 -13h0m0 7h0m0 2h0m0 -33h0m0 29h0m0 7h0m0 -16h0m1 10h0m0 29h0m0 -30h0m0 -25h0m0 21h0m0 39h0m1 -62h0m0 6h0m0 43h0m0 -10h0m0 5h0m1 16h0m0 5h0m0 23h0m0 -15h0m0 -22h0m0 16h0m0 -32h0m1 9h0m0 -19h0m0 -13h0m0 -1h0m0 -23h0m0 30h0m0 12h0m1 -5h0m0 -9h0m0 14h0m0 15h0m0 5h0m0 -7h0m1 22h0m0 8h0m0 9h0m0 -42h0m0 -10h0m0 -14h0m0 29h0m1 -23h0m0 48h0m0 -6h0m0 3h0m0 -5h0m0 -25h0m0 -4h0m1 17h0m0 2h0m0 -24h0m0 31h0m0 10h0m0 -48h0m1 72h0m0 -16h0m0 -29h0m0 -4h0m0 -5h0m0 -22h0m1 10h0m0 28h0m0 1h0m0 13h0m0 -5h0m0 -15h0m0 -17h0m1 -5h0m0 -31h0m0 26h0m0 38h0m0 -18h0m0 1h0m0 -9h0m1 -11h0m0 -7h0m0 52h0m0 7h0m0 -16h0m0 -7h0m0 11h0m1 9h0m0 -5h0m0 -6h0m0 -34h0m0 50h0m0 -19h0m1 -30h0m0 33h0m0 3h0m0 14h0m0 -57h0m0 36h0m0 -28h0m1 43h0m0 -6h0m0 -20h0m0 17h0m0 -13h0m0 -17h0m0 -36h0m1 25h0m0 26h0m0 -40h0m0 -18h0m0 7h0m0 28h0m1 -3h0m0 6h0m0 13h0m0 -43h0m0 53h0m0 -13h0m1 6h0m0 -1h0m0 -26h0m0 16h0m0 -5h0m0 -29h0m0 -9h0m1 19h0m0 20h0m0 12h0m0 4h0m0 15h0m0 21h0m1 -29h0m0 -1h0m0 17h0m0 5h0m0 9h0m0 -26h0m1 -10h0m0 -28h0m0 9h0m0 27h0m0 18h0m1 -15h0m0 31h0m0 -28h0m0 -27h0m0 7h0m0 -12h0m0 -3h0m1 -6h0m0 -15h0m0 -3h0m0 60h0m0 5h0m0 -42h0m0 -1h0m1 -18h0m0 -7h0m0 -16h0m0 -1h0m0 13h0m0 -24h0m0 45h0m1 -7h0m0 5h0m0 11h0m0 -28h0m0 49h0m0 -12h0m1 12h0m0 -33h0m0 32h0m0 -15h0m0 9h0m0 -41h0m0 8h0m1 38h0m0 3h0m0 -1h0m0 -5h0m0 23h0m0 -39h0m0 29h0m1 -1h0m0 1h0m0 5h0m0 4h0m0 6h0m0 -8h0m0 6h0m1 -4h0m0 4h0m0 6h0m0 -13h0m0 -15h0m1 3h0m0 1h0m0 -6h0m0 -10h0m0 5h0m0 -26h0m0 -5h0m1 11h0m0 26h0m0 -8h0m0 -12h0m0 -11h0m0 -14h0m0 8h0m1 6h0m0 -13h0m0 20h0m0 -12h0m0 20h0m0 -23h0m0 57h0m1 1h0m0 -5h0m0 17h0m0 -5h0m0 -16h0m0 -7h0m1 -15h0m0 25h0m0 36h0m0 -39h0m0 -32h0m0 -7h0m0 -17h0m1 6h0m0 16h0m0 36h0m0 9h0m0 -35h0m0 -13h0m0 27h0m1 -46h0m0 14h0m0 -2h0m0 17h0m0 48h0m0 -12h0m0 -11h0m1 0h0m0 -4h0m0 -15h0m0 37h0m0 17h0m0 -23h0m1 5h0m0 -12h0m0 13h0m0 -2h0m0 22h0m0 -15h0m0 -1h0m1 -1h0m0 -18h0m0 -5h0m0 16h0m0 28h0m0 -15h0m0 -33h0m1 -4h0m0 -7h0m0 14h0m0 19h0m0 -2h0m0 -25h0m0 23h0m1 -18h0m0 -30h0m0 7h0m0 -35h0m0 23h0m0 8h0m1 1h0m0 60h0m0 -35h0m0 -30h0m0 52h0m0 -9h0m0 10h0m1 3h0m0 -4h0m0 1h0m0 -12h0m0 22h0m0 -24h0m0 -22h0m1 22h0m0 19h0m0 1h0m0 4h0m0 -17h0m0 -9h0m0 -17h0m1 -6h0m0 30h0m0 16h0m0 -6h0m0 -9h0m0 7h0m1 12h0m0 -15h0m0 -1h0m0 -10h0m0 -6h0m0 -17h0m0 -29h0m1 11h0m0 -33h0m0 10h0m0 29h0m0 -12h0m0 17h0m1 -3h0m0 7h0m0 -41h0m0 23h0m0 -15h0m0 13h0m0 -6h0m1 26h0m0 16h0m0 6h0m0 19h0m0 -14h0m0 -15h0m1 27h0m0 -45h0m0 -3h0m0 -17h0m0 28h0m0 -9h0m0 13h0m1 -23h0m0 -5h0m0 -14h0m0 4h0m0 2h0m0 1h0m1 13h0m0 3h0m0 -6h0m0 1h0m0 24h0m0 18h0m0 7h0m1 -28h0m0 -41h0m0 38h0m0 -6h0m0 -49h0m1 30h0m0 6h0m0 -11h0m0 50h0m0 -17h0m0 -10h0m0 28h0m1 3h0m0 7h0m0 -20h0m0 -20h0m0 26h0m0 -22h0m1 20h0m0 29h0m0 7h0m0 -8h0m0 11h0m0 -37h0m1 -6h0m0 9h0m0 1h0m0 12h0m0 16h0m0 -20h0m1 5h0m0 -15h0m0 3h0m0 4h0m0 -15h0m0 -12h0m0 10h0m1 -9h0m0 -26h0m0 17h0m0 -22h0m0 8h0m0 32h0m1 9h0m0 6h0m0 -9h0m0 31h0m0 -26h0m0 32h0m1 -19h0m0 34h0m0 -27h0m0 -24h0m0 13h0m0 7h0m0 -33h0m1 21h0m0 -10h0m0 -7h0m0 32h0m0 -34h0m0 -16h0m0 37h0m1 -15h0m0 28h0m0 -11h0m0 8h0m0 35h0m0 -16h0m0 -20h0m1 -46h0m0 4h0m0 32h0m0 -42h0m0 46h0m0 -12h0m1 4h0m0 -29h0m0 10h0m0 -35h0m0 7h0m0 75h0m0 -27h0m1 -48h0m0 -3h0m0 15h0m0 -10h0m0 35h0m0 11h0m0 -23h0m1 -25h0m0 -7h0m0 10h0m0 1h0m0 -8h0m0 48h0m1 -2h0m0 8h0m0 -27h0m0 -33h0m0 4h0m0 -6h0m1 9h0m0 -4h0m0 23h0m0 1h0m0 -13h0m1 7h0m0 56h0m0 5h0m0 -44h0m0 5h0m0 -32h0m0 7h0m1 -5h0m0 -8h0m0 -7h0m0 22h0m0 -8h0m0 42h0m1 -11h0m0 -5h0m0 -10h0m0 -13h0m0 39h0m0 -1h0m1 -29h0m0 40h0m0 -14h0m0 -8h0m0 -21h0m0 28h0m1 18h0m0 -17h0m0 -23h0m0 3h0m0 5h0m0 16h0m0 18h0m1 -15h0m0 13h0m0 -36h0m0 8h0m0 -16h0m0 -10h0m0 38h0m1 -27h0m0 -7h0m0 43h0m0 18h0m0 -28h0m0 18h0m1 16h0m0 -26h0m0 -21h0m0 13h0m0 -22h0m0 15h0m0 -30h0m1 15h0m0 -15h0m0 -3h0m0 2h0m0 11h0m0 22h0m1 32h0m0 -18h0m0 5h0m0 1h0m0 -5h0m0 -19h0m0 -35h0m1 5h0m0 17h0m0 -22h0m0 14h0m0 -28h0m0 32h0m1 -7h0m0 -8h0m0 17h0m0 -5h0m0 21h0m0 24h0m1 -4h0m0 11h0m0 -1h0m0 -4h0m0 19h0m0 -48h0m1 -7h0m0 -15h0m0 -32h0m0 -3h0m0 11h0m0 22h0m0 18h0m1 -6h0m0 -10h0m0 3h0m0 -15h0m0 6h0m0 -16h0m1 22h0m0 -20h0m0 8h0m0 -6h0m0 54h0m0 -10h0m0 39h0m1 -18h0m0 -2h0m0 -19h0m0 24h0m0 -9h0m0 -13h0m0 24h0m1 16h0m0 -1h0m0 -41h0m0 13h0m0 10h0m0 -6h0m0 15h0m1 7h0m0 17h0m0 -29h0m0 -25h0m0 27h0m0 -25h0m1 38h0m0 -23h0m0 -11h0m0 -30h0m0 -15h0m0 50h0m0 26h0m1 -7h0m0 -16h0m0 -19h0m0 42h0m0 -34h0m0 12h0m0 -17h0m1 4h0m0 -2h0m0 -13h0m0 10h0m0 -15h0m0 3h0m0 -1h0m1 2h0m0 4h0m0 10h0m0 17h0m0 -50h0m0 21h0m1 -7h0m0 -6h0m0 -3h0m0 2h0m0 -11h0m0 17h0m0 2h0m1 12h0m0 -25h0m0 -7h0m0 -7h0m0 33h0m0 8h0m0 -20h0m1 27h0m0 -20h0m0 3h0m0 22h0m0 -65h0m0 -2h0m0 44h0m1 9h0m0 24h0m0 -13h0m0 -22h0m0 -2h0m0 34h0m1 1h0m0 -20h0m0 -18h0m0 22h0m0 -28h0m1 -5h0m0 32h0m0 -12h0m0 40h0m0 -27h0m0 -14h0m0 23h0m1 2h0m0 2h0m0 -20h0m0 40h0m0 -30h0m0 -4h0m0 -11h0m1 11h0m0 -20h0m0 1h0m0 -10h0m0 14h0m0 -24h0m1 -16h0m0 39h0m0 14h0m0 26h0m0 -3h0m0 -10h0m1 -29h0m0 -8h0m0 11h0m0 -31h0m0 45h0m0 -5h0m0 27h0m1 -1h0m0 13h0m0 -38h0m0 15h0m0 -32h0m0 -26h0m0 12h0m1 4h0m0 31h0m0 3h0m0 23h0m0 -35h0m0 45h0m1 0h0m0 -18h0m0 -20h0m0 -3h0m0 -50h0m0 27h0m0 -2h0m1 -1h0m0 14h0m0 -18h0m0 37h0m0 -48h0m0 -2h0m0 38h0m1 11h0m0 14h0m0 -30h0m0 1h0m0 12h0m0 13h0m0 -1h0m1 23h0m0 -8h0m0 -2h0m0 -42h0m0 29h0m1 2h0m0 -6h0m0 19h0m0 5h0m0 14h0m0 -29h0m0 40h0m1 -29h0m0 10h0m0 -27h0m0 -1h0m0 33h0m0 -17h0m0 -37h0m1 30h0m0 21h0m0 -26h0m0 -9h0m0 6h0m1 -11h0m0 -9h0m0 -13h0m0 -10h0m0 19h0m0 7h0m0 13h0m1 -23h0m0 15h0m0 23h0m0 1h0m0 39h0m0 -33h0m0 20h0m1 -11h0m0 4h0m0 -7h0m0 -5h0m0 -25h0m0 28h0m1 -25h0m0 29h0m0 -30h0m0 11h0m0 11h0m1 1h0m0 16h0m0 2h0m0 -25h0m0 17h0m0 -39h0m0 3h0m1 4h0m0 5h0m0 34h0m0 -55h0m0 42h0m0 -45h0m1 -41h0m0 17h0m0 13h0m0 5h0m0 -3h0m0 -14h0m0 3h0m1 -17h0m0 16h0m0 -14h0m0 7h0m0 18h0m1 11h0m0 38h0m0 -16h0m0 11h0m0 -50h0m0 36h0m0 -46h0m1 -12h0m0 4h0m0 36h0m0 -14h0m0 -2h0m0 43h0m0 -52h0m1 40h0m0 -27h0m0 -1h0m0 -13h0m0 -9h0m0 12h0m1 -12h0m0 12h0m0 -2h0m0 6h0m0 -20h0m0 15h0m1 -15h0m0 17h0m0 10h0m0 23h0m0 -16h0m0 -15h0m0 30h0m1 27h0m0 -18h0m0 5h0m0 -3h0m0 17h0m0 -20h0m1 -10h0m0 -26h0m0 -7h0m0 34h0m0 -24h0m0 -7h0m1 1h0m0 -15h0m0 21h0m0 8h0m0 23h0m0 -6h0m1 -47h0m0 27h0m0 -12h0m0 25h0m0 3h0m0 19h0m1 -10h0m0 -5h0m0 34h0m0 -30h0m0 -10h0m0 17h0m1 -28h0m0 19h0m0 -1h0m0 -14h0m0 -12h0m0 24h0m0 -8h0m1 -1h0m0 20h0m0 4h0m0 5h0m0 26h0m0 -7h0m1 -4h0m0 3h0m0 -15h0m0 4h0m0 13h0m0 -26h0m0 10h0m1 -11h0m0 -10h0m0 7h0m0 -5h0m0 -21h0m0 33h0m0 -10h0m1 -45h0m0 23h0m0 3h0m0 23h0m0 13h0m0 -22h0m1 -20h0m0 37h0m0 -29h0m0 2h0m0 6h0m0 -12h0m1 -2h0m0 15h0m0 9h0m0 17h0m0 -24h0m1 -16h0m0 -2h0m0 5h0m0 15h0m0 -8h0m0 -18h0m0 7h0m1 -18h0m0 51h0m0 -15h0m0 6h0m0 -28h0m0 21h0m1 20h0m0 -1h0m0 34h0m0 -38h0m0 21h0m0 -46h0m1 -5h0m0 -33h0m0 25h0m0 13h0m0 -8h0m0 -4h0m1 28h0m0 -27h0m0 11h0m0 3h0m0 12h0m0 24h0m0 -29h0m1 17h0m0 1h0m0 -2h0m0 -9h0m0 6h0m0 -24h0m1 0h0m0 -20h0m0 34h0m0 -20h0m0 -22h0m0 18h0m1 -17h0m0 18h0m0 -10h0m0 6h0m0 -7h0m0 5h0m1 3h0m0 1h0m0 21h0m0 -5h0m0 -19h0m0 48h0m1 -19h0m0 -10h0m0 -11h0m0 -9h0m0 17h0m0 26h0m0 -16h0m1 12h0m0 -16h0m0 39h0m0 -14h0m0 -12h0m0 32h0m1 3h0m0 -22h0m0 6h0m0 -29h0m0 24h0m0 -5h0m0 -22h0m1 22h0m0 -9h0m0 17h0m0 -6h0m0 18h0m0 -9h0m1 -14h0m0 19h0m0 -33h0m0 38h0m0 -44h0m0 -19h0m0 26h0m1 -16h0m0 7h0m0 19h0m0 27h0m0 -44h0m0 -29h0m1 -7h0m0 4h0m0 8h0m0 -2h0m0 14h0m0 11h0m1 -25h0m0 22h0m0 -11h0m0 69h0m0 -37h0m0 -4h0m0 -10h0m1 -14h0m0 -21h0m0 -16h0m0 4h0m0 53h0m0 9h0m0 39h0m1 -11h0m0 -28h0m0 33h0m0 -8h0m0 -20h0m1 -5h0m0 12h0m0 -6h0m0 3h0m0 1h0m0 -27h0m0 16h0m1 15h0m0 -33h0m0 3h0m0 -18h0m0 -1h0m0 31h0m0 8h0m1 -24h0m0 -35h0m0 16h0m0 9h0m0 -30h0m0 45h0m1 -8h0m0 -11h0m0 37h0m0 -16h0m0 -19h0m0 1h0m1 5h0m0 -13h0m0 -3h0m0 39h0m0 21h0m0 6h0m0 17h0m1 -19h0m0 -16h0m0 -5h0m0 -13h0m0 24h0m0 12h0m1 -35h0m0 22h0m0 -4h0m0 -19h0m0 -33h0m0 15h0m1 25h0m0 28h0m0 -18h0m0 23h0m0 -22h0m0 2h0m0 -7h0m1 6h0m0 -14h0m0 2h0m0 11h0m0 -8h0m0 -28h0m0 -17h0m1 35h0m0 24h0m0 1h0m0 -6h0m0 19h0m0 12h0m0 -1h0m1 -14h0m0 -4h0m0 -2h0m0 -19h0m0 11h0m0 5h0m1 15h0m0 10h0m0 -17h0m0 -27h0m0 26h0m0 -11h0m1 22h0m0 -27h0m0 -30h0m0 -36h0m0 17h0m0 -11h0m0 37h0m1 -28h0m0 -7h0m0 -17h0m0 34h0m0 28h0m0 24h0m1 3h0m0 -8h0m0 -25h0m0 39h0m0 -26h0m0 -1h0m1 -7h0m0 11h0m0 -43h0m0 18h0m0 -3h0m0 -17h0m0 -6h0m1 -1h0m0 2h0m0 6h0m0 6h0m0 -5h0m0 14h0m0 -25h0m1 25h0m0 -19h0m0 8h0m0 8h0m0 -7h0m0 3h0m1 14h0m0 -31h0m0 20h0m0 -16h0m0 5h0m1 -13h0m0 -11h0m0 9h0m0 18h0m0 -20h0m0 62h0m0 -1h0m1 21h0m0 -39h0m0 26h0m0 -3h0m0 -18h0m0 -11h0m1 12h0m0 -9h0m0 -1h0m0 14h0m0 11h0m1 19h0m0 -19h0m0 3h0m0 5h0m0 -6h0m0 -1h0m1 -3h0m0 -8h0m0 -15h0m0 -24h0m0 -7h0m0 13h0m0 -3h0m1 35h0m0 -8h0m0 27h0m0 -14h0m0 13h0m0 -37h0m0 33h0m1 12h0m0 -5h0m0 1h0m0 -2h0m0 -5h0m0 -13h0m0 1h0m1 1h0m0 5h0m0 -17h0m0 11h0m0 -7h0m0 26h0m1 -20h0m0 8h0m0 -12h0m0 1h0m0 -20h0m0 8h0m0 7h0m1 -43h0m0 14h0m0 34h0m0 -19h0m0 -2h0m0 25h0m0 -10h0m1 12h0m0 10h0m0 20h0m0 -55h0m0 -4h0m0 28h0m0 -15h0m1 16h0m0 -18h0m0 17h0m0 -6h0m0 27h0m0 -5h0m1 -13h0m0 -6h0m0 -23h0m0 -14h0m0 -11h0m0 13h0m1 14h0m0 14h0m0 -17h0m0 32h0m0 -21h0m0 10h0m0 1h0m1 -6h0m0 -31h0m0 10h0m0 6h0m0 4h0m0 55h0m0 -1h0m1 -3h0m0 -8h0m0 -3h0m0 -21h0m0 -16h0m0 32h0m1 -14h0m0 13h0m0 -6h0m0 -9h0m0 -18h0m0 16h0m0 6h0m1 17h0m0 -14h0m0 -33h0m0 -11h0m0 26h0m0 -14h0m0 -21h0m1 22h0m0 -2h0m0 -3h0m0 11h0m0 3h0m0 -12h0m0 19h0m1 16h0m0 -35h0m0 -25h0m0 4h0m0 22h0m0 -8h0m1 9h0m0 -11h0m0 7h0m0 16h0m0 -20h0m0 -22h0m1 9h0m0 2h0m0 37h0m0 -27h0m0 18h0m0 1h0m0 -8h0m1 -1h0m0 -9h0m0 23h0m0 -10h0m0 -15h0m0 23h0m0 -24h0m1 57h0m0 -14h0m0 9h0m0 -14h0m0 21h0m0 -43h0m1 0h0m0 -2h0m0 -22h0m0 -10h0m0 47h0m0 -26h0m0 9h0m1 -1h0m0 20h0m0 12h0m0 2h0m0 -16h0m0 15h0m1 17h0m0 -13h0m0 -25h0m0 5h0m0 -12h0m0 5h0m1 -3h0m0 -27h0m0 -1h0m0 22h0m0 -54h0m1 29h0m0 30h0m0 34h0m0 -31h0m0 -19h0m1 -11h0m0 -7h0m0 2h0m0 19h0m0 -16h0m0 -19h0m0 10h0m1 10h0m0 -24h0m0 30h0m0 -1h0m0 -2h0m0 64h0m1 -24h0m0 22h0m0 -8h0m0 2h0m0 -3h0m1 -3h0m0 -39h0m0 -23h0m0 -9h0m0 24h0m0 -27h0m0 29h0m1 6h0m0 -19h0m0 18h0m0 15h0m0 -1h0m0 15h0m1 -3h0m0 -16h0m0 5h0m0 27h0m0 -18h0m0 21h0m1 1h0m0 14h0m0 -21h0m0 11h0m0 13h0m0 -4h0m1 -10h0m0 -34h0m0 -4h0m0 -5h0m0 -26h0m0 51h0m0 -61h0m1 31h0m0 5h0m0 -7h0m0 -5h0m0 -6h0m0 4h0m0 23h0m1 23h0m0 1h0m0 -28h0m0 -2h0m0 5h0m0 -8h0m0 14h0m1 57h0m0 -42h0m0 -21h0m0 -5h0m0 9h0m0 -24h0m1 24h0m0 -2h0m0 -42h0m0 30h0m0 6h0m0 11h0m0 17h0m1 12h0m0 -39h0m0 -9h0m0 -4h0m0 -6h0m0 14h0m0 -29h0m1 21h0m0 -14h0m0 12h0m0 -4h0m0 3h0m1 -6h0m0 16h0m0 12h0m0 12h0m0 6h0m0 -22h0m0 -10h0m1 21h0m0 -3h0m0 30h0m0 -25h0m0 -1h0m0 29h0m0 34h0m1 -3h0m0 -20h0m0 6h0m0 -11h0m0 -15h0m0 -26h0m0 39h0m1 25h0m0 8h0m0 -14h0m0 -2h0m0 3h0m0 -35h0m1 9h0m0 -17h0m0 10h0m0 -20h0m0 37h0m0 -15h0m0 -25h0m1 2h0m0 -34h0m0 26h0m0 -2h0m0 -5h0m0 -12h0m0 15h0m1 23h0m0 -7h0m0 -22h0m0 35h0m0 -15h0m0 -53h0m0 54h0m1 28h0m0 -10h0m0 -9h0m0 -3h0m0 -27h0m0 -10h0m1 3h0m0 26h0m0 -23h0m0 18h0m0 -27h0m0 -4h0m1 3h0m0 4h0m0 18h0m0 -19h0m0 -7h0m0 17h0m0 -11h0m1 11h0m0 -32h0m0 10h0m0 4h0m0 22h0m0 -1h0m0 26h0m1 2h0m0 -15h0m0 11h0m0 -20h0m0 -18h0m0 12h0m1 5h0m0 -13h0m0 12h0m0 -17h0m0 -4h0m0 24h0m1 -25h0m0 3h0m0 -27h0m0 6h0m0 1h0m0 14h0m1 -3h0m0 5h0m0 8h0m0 6h0m0 -1h0m0 27h0m0 29h0m1 -36h0m0 33h0m0 -58h0m0 -10h0m0 -23h0m0 8h0m1 -8h0m0 19h0m0 47h0m0 5h0m0 18h0m0 -2h0m0 8h0m1 -5h0m0 -7h0m0 -16h0m0 -8h0m0 11h0m0 -14h0m0 -19h0m1 7h0m0 9h0m0 -6h0m0 1h0m0 -15h0m0 -10h0m0 27h0m1 22h0m0 -10h0m0 -4h0m0 -51h0m0 20h0m0 12h0m1 -12h0m0 39h0m0 11h0m0 -43h0m0 -18h0m0 80h0m0 -23h0m1 18h0m0 -36h0m0 -17h0m0 -17h0m0 11h0m0 -3h0m0 -5h0m1 9h0m0 -7h0m0 5h0m0 1h0m0 7h0m0 7h0m0 -11h0m1 19h0m0 2h0m0 -34h0m0 23h0m0 21h0m0 10h0m1 17h0m0 -36h0m0 6h0m0 8h0m0 -10h0m0 5h0m0 -27h0m1 -15h0m0 20h0m0 -7h0m0 -10h0m0 25h0m0 47h0m0 5h0m1 -41h0m0 -37h0m0 -28h0m0 13h0m0 22h0m0 -19h0m0 17h0m1 18h0m0 -17h0m0 -4h0m0 54h0m1 9h0m0 21h0m0 -30h0m0 26h0m0 -27h0m0 -28h0m0 19h0m1 26h0m0 -28h0m0 -24h0m0 25h0m0 -16h0m0 9h0m1 8h0m0 27h0m0 -2h0m0 -47h0m0 37h0m0 11h0m1 -5h0m0 -7h0m0 -28h0m0 27h0m0 -15h0m1 -25h0m0 14h0m0 23h0m0 1h0m0 25h0m0 -7h0m1 -13h0m0 -5h0m0 -2h0m0 -10h0m0 7h0m0 24h0m0 -29h0m1 -22h0m0 36h0m0 -11h0m0 -37h0m0 15h0m0 -6h0m1 -20h0m0 40h0m0 -28h0m0 27h0m0 -25h0m0 1h0m1 -5h0m0 -19h0m0 60h0m0 -25h0m0 10h0m0 -11h0m0 23h0m1 3h0m0 -28h0m0 17h0m0 -23h0m0 10h0m0 -8h0m0 9h0m1 -7h0m0 -11h0m0 24h0m0 11h0m0 -22h0m0 -25h0m0 -3h0m1 5h0m0 16h0m0 31h0m0 22h0m0 -27h0m0 7h0m1 6h0m0 -23h0m0 -10h0m0 -7h0m0 -7h0m0 26h0m0 5h0m1 -15h0m0 -22h0m0 6h0m0 30h0m0 -2h0m0 8h0m0 -19h0m1 -11h0m0 -20h0m0 13h0m0 4h0m0 -2h0m0 9h0m0 5h0m1 20h0m0 -26h0m0 16h0m0 43h0m0 -31h0m0 26h0m1 8h0m0 -8h0m0 -21h0m0 -24h0m0 -6h0m0 13h0m0 -4h0m1 7h0m0 21h0m0 -12h0m0 23h0m0 -25h0m0 -12h0m0 -9h0m1 -21h0m0 40h0m0 -14h0m0 25h0m0 -2h0m0 3h0m1 -57h0m0 36h0m0 5h0m0 -32h0m0 4h0m0 31h0m1 -9h0m0 17h0m0 -16h0m0 8h0m0 -5h0m0 20h0m1 8h0m0 -50h0m0 20h0m0 -29h0m0 16h0m0 10h0m0 -5h0m1 29h0m0 -28h0m0 23h0m0 -20h0m0 30h0m0 -26h0m0 -3h0m1 11h0m0 9h0m0 -5h0m0 -47h0m0 21h0m0 15h0m1 -26h0m0 9h0m0 18h0m0 25h0m0 -17h0m0 50h0m0 -31h0m1 2h0m0 -13h0m0 -2h0m0 -11h0m0 38h0m0 1h0m1 -15h0m0 7h0m0 -2h0m0 -3h0m0 18h0m1 -24h0m0 -15h0m0 18h0m0 12h0m0 -26h0m0 -7h0m0 -20h0m1 15h0m0 -39h0m0 28h0m0 -30h0m0 24h0m0 29h0m0 7h0m1 2h0m0 9h0m0 -11h0m0 -17h0m0 -3h0m0 -18h0m1 -1h0m0 16h0m0 -5h0m0 -5h0m0 1h0m0 -13h0m1 -1h0m0 33h0m0 14h0m0 22h0m0 -14h0m0 -27h0m0 7h0m1 -7h0m0 -32h0m0 -6h0m0 22h0m0 -10h0m0 -14h0m1 7h0m0 18h0m0 3h0m0 20h0m0 12h0m0 8h0m0 -5h0m1 -9h0m0 -27h0m0 -11h0m0 -1h0m0 10h0m0 -26h0m1 -14h0m0 17h0m0 10h0m0 2h0m0 8h0m0 -2h0m0 -21h0m1 30h0m0 -32h0m0 13h0m0 2h0m0 -31h0m0 28h0m0 -24h0m1 4h0m0 -4h0m0 26h0m0 -28h0m0 -8h0m0 53h0m1 -10h0m0 26h0m0 10h0m0 -32h0m0 9h0m0 10h0m1 -10h0m0 5h0m0 2h0m0 -13h0m0 34h0m0 -31h0m0 -2h0m1 -3h0m0 -4h0m0 -39h0m0 55h0m0 10h0m1 -6h0m0 33h0m0 -14h0m0 -7h0m0 -40h0m0 3h0m0 49h0m1 12h0m0 -51h0m0 -3h0m0 48h0m0 -10h0m0 -37h0m1 -11h0m0 -39h0m0 -7h0m0 29h0m0 -5h0m0 59h0m0 -33h0m1 -8h0m0 10h0m0 -15h0m0 -23h0m0 35h0m0 14h0m0 13h0m1 -14h0m0 -17h0m0 -2h0m0 41h0m0 -21h0m0 6h0m0 22h0m1 -26h0m0 2h0m0 18h0m0 -28h0m0 12h0m0 19h0m1 -11h0m0 -6h0m0 -1h0m0 -33h0m0 17h0m0 -15h0m0 -11h0m1 7h0m0 9h0m0 34h0m0 -7h0m0 -20h0m0 -13h0m0 21h0m1 0h0m0 -13h0m0 -26h0m0 21h0m0 20h0m0 13h0m1 8h0m0 -71h0m0 59h0m0 -22h0m0 24h0m0 -21h0m1 -35h0m0 73h0m0 -21h0m0 7h0m0 -1h0m0 9h0m0 -22h0m1 20h0m0 -31h0m0 -18h0m0 29h0m0 45h0m0 -24h0m0 12h0m1 15h0m0 -69h0m0 43h0m0 -61h0m0 12h0m0 -8h0m0 37h0m1 34h0m0 -25h0m0 -56h0m0 26h0m0 -23h0m1 40h0m0 -25h0m0 3h0m0 9h0m0 -14h0m0 -14h0m1 18h0m0 30h0m0 -28h0m0 36h0m0 -4h0m1 -17h0m0 -20h0m0 17h0m0 -14h0m0 34h0m0 -24h0m0 23h0m1 -8h0m0 -47h0m0 24h0m0 26h0m0 38h0m0 -16h0m1 -2h0m0 9h0m0 6h0m0 9h0m0 -25h0m0 -4h0m0 3h0m1 -46h0m0 19h0m0 7h0m0 -1h0m0 -8h0m0 19h0m0 8h0m1 3h0m0 -1h0m0 -31h0m0 21h0m0 -6h0m0 -19h0m1 -22h0m0 3h0m0 21h0m0 -29h0m0 3h0m0 15h0m1 28h0m0 -18h0m0 30h0m0 -40h0m0 15h0m0 -14h0m1 22h0m0 6h0m0 -32h0m0 54h0m0 15h0m0 -36h0m1 -18h0m0 29h0m0 28h0m0 -14h0m0 -6h0m0 -20h0m1 -10h0m0 2h0m0 -32h0m0 10h0m0 28h0m1 -34h0m0 40h0m0 -26h0m0 4h0m0 8h0m0 -22h0m1 7h0m0 -19h0m0 16h0m0 -50h0m0 37h0m0 47h0m1 -23h0m0 -17h0m0 -21h0m0 -16h0m0 11h0m0 24h0m0 -5h0m1 24h0m0 1h0m0 28h0m0 -21h0m0 -13h0m0 -4h0m1 14h0m0 6h0m0 -27h0m0 -17h0m0 18h0m0 48h0m0 -21h0m1 -30h0m0 9h0m0 24h0m0 -27h0m0 -15h0m0 29h0m0 21h0m1 2h0m0 21h0m0 -34h0m0 31h0m0 -41h0m0 15h0m0 6h0m1 -34h0m0 -9h0m0 10h0m0 8h0m0 -29h0m1 48h0m0 7h0m0 6h0m0 12h0m0 -48h0m0 -22h0m0 -9h0m1 24h0m0 44h0m0 8h0m0 5h0m0 1h0m0 -27h0m0 -11h0m1 3h0m0 39h0m0 -40h0m0 -1h0m0 45h0m0 -23h0m1 0h0m0 -44h0m0 26h0m0 -10h0m0 18h0m0 38h0m0 11h0m1 5h0m0 -29h0m0 -32h0m0 -5h0m0 -20h0m0 -17h0" stroke="#000" stroke-width="3.5" stroke-linecap="round" fill="none"/>
<path d="M230.5 448.5h0m0 6h0m29 3h0m145 -7h0m16 8h0m-104 132h0m73 6h0m33 3h0m55 -153h0m0 6h0m-1 5h0m52 -34h0m69 22h0m39 7h0m-73 145h0m1 10h0m42 -6h0m196 -145h0m71 -3h0m53 -13h0m0 12h0m0 5h0m-8 -2h0m80 -1h0m0 5h0m21 -18h0m9 9h0m0 6h0m-172 143h0m78 0h0m-40 36h0m177 -183h0m28 2h0m101 1h0m54 2h0m-200 147h0m29 -9h0m19 9h0m-18 44h0m218 -6h0" stroke="#ffa500" stroke-width="3.5" stroke-linecap="round" fill="none"/>
<rect x="161" y="499" width="1100.4" height="49" fill="#ffa500" fill-opacity="0.1" stroke="#ffa500" stroke-opacity="0.1" stroke-width="1"/>
<rect x="1259.1" y="476.9" width="45.200000000000045" height="59" fill="#ffa500" fill-opacity="0.1" stroke="#ffa500" stroke-opacity="0.1" stroke-width="1"/>
<rect x="105.5" y="499" width="1255.5" height="48.7" fill="#ff0000" fill-opacity="0.1" stroke="#ff0000" stroke-opacity="0.1" stroke-width="1"/>
<path d="M161 524.5H1261.4" stroke="#ffa500" stroke-width="3" fill="none"/>
<path d="M1259.1 506.5H1305" stroke="#ffa500" stroke-width="3" fill="none"/>
<path d="M105.5 523H1361" stroke="#ff0000" stroke-width="2" fill="none"/>
<path d="M749.9 659.5h6.4l-3.2 5.2z" fill="#ffa500"/>
<path d="M1108.1 659.5h6.4l-3.2 5.2z" fill="#ffa500"/>
<path d="M1219.2 659.5h6.4l-3.2 5.2z" fill="#ffa500"/>
<path d="M162.0 666.5V380.5" stroke="#800080" stroke-width="2.08" stroke-dasharray="2.08 3.44" fill="none"/>
<path d="M1259.9 666.5V380.5" stroke="#800080" stroke-width="2.08" stroke-dasharray="2.08 3.44" fill="none"/>
<path d="M1302.9 666.5V380.5" stroke="#800080" stroke-width="2.08" stroke-dasharray="2.08 3.44" fill="none"/>
</g>
<rect x="105.5" y="380.5" width="1380.0" height="286.0" fill="none" stroke="#000" stroke-width="1.11"/>
<path d="M105.5 420.5h-4.86M105.5 475.5h-4.86M105.5 531.5h-4.86M105.5 587.5h-4.86M105.5 642.5h-4.86" stroke="#000" stroke-width="1.11" fill="none"/>
<path d="M162.44 666.5v4.86M458.94 666.5v4.86M755.44 666.5v4.86M1051.94 666.5v4.86M1348.44 666.5v4.86" stroke="#000" stroke-width="1.11" fill="none"/>
<g><text x="95.50" y="426.00" text-anchor="end" font-size="14.17" textLength="30.92" lengthAdjust="spacingAndGlyphs">7.10</text><text x="95.50" y="481.00" text-anchor="end" font-size="14.17" textLength="30.92" lengthAdjust="spacingAndGlyphs">7.09</text><text x="95.50" y="537.00" text-anchor="end" font-size="14.17" textLength="30.92" lengthAdjust="spacingAndGlyphs">7.08</text><text x="95.50" y="593.00" text-anchor="end" font-size="14.17" textLength="30.92" lengthAdjust="spacingAndGlyphs">7.07</text><text x="95.50" y="648.00" text-anchor="end" font-size="14.17" textLength="30.92" lengthAdjust="spacingAndGlyphs">7.06</text><text x="158.08" y="686.80" text-anchor="start" font-size="14.17" textLength="8.84" lengthAdjust="spacingAndGlyphs">0</text><text x="440.83" y="686.80" text-anchor="start" font-size="14.17" textLength="35.35" lengthAdjust="spacingAndGlyphs">2000</text><text x="737.83" y="686.80" text-anchor="start" font-size="14.17" textLength="35.35" lengthAdjust="spacingAndGlyphs">4000</text><text x="1033.83" y="686.80" text-anchor="start" font-size="14.17" textLength="35.35" lengthAdjust="spacingAndGlyphs">6000</text><text x="1330.83" y="686.80" text-anchor="start" font-size="14.17" textLength="35.35" lengthAdjust="spacingAndGlyphs">8000</text><text x="707.55" y="372.00" text-anchor="start" font-size="17.00" textLength="175.90" lengthAdjust="spacingAndGlyphs">Magnitude Estimates</text><text x="693.63" y="656.90" text-anchor="start" font-size="14.17" textLength="35.35" lengthAdjust="spacingAndGlyphs">5775</text><text x="1260.12" y="636.50" text-anchor="start" font-size="14.17" textLength="44.18" lengthAdjust="spacingAndGlyphs">46245</text></g>
<rect x="1365.35" y="387.65" width="113.15" height="47.45" rx="3.2" fill="#fff" fill-opacity="0.8" stroke="#d6d6d6" stroke-width="1.11"/>
<path d="M1369 399.35h31" stroke="#ffa500" stroke-width="2.8"/>
<path d="M1369 421.85h30" stroke="#ff0000" stroke-width="2.08"/>
<text x="1409.34" y="403.85" text-anchor="start" font-size="14.17" textLength="30.86" lengthAdjust="spacingAndGlyphs">mag</text>
<text x="1439.90" y="405.80" text-anchor="start" font-size="10.20" textLength="31.73" lengthAdjust="spacingAndGlyphs" font-style="italic">OBSID</text>
<text x="1408.44" y="426.80" text-anchor="start" font-size="14.17" textLength="30.86" lengthAdjust="spacingAndGlyphs">mag</text>
<rect x="1348.3" y="613.7" width="130.4" height="45.5" rx="3.2" fill="#fff" fill-opacity="0.8" stroke="#d6d6d6" stroke-width="1.11"/>
<circle cx="1367.5" cy="626.5" r="2" fill="#ffa500"/><circle cx="1367.5" cy="647.5" r="2" fill="#000"/>
<text x="1391.94" y="630.00" text-anchor="start" font-size="14.17" textLength="80.07" lengthAdjust="spacingAndGlyphs">Highlighted</text>
<text x="1392.52" y="650.30" text-anchor="start" font-size="14.17" textLength="20.04" lengthAdjust="spacingAndGlyphs">OK</text>
<path d="M105.5 916.5H1485.5" stroke="#b0b0b0" stroke-width="1.11" stroke-dasharray="1.11 1.83" fill="none"/>
<path d="M105.5 878.5H1485.5" stroke="#b0b0b0" stroke-width="1.11" stroke-dasharray="1.11 1.83" fill="none"/>
<path d="M105.5 840.5H1485.5" stroke="#b0b0b0" stroke-width="1.11" stroke-dasharray="1.11 1.83" fill="none"/>
<path d="M105.5 802.5H1485.5" stroke="#b0b0b0" stroke-width="1.11" stroke-dasharray="1.11 1.83" fill="none"/>
<path d="M105.5 763.5H1485.5" stroke="#b0b0b0" stroke-width="1.11" stroke-dasharray="1.11 1.83" fill="none"/>
<g clip-path="url(#c3)">
<circle cx="753.5" cy="840.5" r="1.15" fill="none" stroke="#000" stroke-width="1.1"/>
<circle cx="753.5" cy="878.5" r="1.15" fill="none" stroke="#000" stroke-width="1.1"/>
<path d="M162.0 954.5V725.5" stroke="#800080" stroke-width="2.08" stroke-dasharray="2.08 3.44" fill="none"/>
<path d="M1259.9 954.5V725.5" stroke="#800080" stroke-width="2.08" stroke-dasharray="2.08 3.44" fill="none"/>
<path d="M1302.9 954.5V725.5" stroke="#800080" stroke-width="2.08" stroke-dasharray="2.08 3.44" fill="none"/>
</g>
<path d="M105.5 916.5h-4.86M105.5 878.5h-4.86M105.5 840.5h-4.86M105.5 802.5h-4.86M105.5 763.5h-4.86" stroke="#000" stroke-width="1.11" fill="none"/>
<text x="95.50" y="921.90" text-anchor="end" font-size="14.17" textLength="80.89" lengthAdjust="spacingAndGlyphs">OBS not OK</text>
<text x="95.50" y="883.90" text-anchor="end" font-size="14.17" textLength="43.83" lengthAdjust="spacingAndGlyphs">dr > 5</text>
<text x="95.50" y="845.90" text-anchor="end" font-size="14.17" textLength="57.68" lengthAdjust="spacingAndGlyphs">Ion. rad.</text>
<text x="95.50" y="807.90" text-anchor="end" font-size="14.17" textLength="62.51" lengthAdjust="spacingAndGlyphs">not track</text>
<text x="95.50" y="768.90" text-anchor="end" font-size="14.17" textLength="79.48" lengthAdjust="spacingAndGlyphs">not Kalman</text>
<g clip-path="url(#c4)">
<path d="M162.5 1008.5h0m0 1h0m1 -1h0m0 1h0m1 -1h0m0 1h0m1 -2h0m0 1h0m1 0h0m0 1h0m0 -2h0m1 2h0m0 -1h0m1 0h0m0 1h0m1 -1h0m0 1h0m0 -2h0m1 2h0m0 -1h0m0 -1h0m1 1h0m0 1h0m1 0h0m0 -1h0m1 1h0m0 -1h0m1 0h0m0 -1h0m0 2h0m1 -1h0m0 1h0m1 0h0m0 -1h0m1 1h0m0 -1h0m1 0h0m0 1h0m1 -1h0m0 1h0m1 0h0m0 -1h0m1 0h0m0 1h0m1 -1h0m0 1h0m1 -1h0m0 1h0m1 -1h0m0 1h0m1 0h0m0 -1h0m1 0h0m0 -1h0m0 2h0m1 0h0m0 -2h0m0 1h0m1 1h0m0 -1h0m1 0h0m0 1h0m1 -1h0m0 1h0m0 -2h0m1 1h0m0 1h0m1 -1h0m0 1h0m1 -1h0m0 1h0m1 0h0m0 -1h0m1 0h0m0 1h0m1 0h0m0 -1h0m1 0h0m0 1h0m1 0h0m0 -1h0m1 1h0m0 -1h0m1 0h0m0 1h0m1 -1h0m0 1h0m1 -1h0m0 1h0m1 0h0m0 -1h0m1 0h0m0 1h0m1 0h0m0 -1h0m1 0h0m1 0h0m0 -1h0m0 2h0m1 -1h0m0 1h0m1 -1h0m0 1h0m1 0h0m0 -1h0m1 0h0m0 1h0m1 -1h0m0 1h0m1 -1h0m0 1h0m1 -1h0m0 -1h0m0 2h0m1 -1h0m0 1h0m1 -1h0m0 1h0m1 0h0m0 -1h0m1 -1h0m0 1h0m0 1h0m1 -1h0m0 1h0m1 -1h0m0 1h0m1 -1h0m0 1h0m1 0h0m0 -2h0m0 1h0m1 1h0m0 -1h0m1 1h0m0 -1h0m0 -1h0m1 1h0m0 1h0m1 0h0m0 -1h0m0 -1h0m1 1h0m0 1h0m1 -1h0m0 1h0m1 -1h0m1 0h0m0 1h0m0 -2h0m1 1h0m0 1h0m1 -1h0m0 1h0m1 0h0m0 -1h0m1 1h0m0 -1h0m1 0h0m1 0h0m0 1h0m1 0h0m0 -1h0m0 -1h0m1 2h0m0 -1h0m1 0h0m1 0h0m0 1h0m1 -1h0m0 1h0m1 -1h0m0 1h0m1 0h0m0 -1h0m0 -1h0m1 1h0m0 1h0m1 -1h0m0 1h0m0 -2h0m1 1h0m0 1h0m1 -2h0m0 1h0m0 1h0m1 0h0m0 -1h0m0 -1h0m1 2h0m0 -1h0m0 -1h0m1 1h0m0 1h0m1 0h0m0 -1h0m1 0h0m0 1h0m1 0h0m0 -1h0m1 0h0m0 1h0m1 -1h0m0 1h0m1 0h0m0 -1h0m1 0h0m0 1h0m0 -2h0m1 1h0m0 -1h0m0 2h0m1 -1h0m0 -1h0m0 2h0m1 0h0m0 -1h0m1 1h0m0 -1h0m1 0h0m0 -1h0m0 2h0m1 -1h0m0 1h0m1 0h0m0 -1h0m1 0h0m0 1h0m1 -2h0m0 2h0m0 -1h0m1 0h0m0 1h0m1 -1h0m0 -1h0m0 2h0m1 -1h0m0 1h0m1 -1h0m0 1h0m1 -1h0m1 0h0m0 1h0m1 -1h0m0 1h0m1 -1h0m0 1h0m1 -1h0m0 1h0m1 -1h0m0 1h0m0 -2h0m1 1h0m0 1h0m1 -1h0m0 1h0m1 -1h0m0 1h0m1 -1h0m0 1h0m1 0h0m0 -1h0m1 -1h0m0 1h0m0 1h0m1 0h0m0 -1h0m1 0h0m0 -1h0m0 2h0m1 0h0m0 -1h0m1 0h0m1 0h0m0 1h0m1 -1h0m0 1h0m1 0h0m0 -1h0m1 0h0m0 1h0m1 0h0m0 -1h0m1 1h0m0 -1h0m0 -1h0m1 2h0m0 -1h0m1 1h0m0 -1h0m1 0h0m1 0h0m0 1h0m1 -1h0m0 1h0m1 -1h0m0 -1h0m0 2h0m1 -1h0m0 -1h0m1 1h0m0 1h0m1 0h0m0 -1h0m0 -1h0m1 2h0m0 -1h0m1 1h0m0 -1h0m0 -1h0m1 1h0m0 -1h0m0 2h0m1 -1h0m0 1h0m1 -1h0m0 1h0m0 -2h0m1 2h0m0 -1h0m1 0h0m0 1h0m1 -1h0m0 1h0m1 -1h0m0 1h0m1 -1h0m0 1h0m1 0h0m0 -1h0m0 -1h0m1 2h0m0 -1h0m1 0h0m0 -1h0m0 2h0m1 -1h0m0 1h0m1 0h0m0 -1h0m1 0h0m0 1h0m1 -1h0m1 0h0m0 -1h0m1 2h0m0 -1h0m1 1h0m0 -1h0m0 -1h0m1 1h0m0 -1h0m0 2h0m1 -1h0m0 -1h0m0 2h0m1 -1h0m0 1h0m1 -1h0m0 1h0m1 -1h0m0 1h0m1 -1h0m0 1h0m1 -1h0m0 1h0m0 -2h0m1 1h0m0 1h0m1 -1h0m0 1h0m1 -1h0m0 1h0m0 -2h0m1 2h0m0 -1h0m1 0h0m0 1h0m1 0h0m0 -1h0m1 0h0m0 -1h0m0 2h0m1 0h0m0 -1h0m1 0h0m0 1h0m0 -2h0m1 2h0m0 -1h0m1 0h0m1 1h0m0 -1h0m0 -1h0m1 1h0m0 1h0m0 -2h0m1 2h0m0 -1h0m1 0h0m0 1h0m1 -1h0m0 1h0m1 -1h0m1 0h0m0 -1h0m0 2h0m1 -1h0m0 1h0m1 -1h0m0 1h0m1 -1h0m0 1h0m1 -1h0m0 1h0m0 -2h0m1 1h0m0 1h0m0 -2h0m1 1h0m0 1h0m1 0h0m0 -1h0m1 1h0m0 -1h0m1 1h0m0 -1h0m1 0h0m0 -1h0m1 1h0m0 1h0m1 -1h0m0 1h0m1 -1h0m0 1h0m1 0h0m0 -1h0m0 -1h0m1 0h0m0 1h0m0 1h0m1 0h0m0 -1h0m1 0h0m0 1h0m1 0h0m0 -1h0m1 -1h0m0 2h0m0 -1h0m1 1h0m0 -1h0m1 0h0m0 -1h0m0 2h0m1 -1h0m0 1h0m1 0h0m0 -1h0m1 -1h0m0 1h0m0 1h0m1 -1h0m0 1h0m0 -2h0m1 1h0m1 -1h0m0 2h0m0 -1h0m1 1h0m0 -1h0m1 0h0m0 1h0m1 -1h0m0 1h0m1 -1h0m0 1h0m0 -2h0m1 2h0m0 -2h0m0 1h0m1 0h0m0 1h0m0 -2h0m1 2h0m0 -1h0m0 -1h0m1 2h0m0 -1h0m0 -1h0m1 1h0m0 1h0m1 -1h0m1 0h0m0 1h0m1 -1h0m0 -1h0m1 1h0m0 1h0m1 -1h0m0 -1h0m1 1h0m0 1h0m1 -1h0m1 0h0m1 0h0m0 1h0m1 -1h0m0 1h0m1 -1h0m1 1h0m0 -1h0m1 0h0m0 1h0m1 -2h0m0 2h0m0 -1h0m1 1h0m0 -1h0m0 -1h0m1 0h0m0 1h0m0 1h0m1 -1h0m0 1h0m1 -1h0m0 1h0m1 -1h0m1 0h0m0 1h0m1 -1h0m0 1h0m1 -2h0m0 1h0m0 1h0m1 -1h0m0 1h0m1 0h0m0 -1h0m0 -1h0m1 1h0m0 1h0m0 -2h0m1 2h0m0 -1h0m1 0h0m1 0h0m0 1h0m1 -1h0m0 1h0m0 -2h0m1 1h0m0 1h0m0 -2h0m1 1h0m0 -1h0m1 1h0m0 -1h0m1 2h0m0 -1h0m1 0h0m0 1h0m1 0h0m0 -1h0m1 0h0m0 -1h0m1 1h0m0 1h0m1 -1h0m0 1h0m0 -2h0m1 1h0m0 1h0m1 -1h0m0 1h0m1 -2h0m0 1h0m1 0h0m0 1h0m1 0h0m0 -1h0m1 0h0m0 -1h0m1 1h0m0 1h0m1 -1h0m0 -1h0m0 2h0m1 0h0m0 -1h0m1 1h0m0 -1h0m1 0h0m0 1h0m0 -2h0m1 1h0m1 0h0m0 1h0m1 0h0m0 -1h0m1 0h0m0 1h0m1 -1h0m0 1h0m1 -1h0m0 1h0m1 0h0m0 -1h0m0 -1h0m1 0h0m0 1h0m0 1h0m1 -1h0m0 1h0m1 -1h0m0 -1h0m0 2h0m1 -1h0m0 1h0m1 -1h0m0 1h0m1 0h0m0 -1h0m1 1h0m0 -1h0m1 0h0m0 1h0m0 -2h0m1 1h0m0 1h0m1 -1h0m0 1h0m1 -1h0m0 -1h0m1 1h0m0 1h0m1 -1h0m0 1h0m1 -1h0m0 1h0m1 -1h0m0 1h0m1 -1h0m0 1h0m1 -1h0m0 1h0m1 -1h0m0 1h0m1 -1h0m1 1h0m0 -1h0m1 0h0m0 1h0m1 0h0m0 -1h0m0 -1h0m1 1h0m0 1h0m1 -1h0m0 1h0m1 -1h0m0 1h0m1 0h0m0 -1h0m0 -1h0m1 1h0m1 0h0m0 1h0m1 0h0m0 -1h0m1 0h0m0 1h0m1 0h0m0 -1h0m1 0h0m0 1h0m0 -2h0m1 2h0m0 -1h0m1 0h0m0 1h0m1 -1h0m0 1h0m1 -1h0m0 1h0m1 -1h0m0 1h0m1 0h0m0 -1h0m1 0h0m0 1h0m1 -1h0m1 0h0m0 1h0m0 -2h0m1 2h0m0 -1h0m1 1h0m0 -1h0m1 0h0m1 0h0m0 -1h0m0 2h0m1 -1h0m0 1h0m1 -1h0m0 1h0m0 -2h0m1 2h0m0 -1h0m1 0h0m0 1h0m1 -1h0m0 1h0m1 -1h0m0 1h0m1 -1h0m0 1h0m1 -1h0m1 0h0m0 1h0m1 -1h0m0 1h0m1 -1h0m0 1h0m1 -1h0m0 1h0m1 -1h0m0 1h0m1 0h0m0 -2h0m0 1h0m1 0h0m0 -1h0m1 2h0m0 -1h0m1 1h0m0 -1h0m1 1h0m0 -1h0m0 -1h0m1 1h0m0 1h0m1 -1h0m0 1h0m1 0h0m0 -1h0m0 -1h0m1 1h0m1 -1h0m0 1h0m0 1h0m1 -1h0m1 0h0m0 1h0m1 -1h0m1 0h0m0 1h0m1 0h0m0 -1h0m1 0h0m0 1h0m1 -1h0m0 1h0m1 0h0m0 -1h0m1 0h0m1 1h0m0 -1h0m1 0h0m0 1h0m1 -2h0m0 2h0m0 -1h0m1 0h0m0 1h0m1 -1h0m0 1h0m1 -1h0m0 1h0m1 -1h0m0 1h0m1 0h0m0 -1h0m1 0h0m0 1h0m1 -1h0m0 1h0m1 0h0m0 -1h0m1 1h0m0 -1h0m1 0h0m0 1h0m1 -1h0m0 1h0m1 -1h0m1 0h0m1 0h0m0 1h0m1 -1h0m0 1h0m1 -1h0m0 1h0m1 -1h0m0 1h0m1 -1h0m0 1h0m1 0h0m0 -1h0m1 0h0m0 1h0m0 -2h0m1 1h0m0 1h0m1 -1h0m0 -1h0m0 2h0m1 0h0m0 -1h0m1 0h0m0 1h0m0 -2h0m1 2h0m0 -1h0m1 0h0m0 1h0m1 -1h0m0 1h0m1 -1h0m0 1h0m1 -1h0m1 0h0m0 -1h0m1 1h0m1 0h0m1 0h0m0 1h0m1 0h0m0 -1h0m1 0h0m0 1h0m1 -1h0m1 1h0m0 -1h0m1 0h0m0 -1h0m0 2h0m1 -1h0m0 -1h0m0 2h0m1 -1h0m1 0h0m0 1h0m1 0h0m0 -1h0m1 0h0m0 1h0m1 -1h0m0 -1h0m0 2h0m1 -1h0m0 -1h0m1 1h0m0 1h0m1 -1h0m0 1h0m1 -1h0m0 -1h0m0 2h0m1 -1h0m0 1h0m0 -2h0m1 1h0m0 1h0m1 -2h0m0 2h0m0 -1h0m1 0h0m0 1h0m1 0h0m0 -1h0m1 0h0m0 1h0m1 -1h0m0 1h0m1 0h0m0 -1h0m1 0h0m1 0h0m0 1h0m1 -1h0m0 1h0m1 0h0m0 -1h0m1 0h0m0 1h0m1 -2h0m0 2h0m0 -1h0m1 -1h0m0 1h0m0 1h0m1 -1h0m0 1h0m1 -1h0m0 1h0m1 -1h0m0 1h0m1 -1h0m0 1h0m1 0h0m0 -1h0m1 0h0m0 1h0m1 -1h0m0 1h0m1 -1h0m0 1h0m1 0h0m0 -1h0m1 0h0m0 1h0m1 -1h0m0 1h0m1 -1h0m0 1h0m1 -1h0m0 1h0m1 -1h0m1 0h0m0 1h0m0 -2h0m1 1h0m0 1h0m1 -1h0m0 1h0m1 -2h0m0 1h0m0 1h0m1 -1h0m0 1h0m1 -2h0m0 1h0m1 0h0m0 1h0m1 -1h0m1 0h0m0 1h0m1 -1h0m1 0h0m0 -1h0m0 2h0m1 -1h0m0 1h0m1 -1h0m0 1h0m1 -1h0m0 1h0m0 -2h0m1 2h0m0 -1h0m1 0h0m0 1h0m1 -1h0m0 1h0m1 -1h0m0 -1h0m1 1h0m0 1h0m1 -1h0m0 1h0m1 0h0m0 -1h0m1 0h0m0 1h0m1 0h0m0 -1h0m1 0h0m0 1h0m1 -1h0m0 1h0m0 -2h0m1 2h0m0 -1h0m1 1h0m0 -1h0m1 1h0m0 -1h0m1 0h0m1 0h0m0 1h0m1 0h0m0 -1h0m1 0h0m0 1h0m1 0h0m0 -1h0m1 0h0m0 1h0m1 -1h0m0 1h0m0 -2h0m1 1h0m0 -1h0m0 2h0m1 -1h0m0 1h0m1 -1h0m0 1h0m1 -1h0m1 0h0m0 1h0m1 -1h0m0 -1h0m1 1h0m1 0h0m1 0h0m0 1h0m1 -1h0m0 1h0m0 -2h0m1 2h0m0 -1h0m1 0h0m0 1h0m0 -2h0m1 2h0m0 -1h0m1 1h0m0 -1h0m1 0h0m0 1h0m1 -1h0m0 1h0m1 -1h0m0 1h0m1 -1h0m0 1h0m1 -1h0m0 1h0m1 0h0m0 -1h0m0 -1h0m1 2h0m0 -1h0m1 0h0m0 1h0m1 -1h0m0 -1h0m1 1h0m0 1h0m1 0h0m0 -1h0m1 0h0m0 1h0m1 0h0m0 -1h0m1 0h0m0 1h0m1 -1h0m0 -1h0m0 2h0m1 -1h0m1 1h0m0 -2h0m0 1h0m1 0h0m0 1h0m1 -1h0m0 1h0m1 -1h0m0 1h0m1 0h0m0 -1h0m1 0h0m0 1h0m1 0h0m0 -2h0m0 1h0m1 0h0m0 1h0m1 -1h0m0 1h0m1 -1h0m0 1h0m1 -1h0m0 1h0m1 -1h0m0 1h0m1 -1h0m0 1h0m1 0h0m0 -1h0m1 0h0m0 1h0m1 -1h0m0 1h0m1 -1h0m0 1h0m1 -1h0m0 1h0m1 -1h0m0 1h0m0 -2h0m1 1h0m0 1h0m0 -2h0m1 0h0m0 2h0m0 -1h0m1 0h0m0 1h0m1 0h0m0 -1h0m0 -1h0m1 2h0m0 -1h0m0 -1h0m1 2h0m0 -1h0m1 0h0m0 1h0m1 -1h0m0 1h0m1 0h0m0 -1h0m0 -1h0m1 1h0m1 -1h0m0 1h0m1 0h0m0 1h0m1 0h0m0 -2h0m0 1h0m1 0h0m1 1h0m0 -1h0m1 0h0m0 1h0m1 -1h0m0 1h0m1 0h0m0 -1h0m1 0h0m0 1h0m1 -1h0m0 1h0m1 -1h0m0 1h0m1 0h0m0 -1h0m1 0h0m0 1h0m1 0h0m0 -1h0m1 0h0m0 1h0m0 -2h0m1 2h0m0 -1h0m1 1h0m0 -1h0m0 -1h0m1 1h0m0 1h0m0 -2h0m1 1h0m0 1h0m1 -1h0m0 1h0m1 -1h0m0 1h0m1 -1h0m0 1h0m1 0h0m0 -1h0m1 1h0m0 -1h0m1 0h0m0 1h0m1 0h0m0 -1h0m1 0h0m0 1h0m1 -2h0m0 1h0m0 1h0m1 -1h0m0 1h0m1 -1h0m0 1h0m1 -1h0m0 1h0m0 -2h0m1 1h0m0 1h0m1 -1h0m0 1h0m1 -1h0m0 1h0m0 -2h0m1 1h0m0 1h0m1 0h0m0 -1h0m1 0h0m0 1h0m1 -1h0m0 1h0m1 -1h0m1 0h0m0 1h0m0 -2h0m1 1h0m0 -1h0m1 1h0m0 1h0m1 -1h0m0 1h0m1 -1h0m0 1h0m0 -2h0m1 0h0m0 1h0m0 1h0m1 -1h0m0 1h0m1 -1h0m0 1h0m1 -1h0m0 1h0m1 -1h0m0 1h0m1 -1h0m0 1h0m1 -1h0m0 1h0m1 -1h0m0 1h0m1 -1h0m0 1h0m1 0h0m0 -1h0m1 1h0m0 -1h0m1 0h0m0 1h0m1 0h0m0 -1h0m1 -1h0m0 1h0m0 1h0m1 -1h0m0 1h0m1 0h0m0 -2h0m0 1h0m1 0h0m0 1h0m1 -1h0m0 1h0m1 0h0m0 -1h0m1 1h0m0 -1h0m1 0h0m1 0h0m0 1h0m1 -1h0m0 -1h0m0 2h0m1 0h0m0 -1h0m1 0h0m0 1h0m1 0h0m0 -1h0m1 1h0m0 -1h0m1 1h0m0 -1h0m0 -1h0m1 2h0m0 -1h0m1 0h0m0 1h0m1 -1h0m0 1h0m1 0h0m0 -1h0m1 0h0m0 1h0m1 0h0m0 -1h0m1 0h0m1 0h0m0 1h0m1 -1h0m0 1h0m1 -1h0m0 1h0m1 -1h0m1 0h0m1 1h0m0 -1h0m1 0h0m0 -1h0m0 2h0m1 -1h0m1 1h0m0 -1h0m1 1h0m0 -1h0m1 0h0m0 -1h0m0 2h0m1 -2h0m0 1h0m0 1h0m1 -1h0m0 1h0m1 -1h0m1 0h0m0 1h0m1 0h0m0 -1h0m1 0h0m1 0h0m1 0h0m0 1h0m1 0h0m0 -1h0m1 1h0m0 -1h0m1 0h0m1 0h0m0 1h0m1 -1h0m0 1h0m1 -1h0m0 1h0m0 -2h0m1 1h0m0 1h0m1 0h0m0 -1h0m1 1h0m0 -1h0m1 0h0m0 1h0m1 -1h0m0 1h0m1 0h0m0 -1h0m1 1h0m0 -1h0m1 0h0m0 1h0m1 -1h0m1 -1h0m0 2h0m0 -1h0m1 0h0m0 1h0m1 0h0m0 -1h0m1 0h0m0 1h0m1 -1h0m0 1h0m1 0h0m0 -1h0m1 1h0m0 -1h0m0 -1h0m1 1h0m0 1h0m1 0h0m0 -1h0m0 -1h0m1 2h0m0 -1h0m1 0h0m1 0h0m1 0h0m0 1h0m1 -1h0m0 1h0m1 -1h0m0 1h0m1 -1h0m0 1h0m1 0h0m0 -1h0m1 1h0m0 -1h0m1 0h0m0 1h0m0 -2h0m1 1h0m0 1h0m1 -1h0m0 -1h0m0 2h0m1 -1h0m0 1h0m1 0h0m0 -1h0m1 1h0m0 -1h0m1 0h0m0 1h0m1 -1h0m0 1h0m1 -1h0m1 0h0m0 -1h0m1 1h0m1 1h0m0 -1h0m1 0h0m0 1h0m1 -2h0m0 2h0m0 -1h0m1 1h0m0 -1h0m1 0h0m0 -1h0m1 2h0m0 -1h0m1 0h0m1 0h0m0 1h0m0 -2h0m1 2h0m0 -1h0m1 1h0m0 -1h0m1 0h0m0 1h0m1 -1h0m0 1h0m1 -1h0m0 1h0m1 -1h0m0 1h0m1 0h0m0 -1h0m1 1h0m0 -1h0m1 0h0m0 1h0m1 -1h0m0 1h0m0 -2h0m1 1h0m0 1h0m1 -1h0m0 1h0m1 -1h0m0 1h0m1 0h0m0 -1h0m1 0h0m0 1h0m1 -1h0m0 1h0m0 -2h0m1 0h0m0 1h0m0 1h0m1 -1h0m0 1h0m1 0h0m0 -2h0m0 1h0m1 0h0m0 1h0m1 -1h0m0 -1h0m0 2h0m1 0h0m0 -1h0m1 0h0m1 1h0m0 -1h0m1 0h0m0 -1h0m0 2h0m1 0h0m0 -1h0m0 -1h0m1 2h0m0 -1h0m1 0h0m0 1h0m1 -1h0m0 1h0m1 0h0m0 -1h0m1 0h0m1 0h0m0 1h0m1 0h0m0 -1h0m1 0h0m0 -1h0m1 1h0m0 1h0m1 0h0m0 -1h0m1 0h0m0 1h0m1 -1h0m0 1h0m1 -1h0m0 1h0m0 -2h0m1 1h0m0 1h0m1 -1h0m0 1h0m1 -1h0m0 -1h0m0 2h0m1 -1h0m0 1h0m1 -1h0m0 1h0m1 -1h0m1 0h0m0 1h0m1 -1h0m0 1h0m1 -1h0m0 -1h0m0 2h0m1 -1h0m1 0h0m0 1h0m0 -2h0m1 1h0m0 -1h0m1 1h0m1 0h0m0 1h0m1 -1h0m0 1h0m1 -1h0m0 1h0m1 -1h0m0 -1h0m0 2h0m1 0h0m0 -1h0m1 0h0m1 1h0m0 -1h0m1 1h0m0 -1h0m1 1h0m0 -1h0m0 -1h0m1 1h0m0 1h0m0 -2h0m1 1h0m0 1h0m1 0h0m0 -1h0m0 -1h0m1 1h0m0 -1h0m0 2h0m1 -1h0m0 1h0m1 -1h0m0 1h0m1 -1h0m0 1h0m1 -1h0m1 0h0m0 1h0m1 0h0m0 -1h0m1 -1h0m0 2h0m0 -1h0m1 1h0m0 -1h0m1 0h0m0 1h0m1 -1h0m0 1h0m0 -2h0m1 1h0m0 1h0m1 -1h0m0 1h0m1 0h0m0 -1h0m1 0h0m0 1h0m1 -1h0m0 1h0m1 -2h0m0 1h0m1 0h0m0 1h0m1 -1h0m0 1h0m1 -1h0m1 0h0m0 1h0m1 -1h0m0 1h0m1 -1h0m0 1h0m1 0h0m0 -1h0m1 0h0m1 0h0m0 1h0m0 -2h0m1 2h0m0 -1h0m1 0h0m0 1h0m1 -1h0m0 1h0m1 -1h0m0 -1h0m1 0h0m0 1h0m1 0h0m0 1h0m1 -1h0m0 -1h0m0 2h0m1 0h0m0 -1h0m0 -1h0m1 1h0m0 1h0m1 -1h0m1 0h0m1 1h0m0 -1h0m1 1h0m0 -1h0m1 0h0m0 1h0m1 -1h0m0 1h0m1 -2h0m0 1h0m1 0h0m0 1h0m1 -1h0m0 1h0m1 -1h0m0 1h0m1 0h0m0 -1h0m1 0h0m1 0h0m0 1h0m1 -1h0m0 1h0m1 -1h0m0 1h0m1 -1h0m0 -1h0m0 2h0m1 -1h0m0 1h0m1 -1h0m0 1h0m1 0h0m0 -2h0m0 1h0m1 1h0m0 -1h0m1 0h0m0 1h0m1 -1h0m0 1h0m1 -1h0m1 0h0m0 1h0m1 0h0m0 -1h0m0 -1h0m1 1h0m0 1h0m1 -1h0m0 1h0m1 -2h0m0 2h0m0 -1h0m1 0h0m0 1h0m1 -1h0m0 1h0m1 -1h0m1 0h0m0 1h0m1 -1h0m0 1h0m1 -1h0m0 1h0m1 -1h0m0 1h0m1 -1h0m0 1h0m1 -1h0m0 1h0m1 -1h0m0 1h0m1 0h0m0 -1h0m1 0h0m0 1h0m1 -1h0m0 1h0m1 0h0m0 -1h0m0 -1h0m1 1h0m0 1h0m0 -2h0m1 1h0m0 1h0m1 -1h0m0 1h0m1 -2h0m0 1h0m0 1h0m1 -1h0m1 0h0m0 1h0m1 -1h0m0 1h0m1 -1h0m1 0h0m0 1h0m1 -1h0m0 1h0m1 -1h0m0 -1h0m1 1h0m0 1h0m1 -1h0m0 1h0m1 0h0m0 -1h0m1 0h0m0 1h0m1 0h0m0 -1h0m0 -1h0m1 1h0m0 1h0m1 -1h0m1 1h0m0 -1h0m1 0h0m0 1h0m1 -1h0m0 1h0m1 0h0m0 -1h0m1 1h0m0 -1h0m0 -1h0m1 2h0m0 -1h0m0 -1h0m1 1h0m0 1h0m1 0h0m0 -1h0m1 0h0m0 -1h0m0 2h0m1 -1h0m0 1h0m1 0h0m0 -1h0m1 0h0m0 -1h0m0 2h0m1 -1h0m1 0h0m0 1h0m1 -1h0m0 1h0m0 -2h0m1 2h0m0 -1h0m1 0h0m0 1h0m1 0h0m0 -1h0m0 -1h0m1 2h0m0 -1h0m1 0h0m1 -1h0m0 1h0m0 1h0m1 0h0m0 -1h0m1 1h0m0 -1h0m0 -1h0m1 1h0m0 1h0m1 0h0m0 -1h0m0 -1h0m1 1h0m0 1h0m1 -1h0m0 1h0m1 -1h0m0 1h0m1 -1h0m0 1h0m1 -1h0m0 1h0m1 -1h0m0 1h0m1 -1h0m1 0h0m0 1h0m1 0h0m0 -1h0m1 0h0m0 1h0m1 -1h0m0 -1h0m1 1h0m0 1h0m1 -2h0m0 1h0m0 1h0m1 -1h0m0 1h0m1 -1h0m0 1h0m1 -1h0m0 1h0m1 0h0m0 -1h0m0 -1h0m1 2h0m0 -1h0m1 0h0m0 1h0m1 -1h0m0 -1h0m0 2h0m1 -1h0m1 1h0m0 -1h0m1 0h0m0 1h0m1 -1h0m0 1h0m0 -2h0m1 1h0m0 1h0m1 0h0m0 -1h0m1 0h0m0 1h0m1 -1h0m0 1h0m1 -1h0m0 1h0m1 -1h0m0 1h0m1 -1h0m0 1h0m1 -1h0m0 1h0m1 0h0m0 -1h0m1 0h0m0 1h0m1 0h0m0 -1h0m0 -1h0m1 2h0m0 -1h0m1 0h0m0 1h0m1 0h0m0 -1h0m1 1h0m0 -1h0m1 1h0m0 -1h0m1 0h0m0 1h0m1 0h0m0 -1h0m1 0h0m0 1h0m0 -2h0m1 1h0m0 1h0m1 -1h0m0 1h0m1 0h0m0 -1h0m0 -1h0m1 1h0m0 1h0m1 0h0m0 -1h0m1 1h0m0 -1h0m1 1h0m0 -1h0m1 0h0m0 -1h0m0 2h0m1 0h0m0 -1h0m0 -1h0m1 0h0m0 1h0m0 1h0m1 0h0m0 -1h0m1 1h0m0 -1h0m1 0h0m0 1h0m1 -1h0m0 1h0m1 -1h0m0 -1h0m1 1h0m0 -1h0m1 2h0m0 -1h0m1 0h0m0 1h0m1 -1h0m1 0h0m0 1h0m1 -1h0m0 1h0m1 -1h0m0 1h0m0 -2h0m1 1h0m1 0h0m0 -1h0m0 2h0m1 0h0m0 -1h0m0 -1h0m1 1h0m0 1h0m1 -1h0m0 1h0m1 0h0m0 -1h0m1 0h0m0 1h0m1 -1h0m0 -1h0m0 2h0m1 -1h0m0 1h0m0 -2h0m1 1h0m0 1h0m1 -1h0m0 1h0m1 -1h0m0 1h0m0 -2h0m1 2h0m0 -1h0m1 0h0m0 1h0m1 -1h0m1 0h0m0 1h0m1 -1h0m1 1h0m0 -1h0m1 1h0m0 -1h0m1 0h0m0 1h0m1 -1h0m0 1h0m1 -1h0m0 1h0m1 -1h0m0 1h0m1 0h0m0 -1h0m1 0h0m1 -1h0m0 1h0m0 1h0m1 -1h0m0 1h0m1 -1h0m1 0h0m0 1h0m1 0h0m0 -1h0m0 -1h0m1 1h0m0 -1h0m0 2h0m1 0h0m0 -1h0m0 -1h0m1 1h0m0 1h0m1 -1h0m0 -1h0m0 2h0m1 -1h0m0 1h0m0 -2h0m1 1h0m0 1h0m1 -1h0m0 1h0m1 -1h0m1 0h0m0 1h0m1 -1h0m0 1h0m1 0h0m0 -1h0m1 0h0m0 1h0m1 -1h0m0 1h0m1 -1h0m0 1h0m1 0h0m0 -1h0m1 0h0m0 1h0m1 0h0m0 -1h0m1 0h0m0 -1h0m0 2h0m1 -2h0m0 1h0m0 1h0m1 -2h0m0 1h0m0 1h0m1 -1h0m1 1h0m0 -1h0m0 -1h0m1 2h0m0 -1h0m0 -1h0m1 1h0m1 1h0m0 -1h0m1 0h0m0 1h0m0 -2h0m1 1h0m0 1h0m1 -1h0m0 1h0m1 0h0m0 -1h0m1 0h0m1 0h0m0 1h0m1 -1h0m0 1h0m1 -1h0m0 1h0m1 -1h0m0 -1h0m0 2h0m1 -1h0m1 0h0m0 -1h0m0 2h0m1 0h0m0 -1h0m1 0h0m0 1h0m1 -1h0m0 1h0m0 -2h0m1 2h0m0 -1h0m1 0h0m0 1h0m1 -1h0m0 1h0m1 -1h0m0 1h0m1 0h0m0 -1h0m1 0h0m0 -1h0m1 2h0m0 -1h0m1 0h0m0 -1h0m0 2h0m1 -1h0m0 1h0m1 0h0m0 -2h0m0 1h0m1 0h0m1 1h0m0 -1h0m0 -1h0m1 1h0m0 -1h0m1 1h0m0 1h0m1 -1h0m0 1h0m0 -2h0m1 2h0m0 -1h0m0 -1h0m1 1h0m0 1h0m1 0h0m0 -1h0m1 1h0m0 -1h0m1 1h0m0 -2h0m0 1h0m1 0h0m0 1h0m1 -1h0m1 1h0m0 -1h0m1 1h0m0 -1h0m1 0h0m0 1h0m1 -1h0m0 1h0m1 -1h0m1 -1h0m0 2h0m0 -1h0m1 0h0m1 -1h0m0 1h0m1 0h0m1 1h0m0 -1h0m1 1h0m0 -1h0m1 1h0m0 -1h0m1 0h0m0 1h0m1 -1h0m0 -1h0m1 2h0m0 -2h0m0 1h0m1 1h0m0 -1h0m1 -1h0m0 1h0m1 0h0m0 1h0m1 -1h0m0 1h0m0 -2h0m1 1h0m0 1h0m1 -1h0m0 1h0m0 -2h0m1 1h0m0 1h0m1 -1h0m0 1h0m1 -2h0m0 2h0m0 -1h0m1 1h0m0 -1h0m1 1h0m0 -1h0m1 0h0m0 1h0m1 -1h0m0 1h0m1 0h0m0 -1h0m1 0h0m0 1h0m1 -2h0m0 2h0m0 -1h0m1 0h0m0 -1h0m1 1h0m0 1h0m1 -1h0m0 -1h0m1 1h0m0 1h0m1 -2h0m0 1h0m1 -1h0m0 1h0m0 1h0m1 -1h0m0 1h0m1 -1h0m1 0h0m0 1h0m1 -1h0m0 1h0m1 -1h0m0 1h0m1 -2h0m0 1h0m0 1h0m1 -1h0m0 1h0m1 -1h0m0 1h0m1 -1h0m1 0h0m1 0h0m0 1h0m0 -2h0m1 0h0m0 2h0m0 -1h0m1 0h0m0 -1h0m1 1h0m0 1h0m1 -1h0m0 1h0m1 -1h0m1 0h0m0 1h0m1 -1h0m0 1h0m1 -1h0m1 1h0m0 -1h0m1 1h0m0 -1h0m1 0h0m0 1h0m1 -1h0m0 -1h0m1 1h0m0 1h0m1 -1h0m0 1h0m1 0h0m0 -1h0m0 -1h0m1 1h0m0 1h0m1 -1h0m1 -1h0m0 1h0m0 1h0m1 -1h0m1 1h0m0 -1h0m1 0h0m0 1h0m1 -1h0m0 1h0m1 -1h0m0 -1h0m0 2h0m1 0h0m0 -1h0m1 0h0m0 1h0m1 -1h0m0 1h0m1 -1h0m0 1h0m1 0h0m0 -1h0m1 0h0m0 1h0m0 -2h0m1 1h0m0 1h0m1 0h0m0 -2h0m0 1h0m1 0h0m0 -1h0m1 0h0m0 1h0m1 -1h0m0 -1h0m0 2h0m1 -1h0m0 1h0m1 0h0m0 -1h0m0 -1h0m1 1h0m0 1h0m1 -1h0m1 0h0m0 1h0m1 -1h0m0 1h0m1 -1h0m0 -1h0m1 1h0m1 0h0m0 1h0m1 -1h0m0 1h0m1 0h0m0 -1h0m0 -1h0m1 1h0m1 0h0m1 0h0m0 1h0m1 -1h0m1 0h0m0 1h0m1 -1h0m0 1h0m0 -2h0m1 1h0m0 -1h0m1 1h0m0 1h0m1 -1h0m0 1h0m1 -1h0m0 1h0m1 -1h0m0 -1h0m1 2h0m0 -1h0m1 0h0m1 1h0m0 -1h0m1 1h0m0 -1h0m1 0h0m0 1h0m0 -2h0m1 1h0m0 1h0m1 -2h0m0 2h0m0 -1h0m1 0h0m0 -1h0m1 1h0m0 -1h0m0 2h0m1 -1h0m0 1h0m1 -1h0m0 1h0m1 -1h0m0 -1h0m0 2h0m1 -1h0m0 1h0m1 -1h0m0 -1h0m0 2h0m1 -1h0m0 -1h0m0 2h0m1 -1h0m0 1h0m1 -1h0m0 1h0m1 -1h0m0 1h0m1 0h0m0 -1h0" stroke="#000" stroke-width="3.2" stroke-linecap="round" fill="none"/>
<path d="M751.4 959.6h4.2l-2.1-4.1z" fill="#ff0000"/>
<circle cx="753.5" cy="1004.5" r="1.3" fill="#000"/>
<path d="M105.5 1009.5H1485.5" stroke="#b0b0b0" stroke-width="1.11" stroke-dasharray="1.11 1.83" fill="none"/>
<path d="M105.5 983.5H1485.5" stroke="#b0b0b0" stroke-width="1.11" stroke-dasharray="1.11 1.83" fill="none"/>
<path d="M105.5 957.5H1485.5" stroke="#b0b0b0" stroke-width="1.11" stroke-dasharray="1.11 1.83" fill="none"/>
<path d="M162.0 1011.4V954.5" stroke="#800080" stroke-width="2.08" stroke-dasharray="2.08 3.44" fill="none"/>
<path d="M1259.9 1011.4V954.5" stroke="#800080" stroke-width="2.08" stroke-dasharray="2.08 3.44" fill="none"/>
<path d="M1302.9 1011.4V954.5" stroke="#800080" stroke-width="2.08" stroke-dasharray="2.08 3.44" fill="none"/>
</g>
<rect x="105.5" y="725.5" width="1380.0" height="285.9" fill="none" stroke="#000" stroke-width="1.11"/>
<path d="M105.5 954.5H1485.5" stroke="#000" stroke-width="1.11"/>
<path d="M105.5 1009.5h-4.86M105.5 983.5h-4.86M105.5 957.5h-4.86" stroke="#000" stroke-width="1.11" fill="none"/><path d="M105.5 996.5h-2.78M105.5 970.5h-2.78" stroke="#000" stroke-width="0.83" fill="none"/>
<path d="M162.44 1011.4v4.86M458.94 1011.4v4.86M755.44 1011.4v4.86M1051.94 1011.4v4.86M1348.44 1011.4v4.86" stroke="#000" stroke-width="1.11" fill="none"/>
<text x="95.50" y="1014.70" text-anchor="end" font-size="14.17" textLength="8.84" lengthAdjust="spacingAndGlyphs">0</text>
<text x="95.50" y="988.70" text-anchor="end" font-size="14.17" textLength="8.84" lengthAdjust="spacingAndGlyphs">5</text>
<text x="95.50" y="962.70" text-anchor="end" font-size="14.17" textLength="17.67" lengthAdjust="spacingAndGlyphs">10</text>
<text x="158.08" y="1031.80" text-anchor="start" font-size="14.17" textLength="8.84" lengthAdjust="spacingAndGlyphs">0</text>
<text x="440.83" y="1031.80" text-anchor="start" font-size="14.17" textLength="35.35" lengthAdjust="spacingAndGlyphs">2000</text>
<text x="737.83" y="1031.80" text-anchor="start" font-size="14.17" textLength="35.35" lengthAdjust="spacingAndGlyphs">4000</text>
<text x="1033.83" y="1031.80" text-anchor="start" font-size="14.17" textLength="35.35" lengthAdjust="spacingAndGlyphs">6000</text>
<text x="1330.83" y="1031.80" text-anchor="start" font-size="14.17" textLength="35.35" lengthAdjust="spacingAndGlyphs">8000</text>
<text transform="translate(69.3 984) rotate(-90)" x="-7.26" y="0" font-size="14.17" textLength="14.53" lengthAdjust="spacingAndGlyphs">dr</text>
</svg></body></html>
